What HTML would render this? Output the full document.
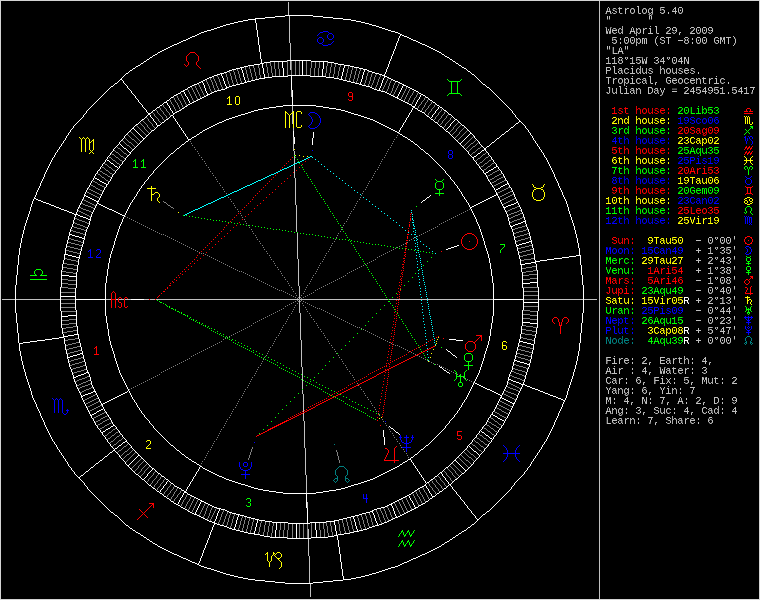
<!DOCTYPE html>
<html><head><meta charset="utf-8"><style>
html,body{margin:0;padding:0;background:#000;}
#wrap{position:relative;width:760px;height:600px;overflow:hidden;background:#000;}
svg{position:absolute;left:0;top:0;}
.ln{position:absolute;left:-1.5px;-webkit-text-stroke:0.3px currentColor;height:30px;white-space:pre;font-family:"Liberation Mono",monospace;font-size:30px;line-height:30px;}
.sh{position:relative;left:0;}
#tw{position:absolute;left:600px;top:1px;width:158px;height:440px;overflow:hidden;}
#panel{position:absolute;left:6px;top:5px;width:480px;height:1300px;transform-origin:0 0;transform:scale(0.333333);will-change:transform;}
</style></head><body><div id="wrap">
<svg width="760" height="600" viewBox="0 0 760 600" shape-rendering="crispEdges">
<path fill="rgb(192,192,192)" d="M288 2h1v13h-1zM289 16h1v27h-1zM290 43h1v17h-1zM290 61h1v9h-1zM291 90h1v7h-1zM292 106h1v6h-1zM292 113h1v11h-1zM293 128h1v3h-1zM293 137h1v14h-1zM294 151h1v4h-1zM294 156h1v8h-1zM294 165h1v13h-1zM295 178h1v27h-1zM296 205h1v27h-1zM297 233h1v26h-1zM298 259h1v27h-1zM299 286h1v13h-1zM584 299h13v1h-13zM300 299h88v1h-88zM125 299h6v1h-6zM539 299h44v1h-44zM144 299h5v1h-5zM156 299h143v1h-143zM2 299h13v1h-13zM389 299h104v1h-104zM16 299h44v1h-44zM116 299h2v1h-2zM150 299h5v1h-5zM119 299h5v1h-5zM106 299h5v1h-5zM299 300h1v13h-1zM300 313h1v27h-1zM301 340h1v27h-1zM302 367h1v22h-1zM302 390h1v4h-1zM303 394h1v18h-1zM303 413h1v8h-1zM304 421h1v27h-1zM305 448h1v27h-1zM306 475h1v18h-1zM307 502h1v6h-1zM308 529h1v9h-1zM308 539h1v17h-1zM309 556h1v27h-1zM310 584h1v13h-1zM599 1h1v598h-1z"/>
<path fill="rgb(255,255,255)" d="M285 15h28v1h-28zM313 16h10v1h-10zM275 16h10v1h-10zM265 17h10v1h-10zM323 17h10v1h-10zM333 18h10v1h-10zM255 18h10v1h-10zM248 19h8v1h-8zM343 19h8v1h-8zM243 20h5v1h-5zM351 20h5v1h-5zM238 21h5v1h-5zM356 21h5v1h-5zM255 20h1v3h-1zM361 22h4v1h-4zM234 22h4v1h-4zM230 23h4v1h-4zM365 23h4v1h-4zM369 24h3v1h-3zM226 24h4v1h-4zM223 25h3v1h-3zM372 25h4v1h-4zM220 26h3v1h-3zM376 26h3v1h-3zM217 27h3v1h-3zM379 27h3v1h-3zM214 28h3v1h-3zM382 28h3v1h-3zM256 23h1v7h-1zM211 29h3v1h-3zM385 29h3v1h-3zM388 30h3v1h-3zM207 30h4v1h-4zM391 31h4v1h-4zM204 31h3v1h-3zM395 32h3v1h-3zM201 32h3v1h-3zM199 33h2v1h-2zM398 33h2v1h-2zM400 34h2v1h-2zM197 34h2v1h-2zM402 35h2v1h-2zM400 35h1v1h-1zM195 35h2v1h-2zM257 30h1v7h-1zM192 36h3v1h-3zM404 36h3v1h-3zM399 36h1v2h-1zM190 37h2v1h-2zM407 37h2v1h-2zM188 38h2v1h-2zM409 38h2v1h-2zM411 39h2v1h-2zM186 39h2v1h-2zM398 38h1v3h-1zM413 40h3v1h-3zM183 40h3v1h-3zM416 41h2v1h-2zM181 41h2v1h-2zM397 41h1v2h-1zM179 42h2v1h-2zM418 42h2v1h-2zM177 43h2v1h-2zM420 43h2v1h-2zM258 37h1v8h-1zM174 44h3v1h-3zM422 44h3v1h-3zM396 43h1v3h-1zM172 45h2v1h-2zM425 45h2v1h-2zM427 46h2v1h-2zM170 46h2v1h-2zM429 47h2v1h-2zM168 47h2v1h-2zM395 46h1v3h-1zM166 48h2v1h-2zM431 48h2v1h-2zM164 49h2v1h-2zM433 49h2v1h-2zM394 49h1v2h-1zM435 50h2v1h-2zM162 50h2v1h-2zM259 45h1v7h-1zM160 51h2v1h-2zM437 51h2v1h-2zM439 52h2v1h-2zM158 52h2v1h-2zM393 51h1v3h-1zM441 53h1v1h-1zM157 53h1v1h-1zM442 54h2v1h-2zM155 54h2v1h-2zM392 54h1v2h-1zM153 55h2v1h-2zM444 55h1v1h-1zM445 56h2v1h-2zM152 56h1v1h-1zM150 57h2v1h-2zM447 57h2v1h-2zM260 52h1v7h-1zM391 56h1v3h-1zM449 58h1v1h-1zM149 58h1v1h-1zM147 59h2v1h-2zM450 59h2v1h-2zM390 59h1v2h-1zM452 60h1v1h-1zM146 60h1v1h-1zM287 60h24v1h-24zM270 61h17v1h-17zM311 61h17v1h-17zM144 61h2v1h-2zM453 61h2v1h-2zM261 59h1v4h-1zM143 62h1v1h-1zM328 62h6v1h-6zM264 62h6v1h-6zM455 62h1v1h-1zM389 61h1v3h-1zM141 63h2v1h-2zM456 63h2v1h-2zM260 63h4v1h-4zM334 63h4v1h-4zM140 64h1v1h-1zM458 64h1v1h-1zM338 64h6v1h-6zM254 64h6v1h-6zM248 65h6v1h-6zM459 65h2v1h-2zM344 65h6v1h-6zM138 65h2v1h-2zM388 64h1v3h-1zM136 66h2v1h-2zM244 66h4v1h-4zM350 66h4v1h-4zM461 66h1v1h-1zM282 62h1v6h-1zM262 64h1v4h-1zM344 66h1v2h-1zM354 67h5v1h-5zM135 67h1v1h-1zM240 67h4v1h-4zM462 67h2v1h-2zM323 62h1v7h-1zM387 67h1v2h-1zM236 68h4v1h-4zM464 68h2v1h-2zM359 68h4v1h-4zM133 68h2v1h-2zM241 68h1v2h-1zM363 69h4v1h-4zM232 69h4v1h-4zM466 69h1v1h-1zM132 69h1v1h-1zM467 70h1v1h-1zM229 70h3v1h-3zM130 70h2v1h-2zM367 70h2v1h-2zM343 68h1v4h-1zM386 69h1v3h-1zM364 70h1v2h-1zM129 71h1v1h-1zM468 71h2v1h-2zM369 71h3v1h-3zM227 71h2v1h-2zM242 70h1v3h-1zM128 72h1v1h-1zM224 72h3v1h-3zM470 72h1v1h-1zM372 72h3v1h-3zM263 68h1v6h-1zM385 72h1v2h-1zM126 73h2v1h-2zM220 73h4v1h-4zM375 73h4v1h-4zM471 73h1v1h-1zM302 61h1v14h-1zM363 72h1v3h-1zM217 74h3v1h-3zM379 74h3v1h-3zM472 74h2v1h-2zM125 74h1v1h-1zM384 74h1v1h-1zM283 68h1v8h-1zM322 69h1v7h-1zM342 72h1v4h-1zM221 74h1v2h-1zM124 75h1v1h-1zM474 75h1v1h-1zM288 75h22v1h-22zM382 75h3v1h-3zM214 75h3v1h-3zM243 73h1v4h-1zM264 74h1v3h-1zM123 76h1v1h-1zM272 76h16v1h-16zM310 76h16v1h-16zM384 76h3v1h-3zM475 76h1v1h-1zM212 76h2v1h-2zM222 76h1v2h-1zM476 77h1v1h-1zM264 77h8v1h-8zM209 77h3v1h-3zM122 77h1v1h-1zM326 77h8v1h-8zM384 77h1v1h-1zM387 77h2v1h-2zM362 75h1v4h-1zM341 76h1v3h-1zM477 78h1v1h-1zM259 78h6v1h-6zM389 78h2v1h-2zM334 78h5v1h-5zM207 78h2v1h-2zM121 78h1v1h-1zM244 77h1v3h-1zM383 78h1v2h-1zM478 79h1v1h-1zM339 79h4v1h-4zM205 79h2v1h-2zM120 79h2v1h-2zM255 79h4v1h-4zM391 79h2v1h-2zM223 78h1v3h-1zM251 80h4v1h-4zM479 80h1v1h-1zM119 80h1v1h-1zM122 80h1v1h-1zM393 80h2v1h-2zM203 80h2v1h-2zM343 80h4v1h-4zM361 79h1v3h-1zM245 80h1v2h-1zM118 81h1v1h-1zM247 81h4v1h-4zM347 81h4v1h-4zM395 81h3v1h-3zM201 81h2v1h-2zM480 81h1v1h-1zM382 80h1v3h-1zM123 81h1v2h-1zM117 82h1v1h-1zM481 82h1v1h-1zM202 82h1v1h-1zM244 82h3v1h-3zM199 82h2v1h-2zM398 82h2v1h-2zM351 82h4v1h-4zM224 81h1v3h-1zM360 82h1v2h-1zM124 83h1v1h-1zM240 83h4v1h-4zM482 83h1v1h-1zM115 83h2v1h-2zM400 83h2v1h-2zM355 83h4v1h-4zM197 83h2v1h-2zM203 83h1v2h-1zM236 84h4v1h-4zM359 84h3v1h-3zM114 84h1v1h-1zM194 84h3v1h-3zM483 84h2v1h-2zM402 84h2v1h-2zM125 84h1v1h-1zM381 83h1v3h-1zM225 84h1v2h-1zM232 85h4v1h-4zM126 85h1v1h-1zM403 85h3v1h-3zM362 85h4v1h-4zM113 85h1v1h-1zM192 85h2v1h-2zM485 85h1v1h-1zM190 86h2v1h-2zM226 86h1v1h-1zM229 86h3v1h-3zM406 86h2v1h-2zM486 86h1v1h-1zM366 86h4v1h-4zM111 86h2v1h-2zM204 85h1v3h-1zM380 86h1v2h-1zM402 86h1v2h-1zM127 86h1v2h-1zM110 87h1v1h-1zM226 87h3v1h-3zM370 87h2v1h-2zM487 87h2v1h-2zM408 87h2v1h-2zM188 87h2v1h-2zM410 88h2v1h-2zM128 88h1v1h-1zM489 88h1v1h-1zM372 88h2v1h-2zM225 88h2v1h-2zM109 88h1v1h-1zM187 88h1v1h-1zM291 76h1v14h-1zM379 88h1v2h-1zM401 88h1v2h-1zM185 89h2v1h-2zM412 89h2v1h-2zM129 89h1v1h-1zM490 89h1v1h-1zM221 89h4v1h-4zM374 89h3v1h-3zM108 89h1v1h-1zM205 88h1v3h-1zM107 90h1v1h-1zM183 90h2v1h-2zM491 90h1v1h-1zM377 90h4v1h-4zM414 90h2v1h-2zM130 90h1v1h-1zM217 90h4v1h-4zM400 90h1v2h-1zM106 91h1v1h-1zM381 91h4v1h-4zM416 91h2v1h-2zM181 91h3v1h-3zM214 91h3v1h-3zM492 91h1v1h-1zM206 91h1v2h-1zM131 91h1v2h-1zM418 92h1v1h-1zM385 92h2v1h-2zM212 92h2v1h-2zM180 92h1v1h-1zM493 92h1v1h-1zM105 92h1v1h-1zM399 92h1v2h-1zM184 92h1v2h-1zM207 93h1v1h-1zM210 93h2v1h-2zM387 93h2v1h-2zM419 93h2v1h-2zM104 93h1v1h-1zM132 93h1v1h-1zM178 93h2v1h-2zM494 93h1v1h-1zM133 94h1v1h-1zM495 94h1v1h-1zM103 94h1v1h-1zM421 94h2v1h-2zM207 94h3v1h-3zM389 94h2v1h-2zM176 94h2v1h-2zM398 94h1v2h-1zM185 94h1v2h-1zM174 95h2v1h-2zM102 95h1v1h-1zM496 95h1v1h-1zM134 95h1v1h-1zM423 95h2v1h-2zM206 95h2v1h-2zM391 95h2v1h-2zM420 95h1v2h-1zM101 96h1v1h-1zM173 96h1v1h-1zM425 96h1v1h-1zM186 96h1v1h-1zM393 96h2v1h-2zM397 96h1v1h-1zM497 96h1v1h-1zM204 96h2v1h-2zM135 96h1v2h-1zM395 97h3v1h-3zM498 97h1v1h-1zM426 97h2v1h-2zM100 97h1v1h-1zM171 97h2v1h-2zM202 97h2v1h-2zM419 97h1v2h-1zM187 97h1v2h-1zM428 98h1v1h-1zM136 98h1v1h-1zM499 98h1v1h-1zM397 98h2v1h-2zM99 98h1v1h-1zM170 98h1v1h-1zM200 98h2v1h-2zM399 99h2v1h-2zM418 99h1v1h-1zM429 99h1v1h-1zM500 99h1v1h-1zM98 99h1v1h-1zM169 99h1v1h-1zM198 99h2v1h-2zM137 99h1v1h-1zM188 99h1v2h-1zM97 100h1v1h-1zM501 100h1v1h-1zM430 100h2v1h-2zM196 100h2v1h-2zM401 100h2v1h-2zM167 100h2v1h-2zM417 100h1v2h-1zM138 100h1v2h-1zM166 101h1v1h-1zM96 101h1v1h-1zM502 101h1v1h-1zM403 101h2v1h-2zM432 101h1v1h-1zM194 101h2v1h-2zM189 101h1v2h-1zM95 102h1v1h-1zM139 102h1v1h-1zM503 102h1v1h-1zM405 102h2v1h-2zM164 102h3v1h-3zM433 102h2v1h-2zM192 102h2v1h-2zM416 102h1v2h-1zM190 103h2v1h-2zM435 103h1v1h-1zM140 103h1v1h-1zM407 103h2v1h-2zM163 103h1v1h-1zM504 103h1v1h-1zM94 103h1v1h-1zM292 90h1v15h-1zM167 103h1v2h-1zM505 104h1v1h-1zM162 104h1v1h-1zM141 104h1v1h-1zM93 104h1v1h-1zM436 104h1v1h-1zM409 104h2v1h-2zM188 104h2v1h-2zM415 104h1v2h-1zM437 105h2v1h-2zM506 105h1v1h-1zM168 105h1v1h-1zM283 105h33v1h-33zM411 105h1v1h-1zM160 105h2v1h-2zM92 105h1v1h-1zM187 105h1v1h-1zM142 105h1v2h-1zM185 106h2v1h-2zM91 106h1v1h-1zM507 106h1v1h-1zM276 106h7v1h-7zM412 106h3v1h-3zM316 106h7v1h-7zM159 106h1v1h-1zM439 106h1v1h-1zM169 106h1v2h-1zM90 107h1v1h-1zM269 107h7v1h-7zM508 107h1v1h-1zM143 107h1v1h-1zM323 107h6v1h-6zM184 107h1v1h-1zM440 107h2v1h-2zM413 107h2v1h-2zM157 107h2v1h-2zM438 107h1v2h-1zM144 108h1v1h-1zM329 108h7v1h-7zM156 108h1v1h-1zM263 108h6v1h-6zM442 108h1v1h-1zM182 108h2v1h-2zM509 108h1v1h-1zM89 108h1v1h-1zM415 108h2v1h-2zM412 108h1v2h-1zM170 108h1v2h-1zM155 109h1v1h-1zM145 109h1v1h-1zM437 109h1v1h-1zM181 109h1v1h-1zM417 109h1v1h-1zM258 109h5v1h-5zM443 109h1v1h-1zM336 109h5v1h-5zM88 109h1v1h-1zM510 109h1v1h-1zM171 110h1v1h-1zM341 110h4v1h-4zM511 110h1v1h-1zM436 110h1v1h-1zM444 110h2v1h-2zM254 110h4v1h-4zM179 110h2v1h-2zM153 110h2v1h-2zM87 110h1v1h-1zM418 110h2v1h-2zM411 110h1v2h-1zM146 110h1v2h-1zM446 111h1v1h-1zM152 111h1v1h-1zM251 111h3v1h-3zM345 111h3v1h-3zM177 111h2v1h-2zM420 111h2v1h-2zM435 111h1v2h-1zM172 111h1v2h-1zM512 111h1v2h-1zM86 111h1v2h-1zM151 112h1v1h-1zM410 112h1v1h-1zM147 112h1v1h-1zM248 112h3v1h-3zM348 112h3v1h-3zM175 112h2v1h-2zM422 112h2v1h-2zM447 112h1v1h-1zM424 113h1v1h-1zM85 113h1v1h-1zM448 113h1v1h-1zM351 113h3v1h-3zM245 113h3v1h-3zM148 113h3v1h-3zM513 113h1v1h-1zM173 113h2v1h-2zM434 113h1v1h-1zM409 113h1v2h-1zM84 114h1v1h-1zM241 114h4v1h-4zM148 114h2v1h-2zM173 114h1v1h-1zM425 114h1v1h-1zM354 114h4v1h-4zM449 114h2v1h-2zM514 114h1v1h-1zM433 114h1v1h-1zM451 115h1v1h-1zM147 115h1v1h-1zM238 115h3v1h-3zM358 115h3v1h-3zM426 115h1v1h-1zM171 115h2v1h-2zM150 115h1v2h-1zM408 115h1v2h-1zM432 115h1v2h-1zM515 115h1v2h-1zM83 115h1v2h-1zM427 116h2v1h-2zM452 116h1v1h-1zM361 116h3v1h-3zM235 116h3v1h-3zM146 116h1v1h-1zM170 116h1v1h-1zM173 116h1v2h-1zM429 117h1v1h-1zM516 117h1v1h-1zM145 117h1v1h-1zM151 117h1v1h-1zM431 117h1v1h-1zM453 117h1v1h-1zM169 117h1v1h-1zM232 117h3v1h-3zM364 117h3v1h-3zM82 117h1v1h-1zM407 117h1v1h-1zM144 118h1v1h-1zM517 118h1v1h-1zM168 118h1v1h-1zM81 118h1v1h-1zM174 118h1v1h-1zM152 118h1v1h-1zM229 118h3v1h-3zM367 118h3v1h-3zM430 118h1v1h-1zM454 118h1v1h-1zM406 118h1v2h-1zM80 119h1v1h-1zM226 119h3v1h-3zM370 119h3v1h-3zM142 119h2v1h-2zM455 119h2v1h-2zM518 119h1v1h-1zM166 119h2v1h-2zM431 119h2v1h-2zM153 119h1v2h-1zM175 119h1v2h-1zM79 120h1v1h-1zM457 120h1v1h-1zM373 120h2v1h-2zM141 120h1v1h-1zM519 120h1v1h-1zM433 120h1v1h-1zM454 120h1v1h-1zM224 120h2v1h-2zM165 120h1v1h-1zM405 120h1v2h-1zM140 121h1v1h-1zM458 121h1v1h-1zM453 121h1v1h-1zM164 121h1v1h-1zM78 121h1v1h-1zM519 121h2v1h-2zM222 121h2v1h-2zM434 121h1v1h-1zM375 121h2v1h-2zM154 121h1v1h-1zM176 121h1v1h-1zM139 122h1v1h-1zM155 122h1v1h-1zM452 122h1v1h-1zM518 122h1v1h-1zM77 122h1v1h-1zM404 122h1v1h-1zM521 122h1v1h-1zM219 122h3v1h-3zM459 122h1v1h-1zM435 122h2v1h-2zM162 122h2v1h-2zM377 122h2v1h-2zM177 122h1v2h-1zM161 123h1v1h-1zM451 123h1v1h-1zM522 123h1v1h-1zM76 123h1v1h-1zM437 123h1v1h-1zM217 123h2v1h-2zM516 123h2v1h-2zM379 123h2v1h-2zM460 123h1v1h-1zM138 123h1v1h-1zM156 123h1v2h-1zM403 123h1v2h-1zM136 124h2v1h-2zM438 124h1v1h-1zM178 124h1v1h-1zM523 124h1v1h-1zM461 124h1v1h-1zM515 124h1v1h-1zM215 124h2v1h-2zM381 124h2v1h-2zM75 124h1v1h-1zM160 124h1v1h-1zM450 124h1v2h-1zM74 125h1v1h-1zM135 125h1v1h-1zM524 125h1v1h-1zM157 125h3v1h-3zM383 125h2v1h-2zM213 125h2v1h-2zM462 125h2v1h-2zM514 125h1v1h-1zM439 125h1v1h-1zM402 125h1v2h-1zM179 125h1v2h-1zM385 126h2v1h-2zM157 126h1v1h-1zM464 126h1v1h-1zM134 126h1v1h-1zM513 126h1v1h-1zM211 126h2v1h-2zM440 126h2v1h-2zM449 126h1v1h-1zM525 126h1v2h-1zM73 126h1v2h-1zM133 127h1v1h-1zM156 127h1v1h-1zM448 127h1v1h-1zM465 127h1v1h-1zM511 127h2v1h-2zM442 127h1v1h-1zM209 127h2v1h-2zM180 127h1v1h-1zM387 127h2v1h-2zM401 127h1v1h-1zM155 128h1v1h-1zM72 128h1v1h-1zM389 128h2v1h-2zM132 128h2v1h-2zM447 128h1v1h-1zM443 128h1v1h-1zM207 128h2v1h-2zM466 128h1v1h-1zM526 128h1v1h-1zM510 128h1v1h-1zM400 128h1v2h-1zM181 128h1v2h-1zM467 129h1v1h-1zM71 129h1v1h-1zM446 129h1v1h-1zM131 129h1v1h-1zM444 129h1v1h-1zM205 129h2v1h-2zM527 129h1v1h-1zM134 129h1v1h-1zM391 129h2v1h-2zM509 129h1v1h-1zM154 129h1v1h-1zM152 130h2v1h-2zM182 130h1v1h-1zM135 130h1v1h-1zM508 130h1v1h-1zM393 130h2v1h-2zM468 130h1v1h-1zM203 130h2v1h-2zM130 130h1v1h-1zM445 130h1v1h-1zM528 130h1v2h-1zM399 130h1v2h-1zM70 130h1v2h-1zM151 131h1v1h-1zM129 131h1v1h-1zM136 131h1v1h-1zM469 131h1v1h-1zM202 131h1v1h-1zM506 131h2v1h-2zM395 131h2v1h-2zM446 131h2v1h-2zM183 131h1v2h-1zM505 132h1v1h-1zM128 132h1v1h-1zM150 132h1v1h-1zM69 132h1v1h-1zM448 132h1v1h-1zM470 132h1v1h-1zM529 132h1v1h-1zM397 132h2v1h-2zM137 132h1v1h-1zM200 132h2v1h-2zM199 133h1v1h-1zM399 133h1v1h-1zM138 133h1v1h-1zM184 133h1v1h-1zM470 133h2v1h-2zM449 133h1v1h-1zM504 133h1v1h-1zM127 133h1v1h-1zM149 133h1v1h-1zM68 133h1v2h-1zM530 133h1v2h-1zM139 134h1v1h-1zM469 134h1v1h-1zM126 134h1v1h-1zM148 134h1v1h-1zM400 134h2v1h-2zM502 134h2v1h-2zM197 134h2v1h-2zM450 134h1v1h-1zM472 134h1v1h-1zM185 134h1v2h-1zM402 135h1v1h-1zM451 135h1v1h-1zM473 135h1v1h-1zM140 135h1v1h-1zM501 135h1v1h-1zM147 135h1v1h-1zM468 135h1v1h-1zM125 135h1v1h-1zM196 135h1v1h-1zM531 135h1v1h-1zM67 135h1v1h-1zM293 131h1v6h-1zM467 136h1v1h-1zM500 136h1v1h-1zM452 136h1v1h-1zM141 136h1v1h-1zM403 136h2v1h-2zM186 136h1v1h-1zM146 136h1v1h-1zM194 136h2v1h-2zM313 132h1v6h-1zM66 136h1v2h-1zM124 136h1v2h-1zM474 136h1v2h-1zM532 136h1v2h-1zM145 137h1v1h-1zM453 137h1v1h-1zM405 137h2v1h-2zM192 137h2v1h-2zM142 137h1v1h-1zM466 137h1v1h-1zM499 137h1v1h-1zM187 137h1v2h-1zM123 138h1v1h-1zM143 138h2v1h-2zM465 138h1v1h-1zM497 138h2v1h-2zM475 138h1v1h-1zM407 138h1v1h-1zM454 138h1v1h-1zM191 138h1v1h-1zM533 138h1v2h-1zM65 138h1v2h-1zM476 139h1v1h-1zM496 139h1v1h-1zM143 139h1v1h-1zM188 139h3v1h-3zM122 139h1v1h-1zM464 139h1v1h-1zM408 139h2v1h-2zM455 139h1v1h-1zM188 140h1v1h-1zM495 140h1v1h-1zM64 140h1v1h-1zM463 140h1v1h-1zM534 140h1v1h-1zM410 140h1v1h-1zM477 140h1v1h-1zM456 140h1v1h-1zM142 140h1v1h-1zM121 140h1v1h-1zM478 141h1v1h-1zM462 141h1v1h-1zM457 141h1v1h-1zM411 141h2v1h-2zM141 141h1v1h-1zM120 141h1v1h-1zM494 141h1v1h-1zM186 141h2v1h-2zM535 141h1v2h-1zM63 141h1v2h-1zM413 142h1v1h-1zM140 142h1v1h-1zM458 142h1v1h-1zM185 142h1v1h-1zM492 142h2v1h-2zM461 142h1v1h-1zM294 137h1v7h-1zM479 142h1v2h-1zM119 142h1v2h-1zM139 143h1v1h-1zM491 143h1v1h-1zM536 143h1v1h-1zM459 143h2v1h-2zM414 143h1v1h-1zM184 143h1v1h-1zM62 143h1v1h-1zM312 138h1v7h-1zM118 144h1v1h-1zM490 144h1v1h-1zM415 144h2v1h-2zM480 144h1v1h-1zM182 144h2v1h-2zM120 144h1v1h-1zM460 144h1v1h-1zM138 144h1v1h-1zM61 144h1v2h-1zM537 144h1v2h-1zM117 145h1v1h-1zM489 145h1v1h-1zM481 145h1v1h-1zM181 145h1v1h-1zM417 145h1v1h-1zM137 145h1v1h-1zM121 145h1v1h-1zM461 145h1v1h-1zM418 146h1v1h-1zM462 146h1v1h-1zM538 146h1v1h-1zM60 146h1v1h-1zM136 146h1v1h-1zM482 146h1v1h-1zM122 146h1v1h-1zM487 146h2v1h-2zM180 146h1v1h-1zM116 146h1v1h-1zM123 147h1v1h-1zM419 147h1v1h-1zM463 147h1v1h-1zM135 147h1v1h-1zM486 147h1v1h-1zM179 147h1v1h-1zM115 147h1v1h-1zM483 147h1v1h-1zM539 147h1v2h-1zM59 147h1v2h-1zM420 148h1v1h-1zM114 148h1v1h-1zM134 148h1v1h-1zM464 148h1v1h-1zM177 148h2v1h-2zM124 148h2v1h-2zM484 148h2v2h-2zM133 149h1v1h-1zM58 149h1v1h-1zM540 149h1v1h-1zM465 149h1v1h-1zM126 149h1v1h-1zM421 149h2v1h-2zM176 149h1v1h-1zM113 149h1v2h-1zM423 150h1v1h-1zM466 150h1v1h-1zM485 150h1v1h-1zM482 150h2v1h-2zM175 150h1v1h-1zM132 150h1v1h-1zM127 150h1v1h-1zM57 150h1v2h-1zM541 150h1v2h-1zM128 151h1v1h-1zM112 151h1v1h-1zM424 151h1v1h-1zM467 151h1v1h-1zM486 151h1v1h-1zM174 151h1v1h-1zM131 151h1v1h-1zM481 151h1v1h-1zM56 152h1v1h-1zM173 152h1v1h-1zM425 152h1v1h-1zM480 152h1v1h-1zM542 152h1v1h-1zM487 152h1v1h-1zM129 152h2v1h-2zM111 152h1v1h-1zM468 152h1v2h-1zM426 153h2v1h-2zM130 153h1v1h-1zM171 153h2v1h-2zM478 153h2v1h-2zM543 153h1v2h-1zM55 153h1v2h-1zM110 153h1v2h-1zM488 153h1v2h-1zM129 154h1v1h-1zM469 154h1v1h-1zM428 154h1v1h-1zM477 154h1v1h-1zM170 154h1v1h-1zM429 155h1v1h-1zM128 155h1v1h-1zM489 155h1v1h-1zM470 155h1v1h-1zM169 155h1v1h-1zM109 155h1v1h-1zM476 155h1v1h-1zM544 155h1v2h-1zM54 155h1v2h-1zM490 156h1v1h-1zM168 156h1v1h-1zM430 156h1v1h-1zM108 156h1v1h-1zM471 156h1v1h-1zM474 156h2v1h-2zM127 156h1v1h-1zM53 157h1v1h-1zM431 157h1v1h-1zM167 157h1v1h-1zM545 157h1v1h-1zM126 157h1v1h-1zM472 157h2v1h-2zM107 157h1v2h-1zM491 157h1v2h-1zM166 158h1v1h-1zM432 158h1v1h-1zM52 158h1v2h-1zM473 158h1v2h-1zM546 158h1v2h-1zM125 158h1v2h-1zM106 159h1v1h-1zM492 159h1v1h-1zM433 159h1v1h-1zM165 159h1v1h-1zM474 160h1v1h-1zM124 160h1v1h-1zM164 160h1v1h-1zM107 160h2v1h-2zM434 160h1v1h-1zM547 160h1v2h-1zM51 160h1v2h-1zM493 160h1v2h-1zM105 160h1v2h-1zM435 161h1v1h-1zM123 161h1v1h-1zM475 161h1v1h-1zM163 161h1v1h-1zM109 161h1v1h-1zM436 162h1v1h-1zM162 162h1v1h-1zM110 162h1v1h-1zM104 162h1v1h-1zM494 162h1v1h-1zM476 162h1v2h-1zM50 162h1v2h-1zM548 162h1v2h-1zM122 162h1v2h-1zM161 163h1v1h-1zM495 163h1v1h-1zM103 163h1v1h-1zM437 163h1v1h-1zM111 163h2v1h-2zM477 164h1v1h-1zM113 164h1v1h-1zM438 164h1v1h-1zM121 164h1v1h-1zM160 164h1v1h-1zM49 164h1v2h-1zM549 164h1v2h-1zM102 164h1v2h-1zM496 164h1v2h-1zM478 165h1v1h-1zM114 165h1v1h-1zM120 165h1v1h-1zM159 165h1v1h-1zM439 165h1v1h-1zM440 166h1v1h-1zM101 166h1v1h-1zM115 166h2v1h-2zM496 166h2v1h-2zM158 166h1v1h-1zM479 166h1v2h-1zM550 166h1v2h-1zM48 166h1v2h-1zM119 166h1v2h-1zM117 167h1v1h-1zM441 167h1v1h-1zM157 167h1v1h-1zM494 167h2v1h-2zM498 167h1v2h-1zM100 167h1v2h-1zM118 168h1v1h-1zM156 168h1v1h-1zM480 168h1v1h-1zM442 168h1v1h-1zM493 168h1v1h-1zM47 168h1v2h-1zM551 168h1v2h-1zM117 169h1v1h-1zM155 169h1v1h-1zM481 169h1v1h-1zM491 169h2v1h-2zM443 169h1v1h-1zM99 169h1v1h-1zM499 169h1v1h-1zM500 170h1v1h-1zM98 170h1v1h-1zM116 170h1v1h-1zM444 170h1v1h-1zM482 170h1v1h-1zM489 170h2v1h-2zM154 170h1v1h-1zM46 170h1v2h-1zM552 170h1v2h-1zM488 171h1v1h-1zM501 171h1v2h-1zM97 171h1v2h-1zM153 171h1v2h-1zM483 171h1v2h-1zM115 171h1v2h-1zM445 171h1v2h-1zM486 172h2v1h-2zM45 172h1v2h-1zM553 172h1v2h-1zM446 173h1v1h-1zM96 173h1v1h-1zM502 173h1v1h-1zM152 173h1v1h-1zM114 173h1v1h-1zM484 173h2v1h-2zM151 174h1v1h-1zM113 174h1v1h-1zM447 174h1v1h-1zM485 174h1v1h-1zM95 174h1v2h-1zM503 174h1v2h-1zM150 175h1v1h-1zM448 175h1v1h-1zM44 174h1v3h-1zM554 174h1v3h-1zM112 175h1v2h-1zM486 175h1v2h-1zM449 176h1v1h-1zM149 176h1v1h-1zM504 176h1v2h-1zM94 176h1v2h-1zM555 177h1v2h-1zM43 177h1v2h-1zM148 177h1v2h-1zM487 177h1v2h-1zM450 177h1v2h-1zM111 177h1v2h-1zM95 178h2v1h-2zM505 178h1v2h-1zM93 178h1v2h-1zM451 179h1v1h-1zM147 179h1v1h-1zM97 179h2v1h-2zM488 179h1v2h-1zM110 179h1v2h-1zM556 179h1v2h-1zM42 179h1v2h-1zM506 180h1v1h-1zM452 180h1v1h-1zM99 180h1v1h-1zM146 180h1v1h-1zM92 180h1v1h-1zM489 181h1v1h-1zM145 181h1v1h-1zM453 181h1v1h-1zM100 181h2v1h-2zM109 181h1v1h-1zM91 181h1v2h-1zM507 181h1v2h-1zM41 181h1v2h-1zM557 181h1v2h-1zM102 182h2v1h-2zM144 182h1v2h-1zM490 182h1v2h-1zM108 182h1v2h-1zM454 182h1v2h-1zM507 183h2v1h-2zM104 183h2v1h-2zM90 183h1v2h-1zM491 184h1v1h-1zM508 184h1v1h-1zM143 184h1v1h-1zM106 184h2v1h-2zM505 184h2v1h-2zM455 184h1v1h-1zM40 183h1v3h-1zM558 183h1v3h-1zM503 185h2v1h-2zM456 185h1v1h-1zM142 185h1v1h-1zM106 185h1v2h-1zM492 185h1v2h-1zM509 185h1v2h-1zM89 185h1v2h-1zM501 186h2v1h-2zM457 186h1v2h-1zM141 186h1v2h-1zM39 186h1v2h-1zM559 186h1v2h-1zM500 187h1v1h-1zM88 187h1v1h-1zM493 187h1v1h-1zM105 187h1v1h-1zM510 187h1v1h-1zM140 188h1v1h-1zM458 188h1v1h-1zM498 188h2v1h-2zM38 188h1v2h-1zM511 188h1v2h-1zM560 188h1v2h-1zM87 188h1v2h-1zM104 188h1v2h-1zM494 188h1v2h-1zM496 189h2v1h-2zM139 189h1v2h-1zM459 189h1v2h-1zM495 190h1v2h-1zM512 190h1v2h-1zM86 190h1v2h-1zM561 190h1v2h-1zM103 190h1v2h-1zM37 190h1v2h-1zM460 191h1v1h-1zM138 191h1v1h-1zM85 192h1v2h-1zM102 192h1v2h-1zM496 192h1v2h-1zM513 192h1v2h-1zM137 192h1v2h-1zM461 192h1v2h-1zM562 192h1v3h-1zM36 192h1v3h-1zM84 194h1v1h-1zM496 194h2v1h-2zM101 194h1v2h-1zM462 194h1v2h-1zM136 194h1v2h-1zM497 195h1v1h-1zM430 195h1v1h-1zM494 195h2v1h-2zM84 195h2v1h-2zM514 194h1v3h-1zM35 195h1v2h-1zM563 195h1v2h-1zM84 196h1v1h-1zM429 196h1v1h-1zM463 196h1v1h-1zM135 196h1v1h-1zM492 196h2v1h-2zM86 196h2v1h-2zM498 196h1v2h-1zM100 196h1v2h-1zM427 197h2v1h-2zM34 197h1v1h-1zM88 197h2v1h-2zM490 197h2v1h-2zM515 197h1v2h-1zM134 197h1v2h-1zM464 197h1v2h-1zM83 197h1v2h-1zM564 197h1v2h-1zM488 198h2v1h-2zM34 198h2v1h-2zM426 198h1v1h-1zM90 198h2v1h-2zM99 198h1v2h-1zM499 198h1v2h-1zM133 199h1v1h-1zM425 199h1v1h-1zM465 199h1v1h-1zM92 199h2v1h-2zM486 199h2v1h-2zM36 199h2v1h-2zM33 199h1v2h-1zM516 199h1v2h-1zM565 199h1v2h-1zM82 199h1v2h-1zM98 200h1v1h-1zM38 200h3v1h-3zM94 200h2v1h-2zM423 200h2v1h-2zM484 200h2v1h-2zM500 200h1v2h-1zM466 200h1v2h-1zM132 200h1v2h-1zM517 201h1v1h-1zM96 201h3v1h-3zM482 201h2v1h-2zM41 201h2v1h-2zM422 201h1v1h-1zM81 201h1v2h-1zM467 202h1v1h-1zM97 202h1v1h-1zM131 202h1v1h-1zM480 202h2v1h-2zM516 202h2v1h-2zM43 202h3v1h-3zM421 202h1v1h-1zM566 201h1v3h-1zM32 201h1v3h-1zM501 202h1v2h-1zM46 203h3v1h-3zM514 203h2v1h-2zM478 203h2v1h-2zM97 203h2v1h-2zM80 203h1v2h-1zM468 203h1v2h-1zM518 203h1v2h-1zM130 203h1v2h-1zM511 204h3v1h-3zM49 204h2v1h-2zM99 204h2v1h-2zM476 204h2v1h-2zM96 204h1v2h-1zM502 204h1v2h-1zM508 205h3v1h-3zM51 205h3v1h-3zM101 205h2v1h-2zM474 205h2v1h-2zM567 204h1v3h-1zM31 204h1v3h-1zM79 205h1v2h-1zM129 205h1v2h-1zM469 205h1v2h-1zM519 205h1v2h-1zM103 206h2v1h-2zM503 206h1v1h-1zM54 206h2v1h-2zM506 206h2v1h-2zM472 206h2v1h-2zM95 206h1v2h-1zM56 207h3v1h-3zM503 207h3v1h-3zM105 207h2v1h-2zM470 207h2v1h-2zM128 207h1v2h-1zM520 207h1v2h-1zM78 207h1v2h-1zM470 208h1v1h-1zM59 208h2v1h-2zM107 208h2v1h-2zM504 208h1v2h-1zM94 208h1v2h-1zM109 209h3v1h-3zM61 209h3v1h-3zM30 207h1v4h-1zM568 207h1v4h-1zM471 209h1v2h-1zM127 209h1v2h-1zM64 210h3v1h-3zM112 210h2v1h-2zM77 209h1v3h-1zM521 209h1v3h-1zM505 210h1v2h-1zM93 210h1v2h-1zM114 211h2v1h-2zM67 211h2v1h-2zM126 211h1v2h-1zM472 211h1v2h-1zM69 212h3v1h-3zM116 212h2v1h-2zM29 211h1v3h-1zM569 211h1v3h-1zM506 212h1v2h-1zM522 212h1v2h-1zM76 212h1v2h-1zM92 212h1v2h-1zM72 213h2v1h-2zM118 213h2v1h-2zM473 213h1v2h-1zM125 213h1v2h-1zM74 214h4v1h-4zM120 214h2v1h-2zM78 215h2v1h-2zM122 215h3v1h-3zM28 214h1v3h-1zM91 214h1v3h-1zM507 214h1v3h-1zM523 214h1v3h-1zM570 214h1v3h-1zM474 215h1v2h-1zM75 215h1v2h-1zM124 216h1v1h-1zM80 216h3v1h-3zM83 217h3v1h-3zM90 217h1v2h-1zM123 217h1v2h-1zM475 217h1v2h-1zM86 218h2v1h-2zM74 217h1v3h-1zM571 217h1v3h-1zM27 217h1v3h-1zM524 217h1v3h-1zM88 219h3v1h-3zM508 217h1v4h-1zM90 220h1v1h-1zM525 220h1v1h-1zM122 219h1v3h-1zM476 219h1v3h-1zM523 221h3v1h-3zM26 220h1v3h-1zM572 220h1v3h-1zM521 222h2v1h-2zM73 220h1v4h-1zM477 222h1v2h-1zM525 222h1v2h-1zM121 222h1v2h-1zM518 223h3v1h-3zM509 221h1v4h-1zM89 221h1v4h-1zM515 224h3v1h-3zM573 223h1v3h-1zM25 223h1v3h-1zM478 224h1v2h-1zM120 224h1v2h-1zM513 225h2v1h-2zM510 225h1v1h-1zM526 224h1v3h-1zM72 224h1v3h-1zM88 225h1v2h-1zM510 226h3v1h-3zM479 226h1v3h-1zM119 226h1v3h-1zM71 227h1v2h-1zM511 227h1v2h-1zM527 227h1v2h-1zM87 227h1v2h-1zM24 226h1v4h-1zM574 226h1v4h-1zM118 229h1v3h-1zM512 229h1v3h-1zM86 229h1v3h-1zM528 229h1v3h-1zM480 229h1v3h-1zM70 229h1v3h-1zM23 230h1v4h-1zM575 230h1v4h-1zM69 232h1v2h-1zM117 232h1v3h-1zM481 232h1v3h-1zM69 234h3v1h-3zM85 232h1v4h-1zM529 232h1v4h-1zM513 232h1v4h-1zM69 235h1v1h-1zM72 235h3v1h-3zM75 236h4v1h-4zM576 234h1v4h-1zM22 234h1v4h-1zM482 235h1v3h-1zM116 235h1v3h-1zM84 236h1v2h-1zM79 237h3v1h-3zM82 238h3v1h-3zM68 236h1v4h-1zM530 236h1v4h-1zM514 236h1v4h-1zM84 239h1v1h-1zM115 238h1v3h-1zM483 238h1v3h-1zM531 240h1v1h-1zM529 241h3v1h-3zM577 238h1v5h-1zM21 238h1v5h-1zM526 242h3v1h-3zM515 240h1v4h-1zM83 240h1v4h-1zM67 240h1v4h-1zM531 242h1v2h-1zM522 243h4v1h-4zM484 241h1v4h-1zM114 241h1v4h-1zM516 244h1v1h-1zM519 244h3v1h-3zM516 245h3v1h-3zM457 245h2v1h-2zM82 244h1v3h-1zM516 246h1v1h-1zM454 246h3v1h-3zM578 243h1v5h-1zM20 243h1v5h-1zM66 244h1v4h-1zM532 244h1v4h-1zM113 245h1v3h-1zM485 245h1v3h-1zM451 247h3v1h-3zM448 248h3v1h-3zM446 249h2v1h-2zM517 247h1v4h-1zM81 247h1v4h-1zM112 248h1v3h-1zM486 248h1v3h-1zM533 248h1v6h-1zM65 248h1v6h-1zM487 251h1v3h-1zM111 251h1v3h-1zM19 248h1v7h-1zM579 248h1v7h-1zM80 251h1v4h-1zM518 251h1v4h-1zM64 254h4v1h-4zM68 255h4v1h-4zM576 255h5v1h-5zM79 255h1v2h-1zM569 256h7v1h-7zM72 256h4v1h-4zM110 254h1v4h-1zM488 254h1v4h-1zM562 257h7v1h-7zM76 257h4v1h-4zM519 255h1v4h-1zM79 258h1v1h-1zM554 258h8v1h-8zM534 254h1v6h-1zM64 255h1v5h-1zM547 259h7v1h-7zM540 260h7v1h-7zM535 260h1v1h-1zM535 261h5v1h-5zM489 258h1v5h-1zM109 258h1v5h-1zM531 262h5v1h-5zM520 259h1v5h-1zM63 260h1v4h-1zM525 263h6v1h-6zM535 263h1v1h-1zM18 255h1v10h-1zM580 256h1v9h-1zM78 259h1v6h-1zM520 264h5v1h-5zM490 263h1v6h-1zM108 263h1v6h-1zM536 264h1v6h-1zM62 264h1v6h-1zM77 265h1v7h-1zM521 265h1v7h-1zM581 265h1v10h-1zM17 265h1v10h-1zM61 270h1v5h-1zM107 269h1v7h-1zM491 269h1v7h-1zM76 272h1v4h-1zM61 275h8v1h-8zM69 276h8v1h-8zM537 270h1v12h-1zM522 272h1v11h-1zM106 276h1v7h-1zM492 276h1v7h-1zM530 282h8v1h-8zM522 283h8v1h-8zM582 275h1v10h-1zM16 275h1v10h-1zM61 276h1v11h-1zM537 283h1v4h-1zM76 277h1v11h-1zM522 284h1v4h-1zM60 287h1v9h-1zM75 288h1v8h-1zM60 296h16v1h-16zM493 283h1v16h-1zM105 283h1v16h-1zM523 288h1v11h-1zM75 297h1v2h-1zM493 299h31v1h-31zM75 299h31v1h-31zM131 299h13v1h-13zM538 287h1v15h-1zM523 300h1v2h-1zM523 302h16v1h-16zM75 300h1v10h-1zM523 303h1v7h-1zM60 297h1v14h-1zM538 303h1v8h-1zM583 285h1v28h-1zM15 285h1v28h-1zM76 310h1v5h-1zM493 300h1v16h-1zM105 300h1v16h-1zM61 311h1v5h-1zM68 315h9v1h-9zM61 316h7v1h-7zM522 310h1v12h-1zM537 311h1v12h-1zM582 313h1v10h-1zM16 313h1v10h-1zM106 316h1v7h-1zM492 316h1v7h-1zM522 322h8v1h-8zM530 323h8v1h-8zM76 316h1v10h-1zM522 323h1v3h-1zM61 317h1v11h-1zM537 324h1v4h-1zM107 323h1v6h-1zM491 323h1v6h-1zM581 323h1v10h-1zM17 323h1v10h-1zM77 326h1v8h-1zM521 326h1v8h-1zM536 328h1v6h-1zM62 328h1v6h-1zM74 334h5v1h-5zM490 329h1v7h-1zM108 329h1v7h-1zM63 334h1v2h-1zM68 335h6v1h-6zM63 336h5v1h-5zM535 334h1v4h-1zM59 337h5v1h-5zM520 334h1v5h-1zM78 335h1v4h-1zM52 338h7v1h-7zM449 339h7v1h-7zM45 339h7v1h-7zM489 336h1v5h-1zM109 336h1v5h-1zM519 339h1v2h-1zM456 340h7v1h-7zM37 340h8v1h-8zM519 341h4v1h-4zM30 341h7v1h-7zM18 333h1v10h-1zM580 333h1v10h-1zM79 339h1v4h-1zM23 342h7v1h-7zM519 342h1v1h-1zM523 342h4v1h-4zM64 338h1v6h-1zM534 338h1v6h-1zM19 343h4v1h-4zM527 343h4v1h-4zM110 341h1v4h-1zM488 341h1v4h-1zM531 344h3v1h-3zM80 343h1v4h-1zM518 343h1v4h-1zM487 345h1v3h-1zM111 345h1v3h-1zM65 344h1v6h-1zM533 345h1v5h-1zM446 349h1v1h-1zM579 343h1v8h-1zM19 344h1v7h-1zM517 347h1v4h-1zM81 347h1v4h-1zM112 348h1v3h-1zM486 348h1v3h-1zM447 350h1v1h-1zM448 351h2v1h-2zM82 351h1v2h-1zM450 352h1v1h-1zM66 350h1v4h-1zM532 350h1v4h-1zM113 351h1v3h-1zM485 351h1v3h-1zM451 353h1v1h-1zM80 353h3v1h-3zM516 351h1v4h-1zM452 354h1v1h-1zM77 354h3v1h-3zM82 354h1v1h-1zM578 351h1v5h-1zM20 351h1v5h-1zM73 355h4v1h-4zM453 355h2v1h-2zM67 354h1v3h-1zM70 356h3v1h-3zM455 356h1v1h-1zM484 354h1v4h-1zM114 354h1v4h-1zM456 357h1v1h-1zM67 357h3v1h-3zM531 354h1v5h-1zM515 355h1v4h-1zM83 355h1v4h-1zM67 358h1v1h-1zM514 359h1v1h-1zM21 356h1v5h-1zM577 356h1v5h-1zM115 358h1v3h-1zM483 358h1v3h-1zM514 360h3v1h-3zM84 359h1v3h-1zM517 361h3v1h-3zM514 361h1v1h-1zM68 359h1v4h-1zM530 359h1v4h-1zM520 362h4v1h-4zM482 361h1v3h-1zM116 361h1v3h-1zM529 363h1v1h-1zM524 363h3v1h-3zM576 361h1v4h-1zM22 361h1v4h-1zM527 364h3v1h-3zM85 362h1v4h-1zM513 362h1v4h-1zM69 363h1v4h-1zM117 364h1v3h-1zM481 364h1v3h-1zM529 365h1v2h-1zM439 366h1v1h-1zM440 367h2v1h-2zM23 365h1v4h-1zM575 365h1v4h-1zM528 367h1v2h-1zM70 367h1v2h-1zM442 368h1v1h-1zM86 366h1v4h-1zM512 366h1v4h-1zM118 367h1v3h-1zM480 367h1v3h-1zM443 369h1v1h-1zM444 370h2v1h-2zM71 369h1v3h-1zM24 369h1v3h-1zM574 369h1v3h-1zM527 369h1v3h-1zM511 370h1v2h-1zM87 370h1v2h-1zM446 371h1v1h-1zM479 370h1v3h-1zM119 370h1v3h-1zM447 372h2v1h-2zM86 372h3v1h-3zM510 372h1v2h-1zM84 373h2v1h-2zM449 373h1v1h-1zM88 373h1v1h-1zM72 372h1v3h-1zM526 372h1v3h-1zM478 373h1v2h-1zM120 373h1v2h-1zM81 374h3v1h-3zM573 372h1v4h-1zM25 372h1v4h-1zM78 375h3v1h-3zM509 374h1v3h-1zM89 374h1v3h-1zM477 375h1v2h-1zM121 375h1v2h-1zM73 375h1v2h-1zM76 376h2v1h-2zM73 377h3v1h-3zM525 375h1v4h-1zM26 376h1v3h-1zM572 376h1v3h-1zM508 377h1v2h-1zM122 377h1v2h-1zM476 377h1v2h-1zM73 378h1v1h-1zM508 379h3v1h-3zM90 377h1v4h-1zM123 379h1v2h-1zM475 379h1v2h-1zM508 380h1v1h-1zM511 380h2v1h-2zM74 379h1v3h-1zM571 379h1v3h-1zM27 379h1v3h-1zM524 379h1v3h-1zM513 381h3v1h-3zM474 381h1v2h-1zM124 381h1v2h-1zM516 382h3v1h-3zM523 382h1v2h-1zM75 382h1v2h-1zM475 383h2v1h-2zM519 383h2v1h-2zM91 381h1v4h-1zM507 381h1v4h-1zM28 382h1v3h-1zM570 382h1v3h-1zM473 383h1v2h-1zM125 383h1v2h-1zM521 384h4v1h-4zM477 384h2v1h-2zM525 385h2v1h-2zM479 385h2v1h-2zM76 384h1v3h-1zM506 385h1v2h-1zM522 385h1v2h-1zM126 385h1v2h-1zM92 385h1v2h-1zM472 385h1v2h-1zM527 386h3v1h-3zM481 386h2v1h-2zM29 385h1v3h-1zM569 385h1v3h-1zM530 387h2v1h-2zM483 387h2v1h-2zM505 387h1v2h-1zM93 387h1v2h-1zM77 387h1v2h-1zM471 387h1v2h-1zM127 387h1v2h-1zM521 387h1v2h-1zM532 388h3v1h-3zM485 388h2v1h-2zM535 389h3v1h-3zM487 389h3v1h-3zM30 388h1v3h-1zM568 388h1v3h-1zM128 389h1v2h-1zM470 389h1v2h-1zM504 389h1v2h-1zM520 389h1v2h-1zM94 389h1v2h-1zM78 389h1v2h-1zM538 390h2v1h-2zM490 390h2v1h-2zM540 391h3v1h-3zM492 391h2v1h-2zM93 391h3v1h-3zM127 391h1v1h-1zM79 391h1v2h-1zM129 391h1v2h-1zM469 391h1v2h-1zM519 391h1v2h-1zM503 391h1v2h-1zM95 392h1v1h-1zM125 392h2v1h-2zM543 392h2v1h-2zM494 392h2v1h-2zM91 392h2v1h-2zM88 393h3v1h-3zM545 393h3v1h-3zM496 393h2v1h-2zM123 393h2v1h-2zM567 391h1v4h-1zM31 391h1v4h-1zM80 393h1v2h-1zM96 393h1v2h-1zM502 393h1v2h-1zM518 393h1v2h-1zM468 393h1v2h-1zM130 393h1v2h-1zM85 394h3v1h-3zM121 394h2v1h-2zM498 394h2v1h-2zM548 394h2v1h-2zM81 395h1v1h-1zM550 395h3v1h-3zM83 395h2v1h-2zM500 395h2v1h-2zM119 395h2v1h-2zM467 395h1v2h-1zM97 395h1v2h-1zM131 395h1v2h-1zM501 396h1v1h-1zM553 396h3v1h-3zM117 396h2v1h-2zM81 396h2v1h-2zM517 395h1v3h-1zM566 395h1v3h-1zM32 395h1v3h-1zM81 397h1v1h-1zM556 397h2v1h-2zM115 397h2v1h-2zM500 397h2v1h-2zM98 397h1v2h-1zM466 397h1v2h-1zM132 397h1v2h-1zM500 398h1v1h-1zM558 398h3v1h-3zM113 398h2v1h-2zM502 398h2v1h-2zM516 398h1v2h-1zM33 398h1v2h-1zM565 398h1v2h-1zM82 398h1v2h-1zM133 399h1v1h-1zM465 399h1v1h-1zM504 399h2v1h-2zM561 399h2v1h-2zM111 399h2v1h-2zM99 399h1v2h-1zM499 399h1v2h-1zM563 400h2v1h-2zM109 400h2v1h-2zM506 400h2v1h-2zM34 400h1v2h-1zM515 400h1v2h-1zM134 400h1v2h-1zM464 400h1v2h-1zM83 400h1v2h-1zM508 401h2v1h-2zM107 401h2v1h-2zM564 401h1v1h-1zM498 401h1v2h-1zM100 401h1v2h-1zM463 402h1v1h-1zM135 402h1v1h-1zM105 402h2v1h-2zM510 402h2v1h-2zM514 402h1v1h-1zM84 402h1v2h-1zM35 402h1v2h-1zM563 402h1v2h-1zM101 403h1v1h-1zM103 403h2v1h-2zM512 403h3v1h-3zM462 403h1v2h-1zM136 403h1v2h-1zM497 403h1v2h-1zM101 404h2v1h-2zM85 404h1v2h-1zM513 404h1v2h-1zM562 404h1v3h-1zM36 404h1v3h-1zM102 405h1v2h-1zM496 405h1v2h-1zM137 405h1v2h-1zM461 405h1v2h-1zM86 406h1v2h-1zM512 406h1v2h-1zM460 407h1v1h-1zM138 407h1v1h-1zM495 407h1v2h-1zM561 407h1v2h-1zM103 407h1v2h-1zM37 407h1v2h-1zM139 408h1v2h-1zM511 408h1v2h-1zM87 408h1v2h-1zM459 408h1v2h-1zM101 409h2v1h-2zM38 409h1v2h-1zM560 409h1v2h-1zM104 409h1v2h-1zM494 409h1v2h-1zM140 410h1v1h-1zM458 410h1v1h-1zM99 410h2v1h-2zM510 410h1v2h-1zM88 410h1v2h-1zM97 411h2v1h-2zM493 411h1v1h-1zM105 411h1v1h-1zM457 411h1v2h-1zM141 411h1v2h-1zM39 411h1v2h-1zM559 411h1v2h-1zM96 412h1v1h-1zM106 412h1v2h-1zM492 412h1v2h-1zM509 412h1v2h-1zM89 412h1v2h-1zM456 413h1v1h-1zM94 413h2v1h-2zM142 413h1v1h-1zM90 414h1v1h-1zM107 414h1v1h-1zM143 414h1v1h-1zM92 414h2v1h-2zM491 414h2v1h-2zM455 414h1v1h-1zM40 413h1v3h-1zM558 413h1v3h-1zM508 414h1v2h-1zM493 415h2v1h-2zM90 415h2v1h-2zM144 415h1v2h-1zM490 415h1v2h-1zM454 415h1v2h-1zM108 415h1v2h-1zM495 416h2v1h-2zM91 416h1v2h-1zM507 416h1v2h-1zM41 416h1v2h-1zM557 416h1v2h-1zM489 417h1v1h-1zM145 417h1v1h-1zM453 417h1v1h-1zM497 417h1v1h-1zM109 417h1v1h-1zM506 418h1v1h-1zM452 418h1v1h-1zM498 418h2v1h-2zM146 418h1v1h-1zM92 418h1v1h-1zM556 418h1v2h-1zM110 418h1v2h-1zM42 418h1v2h-1zM488 418h1v2h-1zM451 419h1v1h-1zM147 419h1v1h-1zM500 419h2v1h-2zM505 419h1v2h-1zM93 419h1v2h-1zM148 420h1v1h-1zM502 420h2v1h-2zM450 420h1v1h-1zM555 420h1v2h-1zM43 420h1v2h-1zM487 420h1v2h-1zM111 420h1v2h-1zM504 421h1v2h-1zM449 421h1v2h-1zM94 421h1v2h-1zM149 421h1v2h-1zM112 422h1v2h-1zM486 422h1v2h-1zM150 423h1v1h-1zM448 423h1v1h-1zM554 422h1v3h-1zM44 422h1v3h-1zM95 423h1v2h-1zM503 423h1v2h-1zM151 424h1v1h-1zM113 424h1v1h-1zM447 424h1v1h-1zM485 424h1v1h-1zM446 425h1v1h-1zM96 425h1v1h-1zM484 425h1v1h-1zM502 425h1v1h-1zM152 425h1v1h-1zM113 425h2v1h-2zM45 425h1v2h-1zM553 425h1v2h-1zM389 426h1v1h-1zM483 426h1v1h-1zM111 426h2v1h-2zM115 426h1v1h-1zM97 426h1v2h-1zM501 426h1v2h-1zM445 426h1v2h-1zM153 426h1v2h-1zM110 427h1v1h-1zM390 427h1v1h-1zM46 427h1v2h-1zM552 427h1v2h-1zM482 427h1v2h-1zM116 427h1v2h-1zM500 428h1v1h-1zM98 428h1v1h-1zM444 428h1v1h-1zM108 428h2v1h-2zM391 428h2v1h-2zM154 428h1v1h-1zM117 429h1v1h-1zM155 429h1v1h-1zM481 429h1v1h-1zM393 429h1v1h-1zM106 429h2v1h-2zM443 429h1v1h-1zM99 429h1v1h-1zM499 429h1v1h-1zM47 429h1v2h-1zM551 429h1v2h-1zM156 430h1v1h-1zM118 430h1v1h-1zM394 430h1v1h-1zM480 430h1v1h-1zM442 430h1v1h-1zM105 430h1v1h-1zM498 430h1v2h-1zM100 430h1v2h-1zM103 431h2v1h-2zM441 431h1v1h-1zM157 431h1v1h-1zM481 431h1v1h-1zM395 431h1v1h-1zM479 431h1v2h-1zM48 431h1v2h-1zM119 431h1v2h-1zM550 431h1v2h-1zM440 432h1v1h-1zM497 432h1v1h-1zM101 432h2v1h-2zM396 432h2v1h-2zM158 432h1v1h-1zM482 432h2v1h-2zM478 433h1v1h-1zM484 433h1v1h-1zM398 433h1v1h-1zM120 433h1v1h-1zM159 433h1v1h-1zM439 433h1v1h-1zM49 433h1v2h-1zM549 433h1v2h-1zM102 433h1v2h-1zM496 433h1v2h-1zM399 434h1v1h-1zM477 434h1v1h-1zM485 434h1v1h-1zM438 434h1v1h-1zM121 434h1v1h-1zM160 434h1v1h-1zM161 435h1v1h-1zM495 435h1v1h-1zM486 435h2v1h-2zM103 435h1v1h-1zM437 435h1v1h-1zM383 430h1v7h-1zM50 435h1v2h-1zM548 435h1v2h-1zM122 435h1v2h-1zM476 435h1v2h-1zM436 436h1v1h-1zM162 436h1v1h-1zM104 436h1v1h-1zM488 436h1v1h-1zM494 436h1v1h-1zM435 437h1v1h-1zM123 437h1v1h-1zM489 437h1v1h-1zM475 437h1v1h-1zM163 437h1v1h-1zM547 437h1v2h-1zM51 437h1v2h-1zM493 437h1v2h-1zM105 437h1v2h-1zM474 438h1v1h-1zM124 438h1v1h-1zM164 438h1v1h-1zM490 438h2v1h-2zM434 438h1v1h-1zM106 439h1v1h-1zM473 439h1v1h-1zM433 439h1v1h-1zM125 439h1v1h-1zM492 439h1v1h-1zM165 439h1v1h-1zM52 439h1v2h-1zM546 439h1v2h-1zM166 440h1v1h-1zM432 440h1v1h-1zM126 440h1v1h-1zM107 440h1v2h-1zM491 440h1v2h-1zM472 440h1v2h-1zM53 441h1v1h-1zM167 441h1v1h-1zM431 441h1v1h-1zM545 441h1v1h-1zM125 441h2v1h-2zM490 442h1v1h-1zM168 442h1v1h-1zM471 442h1v1h-1zM430 442h1v1h-1zM108 442h1v1h-1zM123 442h2v1h-2zM127 442h1v1h-1zM544 442h1v2h-1zM54 442h1v2h-1zM429 443h1v1h-1zM128 443h1v1h-1zM489 443h1v1h-1zM470 443h1v1h-1zM169 443h1v1h-1zM122 443h1v1h-1zM109 443h1v1h-1zM384 437h1v8h-1zM543 444h1v1h-1zM129 444h1v1h-1zM469 444h1v1h-1zM428 444h1v1h-1zM55 444h1v1h-1zM121 444h1v1h-1zM170 444h1v1h-1zM110 444h1v2h-1zM488 444h1v2h-1zM426 445h2v1h-2zM468 445h1v1h-1zM130 445h1v1h-1zM171 445h2v1h-2zM119 445h2v1h-2zM56 445h1v2h-1zM542 445h1v2h-1zM118 446h1v1h-1zM173 446h1v1h-1zM425 446h1v1h-1zM469 446h1v1h-1zM487 446h1v1h-1zM111 446h1v1h-1zM467 446h1v2h-1zM131 446h1v2h-1zM117 447h1v1h-1zM112 447h1v1h-1zM424 447h1v1h-1zM486 447h1v1h-1zM174 447h1v1h-1zM470 447h1v1h-1zM57 447h1v2h-1zM541 447h1v2h-1zM471 448h1v1h-1zM466 448h1v1h-1zM115 448h2v1h-2zM113 448h1v1h-1zM485 448h1v1h-1zM175 448h1v1h-1zM132 448h1v1h-1zM423 448h1v1h-1zM133 449h1v1h-1zM58 449h1v1h-1zM540 449h1v1h-1zM114 449h1v1h-1zM465 449h1v1h-1zM421 449h2v1h-2zM472 449h1v1h-1zM176 449h1v1h-1zM484 449h1v2h-1zM473 450h1v1h-1zM420 450h1v1h-1zM113 450h2v1h-2zM134 450h1v1h-1zM464 450h1v1h-1zM177 450h2v1h-2zM539 450h1v2h-1zM59 450h1v2h-1zM112 451h1v1h-1zM419 451h1v1h-1zM463 451h1v1h-1zM135 451h1v1h-1zM179 451h1v1h-1zM115 451h1v1h-1zM474 451h2v1h-2zM483 451h1v1h-1zM418 452h1v1h-1zM462 452h1v1h-1zM476 452h1v1h-1zM538 452h1v1h-1zM110 452h2v1h-2zM60 452h1v1h-1zM136 452h1v1h-1zM482 452h1v1h-1zM180 452h1v1h-1zM116 452h1v1h-1zM117 453h1v1h-1zM481 453h1v1h-1zM181 453h1v1h-1zM477 453h1v1h-1zM109 453h1v1h-1zM137 453h1v1h-1zM417 453h1v1h-1zM461 453h1v1h-1zM61 453h1v2h-1zM537 453h1v2h-1zM478 454h1v1h-1zM118 454h1v1h-1zM480 454h1v1h-1zM415 454h2v1h-2zM108 454h1v1h-1zM182 454h2v1h-2zM460 454h1v1h-1zM138 454h1v1h-1zM107 455h1v1h-1zM536 455h1v1h-1zM414 455h1v1h-1zM184 455h1v1h-1zM138 455h2v1h-2zM459 455h1v1h-1zM62 455h1v1h-1zM479 455h1v2h-1zM119 455h1v2h-1zM413 456h1v1h-1zM140 456h1v1h-1zM458 456h1v1h-1zM185 456h1v1h-1zM105 456h2v1h-2zM137 456h1v1h-1zM535 456h1v2h-1zM63 456h1v2h-1zM478 457h1v1h-1zM457 457h1v1h-1zM411 457h2v1h-2zM141 457h1v1h-1zM136 457h1v1h-1zM120 457h1v1h-1zM104 457h1v1h-1zM186 457h2v1h-2zM188 458h1v1h-1zM64 458h1v1h-1zM135 458h1v1h-1zM534 458h1v1h-1zM103 458h1v1h-1zM410 458h1v1h-1zM477 458h1v1h-1zM456 458h1v1h-1zM142 458h1v1h-1zM121 458h1v1h-1zM102 459h1v1h-1zM143 459h1v1h-1zM408 459h3v1h-3zM122 459h1v1h-1zM134 459h1v1h-1zM476 459h1v1h-1zM455 459h1v1h-1zM189 459h2v1h-2zM533 459h1v2h-1zM65 459h1v2h-1zM144 460h1v1h-1zM133 460h1v1h-1zM123 460h1v1h-1zM454 460h2v1h-2zM475 460h1v1h-1zM100 460h2v1h-2zM191 460h1v1h-1zM407 460h1v1h-1zM411 460h1v2h-1zM66 461h1v1h-1zM145 461h1v1h-1zM474 461h1v1h-1zM124 461h1v1h-1zM453 461h1v1h-1zM456 461h1v1h-1zM405 461h2v1h-2zM192 461h2v1h-2zM99 461h1v1h-1zM132 461h1v1h-1zM532 461h1v1h-1zM457 462h1v1h-1zM452 462h1v1h-1zM98 462h1v1h-1zM131 462h1v1h-1zM403 462h2v1h-2zM412 462h1v1h-1zM146 462h1v1h-1zM194 462h2v1h-2zM473 462h1v2h-1zM125 462h1v2h-1zM531 462h1v2h-1zM67 462h1v2h-1zM402 463h1v1h-1zM451 463h1v1h-1zM458 463h1v1h-1zM147 463h1v1h-1zM130 463h1v1h-1zM196 463h1v1h-1zM96 463h2v1h-2zM413 463h1v2h-1zM95 464h1v1h-1zM129 464h1v1h-1zM126 464h1v1h-1zM148 464h1v1h-1zM400 464h2v1h-2zM459 464h1v1h-1zM197 464h2v1h-2zM450 464h1v1h-1zM472 464h1v1h-1zM68 464h1v2h-1zM530 464h1v2h-1zM199 465h1v1h-1zM399 465h1v1h-1zM471 465h1v1h-1zM414 465h1v1h-1zM127 465h2v1h-2zM449 465h1v1h-1zM460 465h1v1h-1zM94 465h1v1h-1zM149 465h1v1h-1zM128 466h1v1h-1zM150 466h1v1h-1zM69 466h1v1h-1zM448 466h1v1h-1zM470 466h1v1h-1zM93 466h1v1h-1zM461 466h1v1h-1zM529 466h1v1h-1zM397 466h2v1h-2zM200 466h2v1h-2zM415 466h1v2h-1zM462 467h1v1h-1zM528 467h1v1h-1zM151 467h1v1h-1zM129 467h1v1h-1zM469 467h1v1h-1zM202 467h1v1h-1zM395 467h2v1h-2zM446 467h2v1h-2zM91 467h2v1h-2zM70 467h1v1h-1zM199 467h1v2h-1zM152 468h2v1h-2zM90 468h1v1h-1zM463 468h1v1h-1zM393 468h2v1h-2zM468 468h1v1h-1zM203 468h2v1h-2zM130 468h1v1h-1zM416 468h1v1h-1zM445 468h1v1h-1zM71 468h1v2h-1zM527 468h1v2h-1zM467 469h1v1h-1zM152 469h1v1h-1zM131 469h1v1h-1zM89 469h1v1h-1zM444 469h1v1h-1zM205 469h2v1h-2zM464 469h1v1h-1zM391 469h2v1h-2zM154 469h1v1h-1zM417 469h1v2h-1zM198 469h1v2h-1zM155 470h1v1h-1zM465 470h2v1h-2zM151 470h1v1h-1zM72 470h1v1h-1zM389 470h2v1h-2zM443 470h1v1h-1zM207 470h2v1h-2zM88 470h1v1h-1zM132 470h1v1h-1zM526 470h1v1h-1zM133 471h1v1h-1zM418 471h1v1h-1zM150 471h1v1h-1zM156 471h1v1h-1zM465 471h1v1h-1zM197 471h1v1h-1zM442 471h1v1h-1zM209 471h2v1h-2zM525 471h1v1h-1zM387 471h2v1h-2zM86 471h2v1h-2zM73 471h1v1h-1zM85 472h1v1h-1zM385 472h2v1h-2zM157 472h1v1h-1zM134 472h1v1h-1zM211 472h2v1h-2zM464 472h1v1h-1zM440 472h2v1h-2zM149 472h1v1h-1zM74 472h1v2h-1zM419 472h1v2h-1zM524 472h1v2h-1zM196 472h1v2h-1zM84 473h1v1h-1zM441 473h1v1h-1zM135 473h1v1h-1zM148 473h1v1h-1zM462 473h2v1h-2zM383 473h2v1h-2zM158 473h2v1h-2zM213 473h2v1h-2zM439 473h1v1h-1zM136 474h2v1h-2zM438 474h1v1h-1zM523 474h1v1h-1zM420 474h1v1h-1zM75 474h1v1h-1zM215 474h2v1h-2zM381 474h2v1h-2zM83 474h1v1h-1zM461 474h1v1h-1zM160 474h1v1h-1zM195 474h1v2h-1zM147 474h1v2h-1zM442 474h1v2h-1zM161 475h1v1h-1zM522 475h1v1h-1zM76 475h1v1h-1zM437 475h1v1h-1zM217 475h2v1h-2zM138 475h1v1h-1zM379 475h2v1h-2zM460 475h1v1h-1zM81 475h2v1h-2zM421 475h1v2h-1zM219 476h3v1h-3zM139 476h1v1h-1zM80 476h1v1h-1zM194 476h1v1h-1zM459 476h1v1h-1zM77 476h1v1h-1zM443 476h1v1h-1zM521 476h1v1h-1zM146 476h1v1h-1zM435 476h2v1h-2zM162 476h2v1h-2zM377 476h2v1h-2zM145 477h1v1h-1zM140 477h1v1h-1zM458 477h1v1h-1zM222 477h2v1h-2zM164 477h1v1h-1zM444 477h1v1h-1zM520 477h1v1h-1zM78 477h2v1h-2zM375 477h2v1h-2zM422 477h1v1h-1zM434 477h1v1h-1zM193 477h1v2h-1zM144 478h1v1h-1zM79 478h1v1h-1zM457 478h1v1h-1zM373 478h2v1h-2zM141 478h1v1h-1zM519 478h1v1h-1zM224 478h2v1h-2zM433 478h1v1h-1zM165 478h1v1h-1zM423 478h1v2h-1zM445 478h1v2h-1zM80 479h1v1h-1zM431 479h2v1h-2zM226 479h3v1h-3zM370 479h3v1h-3zM142 479h2v1h-2zM455 479h2v1h-2zM518 479h1v1h-1zM166 479h2v1h-2zM192 479h1v2h-1zM144 480h1v1h-1zM424 480h1v1h-1zM446 480h1v1h-1zM517 480h1v1h-1zM229 480h3v1h-3zM81 480h1v1h-1zM168 480h1v1h-1zM367 480h3v1h-3zM430 480h1v1h-1zM454 480h1v1h-1zM429 481h1v1h-1zM516 481h1v1h-1zM145 481h1v1h-1zM167 481h1v1h-1zM453 481h1v1h-1zM169 481h1v1h-1zM232 481h3v1h-3zM364 481h3v1h-3zM447 481h1v1h-1zM82 481h1v1h-1zM191 481h1v1h-1zM425 481h1v2h-1zM427 482h2v1h-2zM452 482h1v1h-1zM515 482h1v1h-1zM361 482h3v1h-3zM235 482h3v1h-3zM146 482h1v1h-1zM83 482h1v1h-1zM170 482h1v1h-1zM166 482h1v2h-1zM190 482h1v2h-1zM448 482h1v2h-1zM451 483h1v1h-1zM147 483h1v1h-1zM238 483h3v1h-3zM358 483h3v1h-3zM426 483h1v1h-1zM171 483h2v1h-2zM84 483h1v2h-1zM514 483h1v2h-1zM241 484h4v1h-4zM173 484h1v1h-1zM425 484h1v1h-1zM354 484h4v1h-4zM148 484h1v1h-1zM449 484h2v1h-2zM165 484h1v1h-1zM189 484h1v2h-1zM85 485h1v1h-1zM448 485h1v1h-1zM174 485h1v1h-1zM164 485h1v1h-1zM351 485h3v1h-3zM245 485h3v1h-3zM513 485h1v1h-1zM149 485h2v1h-2zM424 485h2v1h-2zM450 485h1v1h-1zM451 486h1v1h-1zM188 486h1v1h-1zM151 486h1v1h-1zM86 486h1v1h-1zM512 486h1v1h-1zM248 486h3v1h-3zM348 486h3v1h-3zM175 486h2v1h-2zM422 486h2v1h-2zM447 486h1v1h-1zM426 486h1v2h-1zM163 486h1v2h-1zM446 487h1v1h-1zM152 487h1v1h-1zM251 487h3v1h-3zM345 487h3v1h-3zM177 487h2v1h-2zM420 487h2v1h-2zM511 487h1v2h-1zM452 487h1v2h-1zM87 487h1v2h-1zM187 487h1v2h-1zM341 488h4v1h-4zM444 488h2v1h-2zM162 488h1v1h-1zM254 488h4v1h-4zM427 488h1v1h-1zM179 488h2v1h-2zM153 488h2v1h-2zM418 488h2v1h-2zM155 489h1v1h-1zM161 489h1v1h-1zM453 489h1v1h-1zM181 489h1v1h-1zM258 489h5v1h-5zM443 489h1v1h-1zM336 489h5v1h-5zM88 489h1v1h-1zM417 489h1v1h-1zM510 489h1v1h-1zM428 489h1v2h-1zM186 489h1v2h-1zM329 490h7v1h-7zM156 490h1v1h-1zM263 490h6v1h-6zM415 490h2v1h-2zM442 490h1v1h-1zM182 490h2v1h-2zM454 490h1v1h-1zM509 490h1v1h-1zM89 490h1v1h-1zM160 490h1v2h-1zM90 491h1v1h-1zM269 491h7v1h-7zM508 491h1v1h-1zM157 491h2v1h-2zM184 491h2v1h-2zM414 491h1v1h-1zM323 491h6v1h-6zM440 491h2v1h-2zM455 491h1v1h-1zM429 491h1v2h-1zM184 492h3v1h-3zM91 492h1v1h-1zM507 492h1v1h-1zM276 492h7v1h-7zM316 492h7v1h-7zM412 492h2v1h-2zM159 492h1v1h-1zM439 492h1v1h-1zM456 492h1v2h-1zM437 493h2v1h-2zM506 493h1v1h-1zM283 493h33v1h-33zM411 493h1v1h-1zM160 493h2v1h-2zM430 493h1v1h-1zM92 493h1v1h-1zM187 493h1v1h-1zM183 493h1v2h-1zM505 494h1v1h-1zM457 494h1v1h-1zM436 494h1v1h-1zM162 494h1v1h-1zM93 494h1v1h-1zM409 494h2v1h-2zM188 494h2v1h-2zM431 494h1v2h-1zM190 495h2v1h-2zM435 495h1v1h-1zM458 495h1v1h-1zM407 495h2v1h-2zM163 495h1v1h-1zM504 495h1v1h-1zM94 495h1v1h-1zM182 495h1v2h-1zM95 496h1v1h-1zM164 496h2v1h-2zM503 496h1v1h-1zM405 496h2v1h-2zM432 496h3v1h-3zM192 496h2v1h-2zM459 496h1v1h-1zM409 496h1v2h-1zM166 497h1v1h-1zM96 497h1v1h-1zM502 497h1v1h-1zM403 497h2v1h-2zM432 497h1v1h-1zM181 497h1v1h-1zM194 497h2v1h-2zM460 497h1v2h-1zM501 498h1v1h-1zM97 498h1v1h-1zM430 498h2v1h-2zM196 498h2v1h-2zM401 498h2v1h-2zM167 498h2v1h-2zM410 498h1v2h-1zM180 498h1v2h-1zM399 499h2v1h-2zM429 499h1v1h-1zM500 499h1v1h-1zM98 499h1v1h-1zM169 499h1v1h-1zM198 499h2v1h-2zM461 499h1v1h-1zM462 500h1v1h-1zM428 500h1v1h-1zM499 500h1v1h-1zM411 500h1v1h-1zM397 500h2v1h-2zM99 500h1v1h-1zM170 500h1v1h-1zM200 500h2v1h-2zM179 500h1v2h-1zM201 501h3v1h-3zM463 501h1v1h-1zM498 501h1v1h-1zM426 501h2v1h-2zM395 501h2v1h-2zM171 501h2v1h-2zM100 501h1v1h-1zM412 501h1v2h-1zM101 502h1v1h-1zM173 502h1v1h-1zM425 502h1v1h-1zM393 502h2v1h-2zM497 502h1v1h-1zM204 502h2v1h-2zM178 502h1v2h-1zM200 502h1v2h-1zM464 502h1v2h-1zM174 503h2v1h-2zM102 503h1v1h-1zM496 503h1v1h-1zM423 503h2v1h-2zM206 503h2v1h-2zM391 503h2v1h-2zM413 503h1v2h-1zM495 504h1v1h-1zM103 504h1v1h-1zM465 504h1v1h-1zM389 504h3v1h-3zM421 504h2v1h-2zM208 504h2v1h-2zM176 504h2v1h-2zM199 504h1v2h-1zM391 505h1v1h-1zM210 505h2v1h-2zM387 505h2v1h-2zM419 505h2v1h-2zM104 505h1v1h-1zM466 505h1v1h-1zM178 505h2v1h-2zM494 505h1v1h-1zM414 505h1v2h-1zM418 506h1v1h-1zM385 506h2v1h-2zM212 506h2v1h-2zM180 506h1v1h-1zM493 506h1v1h-1zM105 506h1v1h-1zM306 494h1v14h-1zM467 506h1v2h-1zM392 506h1v2h-1zM198 506h1v2h-1zM106 507h1v1h-1zM381 507h4v1h-4zM415 507h3v1h-3zM214 507h3v1h-3zM492 507h1v1h-1zM181 507h2v1h-2zM107 508h1v1h-1zM183 508h2v1h-2zM491 508h1v1h-1zM377 508h4v1h-4zM414 508h2v1h-2zM468 508h1v1h-1zM217 508h4v1h-4zM197 508h1v2h-1zM185 509h2v1h-2zM412 509h2v1h-2zM490 509h1v1h-1zM469 509h1v1h-1zM221 509h4v1h-4zM374 509h3v1h-3zM108 509h1v1h-1zM393 508h1v3h-1zM219 509h1v2h-1zM410 510h2v1h-2zM489 510h1v1h-1zM470 510h1v1h-1zM109 510h1v1h-1zM372 510h2v1h-2zM225 510h2v1h-2zM187 510h1v1h-1zM196 510h1v2h-1zM110 511h1v1h-1zM370 511h3v1h-3zM487 511h2v1h-2zM227 511h2v1h-2zM188 511h2v1h-2zM408 511h2v1h-2zM218 511h1v2h-1zM471 511h1v2h-1zM190 512h2v1h-2zM406 512h2v1h-2zM229 512h3v1h-3zM366 512h4v1h-4zM486 512h1v1h-1zM111 512h2v1h-2zM372 512h1v1h-1zM394 511h1v3h-1zM195 512h1v2h-1zM232 513h4v1h-4zM404 513h2v1h-2zM472 513h1v1h-1zM113 513h1v1h-1zM192 513h2v1h-2zM485 513h1v1h-1zM362 513h4v1h-4zM373 513h1v2h-1zM473 514h1v1h-1zM236 514h4v1h-4zM359 514h3v1h-3zM114 514h1v1h-1zM194 514h3v1h-3zM483 514h2v1h-2zM402 514h2v1h-2zM217 513h1v3h-1zM395 514h1v2h-1zM474 515h1v1h-1zM240 515h4v1h-4zM482 515h1v1h-1zM115 515h2v1h-2zM400 515h2v1h-2zM355 515h4v1h-4zM197 515h2v1h-2zM238 515h1v2h-1zM117 516h1v1h-1zM481 516h1v1h-1zM244 516h3v1h-3zM396 516h1v1h-1zM199 516h2v1h-2zM398 516h2v1h-2zM351 516h4v1h-4zM374 515h1v3h-1zM475 516h1v2h-1zM118 517h1v1h-1zM247 517h4v1h-4zM347 517h4v1h-4zM395 517h3v1h-3zM201 517h2v1h-2zM480 517h1v1h-1zM216 516h1v3h-1zM353 517h1v2h-1zM251 518h4v1h-4zM119 518h1v1h-1zM479 518h1v1h-1zM393 518h2v1h-2zM203 518h2v1h-2zM343 518h4v1h-4zM476 518h1v1h-1zM237 517h1v3h-1zM339 519h4v1h-4zM205 519h2v1h-2zM391 519h2v1h-2zM120 519h1v1h-1zM255 519h4v1h-4zM477 519h2v1h-2zM375 518h1v3h-1zM215 519h1v2h-1zM477 520h1v1h-1zM259 520h6v1h-6zM389 520h2v1h-2zM334 520h5v1h-5zM207 520h2v1h-2zM121 520h1v1h-1zM354 519h1v3h-1zM265 521h7v1h-7zM326 521h9v1h-9zM209 521h3v1h-3zM214 521h1v1h-1zM122 521h1v1h-1zM476 521h1v1h-1zM387 521h2v1h-2zM307 508h1v15h-1zM257 520h1v3h-1zM376 521h1v2h-1zM123 522h1v1h-1zM272 522h16v1h-16zM310 522h16v1h-16zM384 522h3v1h-3zM212 522h3v1h-3zM475 522h1v1h-1zM236 520h1v4h-1zM382 523h2v1h-2zM124 523h1v1h-1zM288 523h22v1h-22zM474 523h1v1h-1zM214 523h3v1h-3zM334 522h1v3h-1zM377 523h1v2h-1zM217 524h3v1h-3zM214 524h1v1h-1zM379 524h3v1h-3zM472 524h2v1h-2zM125 524h1v1h-1zM355 522h1v4h-1zM126 525h2v1h-2zM220 525h4v1h-4zM375 525h4v1h-4zM471 525h1v1h-1zM256 523h1v4h-1zM235 524h1v3h-1zM213 525h1v2h-1zM128 526h1v1h-1zM224 526h3v1h-3zM372 526h3v1h-3zM470 526h1v1h-1zM129 527h1v1h-1zM468 527h2v1h-2zM369 527h3v1h-3zM227 527h2v1h-2zM356 526h1v3h-1zM234 527h1v2h-1zM467 528h1v1h-1zM229 528h3v1h-3zM130 528h2v1h-2zM367 528h2v1h-2zM276 523h1v7h-1zM315 523h1v7h-1zM212 527h1v3h-1zM363 529h4v1h-4zM232 529h4v1h-4zM466 529h1v1h-1zM132 529h1v1h-1zM335 525h1v6h-1zM255 527h1v4h-1zM357 529h1v2h-1zM236 530h4v1h-4zM464 530h2v1h-2zM359 530h4v1h-4zM133 530h2v1h-2zM211 530h1v2h-1zM354 531h5v1h-5zM135 531h1v1h-1zM240 531h4v1h-4zM462 531h2v1h-2zM254 531h1v2h-1zM136 532h2v1h-2zM244 532h4v1h-4zM461 532h1v1h-1zM350 532h4v1h-4zM248 533h7v1h-7zM459 533h2v1h-2zM344 533h6v1h-6zM138 533h2v1h-2zM336 531h1v4h-1zM210 532h1v3h-1zM140 534h1v1h-1zM458 534h1v1h-1zM338 534h6v1h-6zM254 534h6v1h-6zM141 535h2v1h-2zM260 535h4v1h-4zM456 535h2v1h-2zM334 535h4v1h-4zM275 530h1v7h-1zM316 530h1v7h-1zM143 536h1v1h-1zM328 536h6v1h-6zM264 536h6v1h-6zM455 536h1v1h-1zM296 524h1v14h-1zM209 535h1v3h-1zM270 537h17v1h-17zM311 537h17v1h-17zM144 537h2v1h-2zM453 537h2v1h-2zM452 538h1v1h-1zM146 538h1v1h-1zM287 538h24v1h-24zM337 536h1v4h-1zM208 538h1v2h-1zM147 539h2v1h-2zM450 539h2v1h-2zM449 540h1v1h-1zM149 540h1v1h-1zM150 541h2v1h-2zM447 541h2v1h-2zM207 540h1v3h-1zM445 542h2v1h-2zM152 542h1v1h-1zM444 543h1v1h-1zM153 543h2v1h-2zM206 543h1v2h-1zM442 544h2v1h-2zM155 544h2v1h-2zM441 545h1v1h-1zM157 545h1v1h-1zM338 540h1v7h-1zM158 546h2v1h-2zM439 546h2v1h-2zM205 545h1v3h-1zM160 547h2v1h-2zM437 547h2v1h-2zM435 548h2v1h-2zM162 548h2v1h-2zM204 548h1v2h-1zM164 549h2v1h-2zM433 549h2v1h-2zM166 550h2v1h-2zM431 550h2v1h-2zM429 551h2v1h-2zM168 551h2v1h-2zM203 550h1v3h-1zM427 552h2v1h-2zM170 552h2v1h-2zM339 547h1v7h-1zM172 553h2v1h-2zM425 553h2v1h-2zM174 554h3v1h-3zM422 554h3v1h-3zM202 553h1v3h-1zM177 555h2v1h-2zM420 555h2v1h-2zM179 556h2v1h-2zM418 556h2v1h-2zM201 556h1v2h-1zM416 557h2v1h-2zM181 557h2v1h-2zM413 558h3v1h-3zM183 558h3v1h-3zM411 559h2v1h-2zM186 559h2v1h-2zM200 558h1v3h-1zM188 560h2v1h-2zM409 560h2v1h-2zM340 554h1v8h-1zM190 561h2v1h-2zM407 561h2v1h-2zM199 561h1v2h-1zM192 562h3v1h-3zM404 562h3v1h-3zM402 563h2v1h-2zM198 563h1v1h-1zM195 563h2v1h-2zM400 564h2v1h-2zM197 564h2v1h-2zM199 565h2v1h-2zM398 565h2v1h-2zM395 566h3v1h-3zM201 566h3v1h-3zM391 567h4v1h-4zM204 567h3v1h-3zM341 562h1v7h-1zM388 568h3v1h-3zM207 568h4v1h-4zM211 569h3v1h-3zM385 569h3v1h-3zM214 570h3v1h-3zM382 570h3v1h-3zM217 571h3v1h-3zM379 571h3v1h-3zM220 572h3v1h-3zM376 572h3v1h-3zM223 573h3v1h-3zM372 573h4v1h-4zM369 574h3v1h-3zM226 574h4v1h-4zM342 569h1v7h-1zM230 575h4v1h-4zM365 575h4v1h-4zM361 576h4v1h-4zM234 576h4v1h-4zM238 577h5v1h-5zM356 577h5v1h-5zM343 576h1v3h-1zM351 578h5v1h-5zM243 578h5v1h-5zM248 579h7v1h-7zM343 579h8v1h-8zM333 580h10v1h-10zM255 580h10v1h-10zM265 581h10v1h-10zM323 581h10v1h-10zM313 582h10v1h-10zM275 582h10v1h-10zM285 583h28v1h-28z"/>
<path fill="rgb(128,128,128)" d="M270 62h1v4h-1zM327 62h1v4h-1zM266 63h1v4h-1zM331 63h1v4h-1zM335 64h1v3h-1zM340 65h1v2h-1zM311 62h1v6h-1zM315 62h1v6h-1zM319 62h1v6h-1zM258 65h1v3h-1zM253 66h1v2h-1zM278 62h1v7h-1zM274 62h1v7h-1zM348 66h1v3h-1zM249 66h1v3h-1zM245 67h1v3h-1zM352 67h1v3h-1zM339 67h1v4h-1zM356 68h1v3h-1zM237 69h1v2h-1zM360 69h1v2h-1zM254 68h1v4h-1zM233 70h1v2h-1zM271 66h1v7h-1zM326 66h1v7h-1zM267 67h1v6h-1zM330 67h1v6h-1zM347 69h1v4h-1zM250 69h1v4h-1zM368 71h1v2h-1zM229 71h1v2h-1zM334 67h1v7h-1zM351 70h1v4h-1zM246 70h1v4h-1zM238 71h1v3h-1zM359 71h1v3h-1zM225 73h1v1h-1zM372 73h1v1h-1zM291 61h1v14h-1zM306 61h1v14h-1zM299 61h1v14h-1zM295 61h1v14h-1zM259 68h1v7h-1zM355 71h1v4h-1zM234 72h1v3h-1zM376 74h1v1h-1zM287 61h1v15h-1zM318 68h1v8h-1zM310 68h1v8h-1zM314 68h1v8h-1zM275 69h1v7h-1zM279 69h1v7h-1zM338 71h1v5h-1zM255 72h1v4h-1zM367 73h1v3h-1zM325 73h1v3h-1zM272 73h1v3h-1zM230 73h1v3h-1zM329 73h1v4h-1zM346 73h1v4h-1zM251 73h1v4h-1zM268 73h1v4h-1zM333 74h1v3h-1zM226 74h1v3h-1zM371 74h1v3h-1zM375 75h1v2h-1zM380 75h1v2h-1zM217 75h1v2h-1zM247 74h1v4h-1zM350 74h1v4h-1zM358 74h1v4h-1zM239 74h1v4h-1zM260 75h1v3h-1zM337 76h1v2h-1zM354 75h1v4h-1zM235 75h1v4h-1zM256 76h1v3h-1zM379 77h1v2h-1zM218 77h1v2h-1zM213 77h1v2h-1zM388 78h1v1h-1zM366 76h1v4h-1zM231 76h1v4h-1zM374 77h1v3h-1zM345 77h1v3h-1zM252 77h1v3h-1zM210 78h1v2h-1zM370 77h1v4h-1zM227 77h1v4h-1zM357 78h1v3h-1zM240 78h1v3h-1zM248 78h1v3h-1zM349 78h1v3h-1zM387 79h1v2h-1zM214 79h1v2h-1zM391 80h1v1h-1zM353 79h1v3h-1zM219 79h1v3h-1zM378 79h1v3h-1zM236 79h1v3h-1zM211 80h1v2h-1zM206 80h1v2h-1zM232 80h1v3h-1zM365 80h1v3h-1zM373 80h1v3h-1zM215 81h1v2h-1zM386 81h1v2h-1zM356 81h1v2h-1zM390 81h1v2h-1zM241 81h1v2h-1zM395 82h1v1h-1zM228 81h1v3h-1zM369 81h1v3h-1zM237 82h1v2h-1zM207 82h1v2h-1zM399 83h1v1h-1zM220 82h1v3h-1zM377 82h1v3h-1zM212 82h1v3h-1zM364 83h1v2h-1zM233 83h1v2h-1zM394 83h1v2h-1zM372 83h1v2h-1zM385 83h1v2h-1zM198 84h1v1h-1zM216 83h1v3h-1zM389 83h1v3h-1zM398 84h1v2h-1zM229 84h1v2h-1zM208 84h1v2h-1zM368 84h1v2h-1zM194 85h1v1h-1zM199 85h1v2h-1zM221 85h1v2h-1zM376 85h1v2h-1zM384 85h1v2h-1zM371 85h1v2h-1zM393 85h1v3h-1zM213 85h1v3h-1zM195 86h1v2h-1zM397 86h1v2h-1zM217 86h1v2h-1zM191 87h1v1h-1zM209 86h1v3h-1zM388 86h1v3h-1zM375 87h1v2h-1zM200 87h1v2h-1zM222 87h1v2h-1zM406 87h1v2h-1zM383 87h1v2h-1zM218 88h1v2h-1zM214 88h1v2h-1zM196 88h1v2h-1zM192 88h1v2h-1zM396 88h1v2h-1zM187 89h1v1h-1zM392 88h1v3h-1zM210 89h1v2h-1zM387 89h1v2h-1zM382 89h1v2h-1zM405 89h1v2h-1zM409 89h1v2h-1zM201 89h1v2h-1zM215 90h1v1h-1zM188 90h1v2h-1zM197 90h1v2h-1zM193 90h1v2h-1zM395 90h1v2h-1zM386 91h1v1h-1zM391 91h1v2h-1zM408 91h1v2h-1zM413 91h1v2h-1zM211 91h1v2h-1zM202 91h1v2h-1zM404 91h1v2h-1zM194 92h1v2h-1zM189 92h1v2h-1zM394 92h1v2h-1zM198 92h1v2h-1zM180 93h1v1h-1zM390 93h1v1h-1zM403 93h1v2h-1zM412 93h1v2h-1zM417 93h1v2h-1zM407 93h1v2h-1zM203 93h1v2h-1zM199 94h1v2h-1zM195 94h1v2h-1zM190 94h1v2h-1zM181 94h1v2h-1zM393 94h1v2h-1zM204 95h1v1h-1zM411 95h1v1h-1zM176 95h1v1h-1zM402 95h1v2h-1zM406 95h1v2h-1zM416 95h1v2h-1zM182 96h1v2h-1zM177 96h1v2h-1zM200 96h1v2h-1zM410 96h1v2h-1zM196 96h1v2h-1zM191 96h1v2h-1zM425 97h1v1h-1zM173 97h1v1h-1zM415 97h1v1h-1zM405 97h1v2h-1zM401 97h1v2h-1zM424 98h1v2h-1zM183 98h1v2h-1zM178 98h1v2h-1zM174 98h1v2h-1zM197 98h1v2h-1zM414 98h1v2h-1zM409 98h1v2h-1zM192 98h1v2h-1zM428 99h1v1h-1zM404 99h1v2h-1zM179 100h1v1h-1zM423 100h1v1h-1zM413 100h1v2h-1zM408 100h1v2h-1zM427 100h1v2h-1zM193 100h1v2h-1zM184 100h1v2h-1zM175 100h1v2h-1zM170 100h1v2h-1zM422 101h1v1h-1zM180 101h1v2h-1zM176 102h1v1h-1zM426 102h1v1h-1zM407 102h1v1h-1zM171 102h1v2h-1zM431 102h1v2h-1zM185 102h1v2h-1zM421 102h1v2h-1zM412 102h1v2h-1zM177 103h1v2h-1zM425 103h1v2h-1zM181 103h1v2h-1zM172 104h1v1h-1zM435 104h1v1h-1zM420 104h1v1h-1zM411 104h1v1h-1zM430 104h1v1h-1zM186 104h1v2h-1zM419 105h1v1h-1zM429 105h1v1h-1zM182 105h1v2h-1zM424 105h1v2h-1zM178 105h1v2h-1zM173 105h1v2h-1zM163 105h1v2h-1zM434 105h1v2h-1zM418 106h1v2h-1zM428 106h1v2h-1zM183 107h1v1h-1zM164 107h1v1h-1zM433 107h1v1h-1zM159 107h1v1h-1zM423 107h1v1h-1zM174 107h1v2h-1zM179 107h1v2h-1zM427 108h1v1h-1zM432 108h1v1h-1zM417 108h1v1h-1zM165 108h1v1h-1zM422 108h1v2h-1zM160 108h1v2h-1zM426 109h1v1h-1zM180 109h1v1h-1zM166 109h1v2h-1zM441 109h1v2h-1zM431 109h1v2h-1zM175 109h1v2h-1zM161 110h1v1h-1zM156 110h1v1h-1zM421 110h1v1h-1zM425 110h1v2h-1zM440 111h1v1h-1zM167 111h1v1h-1zM162 111h1v1h-1zM430 111h1v1h-1zM445 111h1v1h-1zM176 111h1v1h-1zM157 111h1v2h-1zM429 112h1v1h-1zM424 112h1v1h-1zM168 112h1v1h-1zM152 112h1v1h-1zM439 112h1v1h-1zM444 112h1v2h-1zM163 112h1v2h-1zM158 113h1v1h-1zM153 113h1v1h-1zM438 113h1v2h-1zM169 113h1v2h-1zM428 113h1v2h-1zM448 114h1v1h-1zM164 114h1v1h-1zM443 114h1v1h-1zM159 114h1v1h-1zM154 114h1v2h-1zM437 115h1v1h-1zM427 115h1v1h-1zM447 115h1v1h-1zM442 115h1v1h-1zM170 115h1v1h-1zM165 115h1v1h-1zM160 115h1v1h-1zM155 116h1v1h-1zM161 116h1v1h-1zM436 116h1v1h-1zM166 116h1v2h-1zM441 116h1v2h-1zM446 116h1v2h-1zM156 117h1v1h-1zM451 117h1v1h-1zM146 117h1v1h-1zM435 117h1v2h-1zM162 117h1v2h-1zM440 118h1v1h-1zM167 118h1v1h-1zM157 118h1v1h-1zM147 118h1v1h-1zM445 118h1v1h-1zM450 118h1v2h-1zM444 119h1v1h-1zM163 119h1v1h-1zM439 119h1v1h-1zM434 119h1v1h-1zM148 119h1v2h-1zM158 119h1v2h-1zM449 120h1v1h-1zM164 120h1v1h-1zM443 120h1v1h-1zM142 120h1v1h-1zM438 120h1v2h-1zM448 121h1v1h-1zM143 121h1v1h-1zM159 121h1v1h-1zM149 121h1v1h-1zM442 121h1v2h-1zM144 122h1v1h-1zM150 122h1v1h-1zM458 122h1v1h-1zM437 122h1v1h-1zM447 122h1v1h-1zM160 122h1v1h-1zM446 123h1v1h-1zM441 123h1v1h-1zM151 123h1v1h-1zM145 123h1v1h-1zM140 123h1v1h-1zM457 123h1v1h-1zM440 124h1v1h-1zM141 124h1v1h-1zM456 124h1v1h-1zM146 124h1v1h-1zM152 124h1v2h-1zM445 124h1v2h-1zM136 125h1v1h-1zM142 125h1v1h-1zM460 125h1v1h-1zM455 125h1v1h-1zM147 125h1v2h-1zM444 126h1v1h-1zM143 126h1v1h-1zM459 126h1v1h-1zM454 126h1v1h-1zM153 126h1v1h-1zM137 126h1v1h-1zM458 127h1v1h-1zM148 127h1v1h-1zM464 127h1v1h-1zM443 127h1v1h-1zM154 127h1v1h-1zM138 127h1v1h-1zM144 127h1v2h-1zM453 127h1v2h-1zM139 128h1v1h-1zM457 128h1v1h-1zM463 128h1v1h-1zM149 128h1v1h-1zM462 129h1v1h-1zM150 129h1v1h-1zM452 129h1v1h-1zM145 129h1v1h-1zM140 129h1v1h-1zM456 129h1v2h-1zM467 130h1v1h-1zM451 130h1v1h-1zM151 130h1v1h-1zM141 130h1v1h-1zM146 130h1v1h-1zM461 130h1v1h-1zM147 131h1v1h-1zM466 131h1v1h-1zM130 131h1v1h-1zM142 131h1v1h-1zM460 131h1v1h-1zM455 131h1v1h-1zM450 131h1v1h-1zM131 132h1v1h-1zM465 132h1v1h-1zM148 132h1v1h-1zM143 132h1v1h-1zM454 132h1v1h-1zM449 132h1v1h-1zM459 132h1v2h-1zM144 133h1v1h-1zM398 133h1v1h-1zM453 133h1v1h-1zM464 133h1v1h-1zM132 133h1v1h-1zM133 134h1v1h-1zM145 134h1v1h-1zM452 134h1v1h-1zM458 134h1v1h-1zM463 134h1v1h-1zM127 134h1v1h-1zM128 135h1v1h-1zM457 135h1v1h-1zM462 135h1v1h-1zM397 135h1v1h-1zM134 135h1v1h-1zM146 135h1v1h-1zM473 136h1v1h-1zM129 136h1v1h-1zM135 136h1v1h-1zM456 136h1v1h-1zM461 136h1v1h-1zM136 137h1v1h-1zM472 137h1v1h-1zM130 137h1v1h-1zM460 137h1v1h-1zM455 137h1v1h-1zM396 137h1v1h-1zM125 138h1v1h-1zM131 138h1v1h-1zM471 138h1v1h-1zM459 138h1v1h-1zM137 138h1v1h-1zM458 139h1v1h-1zM394 139h1v1h-1zM470 139h1v1h-1zM126 139h1v1h-1zM132 139h2v1h-2zM138 139h1v1h-1zM139 140h1v1h-1zM457 140h1v1h-1zM469 140h1v1h-1zM122 140h1v1h-1zM134 140h1v1h-1zM475 140h1v1h-1zM127 140h1v1h-1zM128 141h1v1h-1zM123 141h1v1h-1zM140 141h1v1h-1zM135 141h1v1h-1zM474 141h1v1h-1zM190 141h1v1h-1zM468 141h1v1h-1zM393 141h1v1h-1zM467 142h1v1h-1zM473 142h1v1h-1zM478 142h1v1h-1zM124 142h1v1h-1zM136 142h1v1h-1zM129 142h2v1h-2zM392 143h1v1h-1zM131 143h1v1h-1zM477 143h1v1h-1zM471 143h2v1h-2zM125 143h1v1h-1zM191 143h1v1h-1zM137 143h1v1h-1zM466 143h1v1h-1zM470 144h1v1h-1zM465 144h1v1h-1zM126 144h1v1h-1zM476 144h1v1h-1zM132 144h1v1h-1zM133 145h1v1h-1zM391 145h1v1h-1zM469 145h1v1h-1zM127 145h2v1h-2zM464 145h1v1h-1zM475 145h1v1h-1zM192 145h1v1h-1zM129 146h1v1h-1zM463 146h1v1h-1zM481 146h1v1h-1zM468 146h1v1h-1zM134 146h1v1h-1zM473 146h2v1h-2zM467 147h1v1h-1zM117 147h1v1h-1zM194 147h1v1h-1zM480 147h1v1h-1zM130 147h1v1h-1zM390 147h1v1h-1zM472 147h1v1h-1zM131 148h1v1h-1zM471 148h1v1h-1zM478 148h2v1h-2zM118 148h2v1h-2zM466 148h1v1h-1zM195 149h1v1h-1zM470 149h1v1h-1zM477 149h1v1h-1zM388 149h1v1h-1zM120 149h1v1h-1zM132 149h1v1h-1zM476 150h1v1h-1zM469 150h1v1h-1zM121 150h1v1h-1zM114 150h1v1h-1zM387 151h1v1h-1zM197 151h1v1h-1zM122 151h1v1h-1zM468 151h1v1h-1zM475 151h1v1h-1zM115 151h1v1h-1zM123 152h1v1h-1zM473 152h2v1h-2zM486 152h1v1h-1zM116 152h2v1h-2zM386 153h1v1h-1zM118 153h1v1h-1zM472 153h1v1h-1zM485 153h1v1h-1zM111 153h1v1h-1zM124 153h2v1h-2zM198 153h1v1h-1zM119 154h1v1h-1zM126 154h1v1h-1zM483 154h2v1h-2zM112 154h2v1h-2zM471 154h1v1h-1zM199 155h1v1h-1zM114 155h1v1h-1zM127 155h1v1h-1zM482 155h1v1h-1zM120 155h1v1h-1zM385 155h1v1h-1zM481 156h1v1h-1zM488 156h1v1h-1zM115 156h1v1h-1zM121 156h2v1h-2zM123 157h1v1h-1zM486 157h2v1h-2zM480 157h1v1h-1zM109 157h2v1h-2zM116 157h2v1h-2zM201 157h1v1h-1zM384 157h1v1h-1zM118 158h1v1h-1zM124 158h1v1h-1zM485 158h1v1h-1zM478 158h2v1h-2zM111 158h1v1h-1zM112 159h1v1h-1zM484 159h1v1h-1zM382 159h1v1h-1zM119 159h1v1h-1zM491 159h1v1h-1zM202 159h1v1h-1zM477 159h1v1h-1zM113 160h2v1h-2zM120 160h2v1h-2zM489 160h2v1h-2zM476 160h1v1h-1zM483 160h1v1h-1zM204 161h1v1h-1zM381 161h1v1h-1zM482 161h1v1h-1zM122 161h1v1h-1zM115 161h1v1h-1zM488 161h1v1h-1zM480 162h2v1h-2zM487 162h1v1h-1zM116 162h1v1h-1zM380 163h1v1h-1zM479 163h1v1h-1zM485 163h2v1h-2zM492 163h2v1h-2zM205 163h1v1h-1zM117 163h2v1h-2zM104 163h1v1h-1zM478 164h1v1h-1zM484 164h1v1h-1zM491 164h1v1h-1zM119 164h1v1h-1zM105 164h2v1h-2zM107 165h1v1h-1zM490 165h1v1h-1zM206 165h1v1h-1zM379 165h1v1h-1zM483 165h1v1h-1zM488 166h2v1h-2zM481 166h2v1h-2zM108 166h1v1h-1zM109 167h2v1h-2zM102 167h2v1h-2zM480 167h1v1h-1zM378 167h1v1h-1zM487 167h1v1h-1zM208 167h1v1h-1zM104 168h1v1h-1zM486 168h1v1h-1zM111 168h1v1h-1zM209 169h1v1h-1zM112 169h1v1h-1zM377 169h1v1h-1zM484 169h2v1h-2zM105 169h1v1h-1zM113 170h2v1h-2zM497 170h2v1h-2zM106 170h2v1h-2zM99 170h1v1h-1zM483 170h1v1h-1zM375 171h1v1h-1zM210 171h1v1h-1zM108 171h1v1h-1zM100 171h2v1h-2zM495 171h2v1h-2zM109 172h1v1h-1zM102 172h1v1h-1zM493 172h2v1h-2zM103 173h2v1h-2zM110 173h2v1h-2zM97 173h1v1h-1zM501 173h1v1h-1zM212 173h1v1h-1zM492 173h1v1h-1zM374 173h1v1h-1zM98 174h2v1h-2zM112 174h1v1h-1zM105 174h2v1h-2zM490 174h2v1h-2zM499 174h2v1h-2zM107 175h1v1h-1zM373 175h1v1h-1zM497 175h2v1h-2zM488 175h2v1h-2zM213 175h1v1h-1zM100 175h1v1h-1zM487 176h1v1h-1zM101 176h1v1h-1zM503 176h1v1h-1zM108 176h2v1h-2zM495 176h2v1h-2zM215 177h1v1h-1zM110 177h1v1h-1zM501 177h2v1h-2zM372 177h1v1h-1zM102 177h2v1h-2zM494 177h1v1h-1zM492 178h2v1h-2zM104 178h1v1h-1zM499 178h2v1h-2zM216 179h1v1h-1zM497 179h2v1h-2zM490 179h2v1h-2zM371 179h1v1h-1zM105 179h1v1h-1zM106 180h2v1h-2zM489 180h1v1h-1zM496 180h1v1h-1zM504 180h2v1h-2zM93 181h2v1h-2zM494 181h2v1h-2zM502 181h2v1h-2zM108 181h1v1h-1zM217 181h1v1h-1zM369 181h1v1h-1zM95 182h2v1h-2zM500 182h2v1h-2zM492 182h2v1h-2zM97 183h1v1h-1zM491 183h1v1h-1zM219 183h1v1h-1zM498 183h2v1h-2zM368 183h1v1h-1zM98 184h2v1h-2zM496 184h2v1h-2zM220 185h1v1h-1zM494 185h2v1h-2zM100 185h2v1h-2zM367 185h1v1h-1zM91 185h2v1h-2zM93 186h2v1h-2zM493 186h1v1h-1zM102 186h2v1h-2zM95 187h1v1h-1zM222 187h1v1h-1zM366 187h1v1h-1zM508 187h2v1h-2zM104 187h1v1h-1zM506 188h2v1h-2zM88 188h1v1h-1zM96 188h2v1h-2zM98 189h2v1h-2zM365 189h1v1h-1zM223 189h1v1h-1zM504 189h2v1h-2zM89 189h2v1h-2zM100 190h2v1h-2zM502 190h2v1h-2zM91 190h2v1h-2zM93 191h2v1h-2zM102 191h1v1h-1zM510 191h2v1h-2zM500 191h2v1h-2zM224 191h1v1h-1zM363 191h1v1h-1zM95 192h2v1h-2zM87 192h2v1h-2zM508 192h2v1h-2zM498 192h2v1h-2zM226 193h1v1h-1zM506 193h2v1h-2zM89 193h2v1h-2zM497 193h1v1h-1zM362 193h1v1h-1zM97 193h2v1h-2zM504 194h2v1h-2zM512 194h2v1h-2zM91 194h2v1h-2zM99 194h2v1h-2zM502 195h2v1h-2zM93 195h2v1h-2zM510 195h2v1h-2zM361 195h1v1h-1zM95 196h2v1h-2zM500 196h2v1h-2zM508 196h2v1h-2zM97 197h2v1h-2zM360 197h1v1h-1zM228 197h1v1h-1zM506 197h2v1h-2zM499 197h1v1h-1zM514 198h1v1h-1zM504 198h2v1h-2zM512 199h2v1h-2zM502 199h2v1h-2zM359 199h1v1h-1zM83 199h1v1h-1zM230 199h1v1h-1zM510 200h2v1h-2zM84 200h2v1h-2zM501 200h1v1h-1zM231 201h1v1h-1zM163 201h1v1h-1zM508 201h2v1h-2zM357 201h1v1h-1zM86 201h2v1h-2zM164 202h2v1h-2zM506 202h2v1h-2zM88 202h2v1h-2zM166 203h1v1h-1zM233 203h1v1h-1zM356 203h1v1h-1zM504 203h2v1h-2zM90 203h2v1h-2zM81 203h2v1h-2zM92 204h2v1h-2zM503 204h1v1h-1zM167 204h1v1h-1zM83 204h2v1h-2zM85 205h3v1h-3zM94 205h2v1h-2zM234 205h1v1h-1zM355 205h1v1h-1zM168 205h2v1h-2zM517 206h2v1h-2zM170 206h1v1h-1zM88 206h3v1h-3zM354 207h1v1h-1zM235 207h1v1h-1zM171 207h2v1h-2zM79 207h2v1h-2zM91 207h2v1h-2zM515 207h2v1h-2zM93 208h1v1h-1zM512 208h3v1h-3zM173 208h1v1h-1zM81 208h2v1h-2zM353 209h1v1h-1zM237 209h1v1h-1zM469 209h1v1h-1zM83 209h3v1h-3zM510 209h2v1h-2zM467 210h1v1h-1zM86 210h3v1h-3zM519 210h2v1h-2zM508 210h2v1h-2zM78 210h1v1h-1zM351 211h1v1h-1zM238 211h1v1h-1zM465 211h1v1h-1zM506 211h2v1h-2zM517 211h2v1h-2zM89 211h2v1h-2zM79 211h2v1h-2zM91 212h1v1h-1zM463 212h1v1h-1zM514 212h3v1h-3zM81 212h2v1h-2zM240 213h1v1h-1zM511 213h3v1h-3zM520 213h2v1h-2zM83 213h2v1h-2zM461 213h1v1h-1zM350 213h1v1h-1zM518 214h2v1h-2zM459 214h1v1h-1zM85 214h2v1h-2zM509 214h2v1h-2zM457 215h1v1h-1zM349 215h1v1h-1zM508 215h1v1h-1zM87 215h2v1h-2zM515 215h3v1h-3zM241 215h1v1h-1zM125 216h1v1h-1zM455 216h1v1h-1zM513 216h2v1h-2zM89 216h2v1h-2zM242 217h1v1h-1zM348 217h1v1h-1zM453 217h1v1h-1zM511 217h2v1h-2zM522 217h2v1h-2zM127 217h1v1h-1zM451 218h1v1h-1zM129 218h1v1h-1zM75 218h2v1h-2zM509 218h2v1h-2zM520 218h2v1h-2zM77 219h2v1h-2zM244 219h1v1h-1zM131 219h1v1h-1zM517 219h3v1h-3zM449 219h1v1h-1zM347 219h1v1h-1zM133 220h1v1h-1zM514 220h3v1h-3zM79 220h3v1h-3zM447 220h1v1h-1zM346 221h1v1h-1zM135 221h1v1h-1zM245 221h1v1h-1zM82 221h3v1h-3zM512 221h2v1h-2zM445 221h1v1h-1zM74 222h1v1h-1zM510 222h2v1h-2zM443 222h1v1h-1zM85 222h2v1h-2zM137 222h1v1h-1zM139 223h1v1h-1zM441 223h1v1h-1zM344 223h1v1h-1zM75 223h2v1h-2zM87 223h2v1h-2zM246 223h1v1h-1zM77 224h3v1h-3zM439 224h1v1h-1zM141 224h1v1h-1zM248 225h1v1h-1zM143 225h1v1h-1zM80 225h3v1h-3zM343 225h1v1h-1zM525 225h1v1h-1zM145 226h1v1h-1zM437 226h1v1h-1zM522 226h3v1h-3zM83 226h2v1h-2zM73 226h1v1h-1zM342 227h1v1h-1zM435 227h1v1h-1zM249 227h1v1h-1zM147 227h1v1h-1zM74 227h3v1h-3zM518 227h4v1h-4zM85 227h2v1h-2zM515 228h3v1h-3zM433 228h1v1h-1zM77 228h4v1h-4zM149 228h1v1h-1zM151 229h1v1h-1zM431 229h1v1h-1zM341 229h1v1h-1zM526 229h2v1h-2zM81 229h3v1h-3zM513 229h2v1h-2zM251 229h1v1h-1zM429 230h1v1h-1zM523 230h3v1h-3zM71 230h2v1h-2zM84 230h2v1h-2zM153 230h1v1h-1zM155 231h1v1h-1zM340 231h1v1h-1zM519 231h4v1h-4zM427 231h1v1h-1zM252 231h1v1h-1zM73 231h3v1h-3zM76 232h4v1h-4zM425 232h1v1h-1zM516 232h3v1h-3zM157 232h1v1h-1zM253 233h1v1h-1zM527 233h2v1h-2zM80 233h3v1h-3zM514 233h2v1h-2zM338 233h1v1h-1zM159 233h1v1h-1zM423 233h1v1h-1zM161 234h1v1h-1zM421 234h1v1h-1zM524 234h3v1h-3zM83 234h2v1h-2zM163 234h1v1h-1zM520 235h4v1h-4zM337 235h1v1h-1zM419 235h1v1h-1zM255 235h1v1h-1zM165 235h1v1h-1zM167 236h1v1h-1zM417 236h1v1h-1zM517 236h3v1h-3zM415 237h1v1h-1zM169 237h1v1h-1zM256 237h1v1h-1zM515 237h2v1h-2zM528 237h2v1h-2zM336 237h1v1h-1zM171 238h1v1h-1zM413 238h1v1h-1zM69 238h2v1h-2zM525 238h3v1h-3zM521 239h4v1h-4zM173 239h1v1h-1zM411 239h1v1h-1zM335 239h1v1h-1zM71 239h3v1h-3zM257 239h1v1h-1zM518 240h3v1h-3zM175 240h1v1h-1zM409 240h1v1h-1zM74 240h4v1h-4zM334 241h1v1h-1zM177 241h1v1h-1zM259 241h1v1h-1zM78 241h3v1h-3zM516 241h2v1h-2zM179 242h1v1h-1zM407 242h1v1h-1zM68 242h3v1h-3zM81 242h2v1h-2zM332 243h1v1h-1zM260 243h1v1h-1zM181 243h1v1h-1zM405 243h1v1h-1zM71 243h4v1h-4zM403 244h1v1h-1zM75 244h4v1h-4zM183 244h1v1h-1zM185 245h1v1h-1zM529 245h3v1h-3zM79 245h3v1h-3zM262 245h1v1h-1zM401 245h1v1h-1zM331 245h1v1h-1zM67 246h3v1h-3zM399 246h1v1h-1zM525 246h4v1h-4zM187 246h1v1h-1zM521 247h4v1h-4zM189 247h1v1h-1zM330 247h1v1h-1zM397 247h1v1h-1zM70 247h4v1h-4zM263 247h1v1h-1zM518 248h3v1h-3zM191 248h1v1h-1zM395 248h1v1h-1zM74 248h4v1h-4zM329 249h1v1h-1zM530 249h3v1h-3zM193 249h1v1h-1zM78 249h3v1h-3zM264 249h1v1h-1zM393 249h1v1h-1zM391 250h1v1h-1zM526 250h4v1h-4zM66 250h3v1h-3zM195 250h1v1h-1zM328 251h1v1h-1zM266 251h1v1h-1zM69 251h4v1h-4zM522 251h4v1h-4zM197 251h1v1h-1zM389 251h1v1h-1zM199 252h1v1h-1zM73 252h4v1h-4zM387 252h1v1h-1zM519 252h3v1h-3zM385 253h1v1h-1zM531 253h2v1h-2zM77 253h3v1h-3zM201 253h1v1h-1zM267 253h1v1h-1zM203 253h1v1h-1zM326 253h1v1h-1zM383 254h1v1h-1zM527 254h4v1h-4zM205 254h1v1h-1zM269 255h1v1h-1zM381 255h1v1h-1zM325 255h1v1h-1zM523 255h4v1h-4zM207 255h1v1h-1zM209 256h1v1h-1zM379 256h1v1h-1zM520 256h3v1h-3zM324 257h1v1h-1zM270 257h1v1h-1zM211 257h1v1h-1zM377 257h1v1h-1zM65 258h2v1h-2zM531 258h3v1h-3zM213 258h1v1h-1zM215 259h1v1h-1zM67 259h4v1h-4zM375 259h1v1h-1zM271 259h1v1h-1zM323 259h1v1h-1zM524 259h7v1h-7zM217 260h1v1h-1zM373 260h1v1h-1zM521 260h3v1h-3zM71 260h5v1h-5zM76 261h2v1h-2zM273 261h1v1h-1zM219 261h1v1h-1zM371 261h1v1h-1zM322 261h1v1h-1zM221 262h1v1h-1zM369 262h1v1h-1zM320 263h1v1h-1zM223 263h1v1h-1zM64 263h3v1h-3zM367 263h1v1h-1zM274 263h1v1h-1zM365 264h1v1h-1zM67 264h7v1h-7zM225 264h1v1h-1zM275 265h1v1h-1zM319 265h1v1h-1zM227 265h1v1h-1zM74 265h3v1h-3zM363 265h1v1h-1zM532 266h4v1h-4zM229 266h1v1h-1zM361 266h1v1h-1zM318 267h1v1h-1zM277 267h1v1h-1zM526 267h6v1h-6zM231 267h1v1h-1zM63 267h4v1h-4zM359 267h1v1h-1zM522 268h4v1h-4zM357 268h1v1h-1zM67 268h6v1h-6zM233 268h1v1h-1zM73 269h4v1h-4zM317 269h1v1h-1zM278 269h1v1h-1zM235 269h1v1h-1zM355 269h1v1h-1zM353 270h1v1h-1zM237 270h1v1h-1zM533 270h4v1h-4zM280 271h1v1h-1zM351 271h1v1h-1zM62 271h4v1h-4zM316 271h1v1h-1zM239 271h1v1h-1zM241 271h1v1h-1zM526 271h7v1h-7zM349 272h1v1h-1zM66 272h7v1h-7zM243 272h1v1h-1zM523 272h3v1h-3zM281 273h1v1h-1zM315 273h1v1h-1zM245 273h1v1h-1zM73 273h3v1h-3zM347 273h1v1h-1zM247 274h1v1h-1zM529 274h8v1h-8zM345 275h1v1h-1zM313 275h1v1h-1zM249 275h1v1h-1zM282 275h1v1h-1zM523 275h6v1h-6zM343 276h1v1h-1zM251 276h1v1h-1zM253 277h1v1h-1zM341 277h1v1h-1zM284 277h1v1h-1zM312 277h1v1h-1zM255 278h1v1h-1zM530 278h7v1h-7zM339 278h1v1h-1zM337 279h1v1h-1zM311 279h1v1h-1zM523 279h7v1h-7zM257 279h1v1h-1zM285 279h1v1h-1zM62 279h6v1h-6zM68 280h8v1h-8zM259 280h1v1h-1zM335 280h1v1h-1zM261 281h1v1h-1zM287 281h1v1h-1zM333 281h1v1h-1zM310 281h1v1h-1zM331 282h1v1h-1zM263 282h1v1h-1zM329 283h1v1h-1zM265 283h1v1h-1zM309 283h1v1h-1zM62 283h6v1h-6zM288 283h1v1h-1zM68 284h8v1h-8zM267 284h1v1h-1zM327 284h1v1h-1zM269 285h1v1h-1zM307 285h1v1h-1zM289 285h1v1h-1zM325 285h1v1h-1zM271 286h1v1h-1zM323 286h1v1h-1zM291 287h1v1h-1zM321 287h1v1h-1zM61 287h7v1h-7zM306 287h1v1h-1zM273 287h1v1h-1zM523 287h15v1h-15zM68 288h7v1h-7zM275 288h1v1h-1zM319 288h1v1h-1zM305 289h1v1h-1zM292 289h1v1h-1zM317 289h1v1h-1zM277 289h1v1h-1zM281 290h1v1h-1zM279 290h1v1h-1zM315 290h1v1h-1zM283 291h1v1h-1zM524 291h14v1h-14zM293 291h1v1h-1zM304 291h1v1h-1zM285 292h1v1h-1zM313 292h1v1h-1zM61 292h14v1h-14zM311 293h1v1h-1zM303 293h1v1h-1zM287 293h1v1h-1zM295 293h1v1h-1zM289 294h1v1h-1zM309 294h1v1h-1zM296 295h1v1h-1zM291 295h1v1h-1zM307 295h1v1h-1zM524 295h14v1h-14zM301 295h1v1h-1zM305 296h1v1h-1zM293 296h1v1h-1zM303 297h1v1h-1zM300 297h1v1h-1zM295 297h1v1h-1zM298 297h1v1h-1zM297 298h1v1h-1zM301 298h1v1h-1zM299 299h1v1h-1zM524 299h14v1h-14zM61 299h14v1h-14zM297 300h1v1h-1zM301 300h1v1h-1zM303 301h1v1h-1zM300 301h1v1h-1zM295 301h1v1h-1zM298 301h1v1h-1zM305 302h1v1h-1zM293 302h1v1h-1zM307 303h1v1h-1zM291 303h1v1h-1zM297 303h1v1h-1zM302 303h1v1h-1zM61 303h14v1h-14zM289 304h1v1h-1zM309 304h1v1h-1zM311 305h1v1h-1zM303 305h1v1h-1zM287 305h1v1h-1zM295 305h1v1h-1zM313 306h1v1h-1zM285 306h1v1h-1zM524 306h14v1h-14zM294 307h1v1h-1zM305 307h1v1h-1zM61 307h14v1h-14zM315 307h1v1h-1zM283 308h1v1h-1zM319 308h1v1h-1zM317 308h1v1h-1zM321 309h1v1h-1zM281 309h1v1h-1zM306 309h1v1h-1zM293 309h1v1h-1zM523 310h7v1h-7zM279 310h1v1h-1zM323 310h1v1h-1zM307 311h1v1h-1zM62 311h14v1h-14zM292 311h1v1h-1zM325 311h1v1h-1zM277 311h1v1h-1zM530 311h7v1h-7zM275 312h1v1h-1zM327 312h1v1h-1zM291 313h1v1h-1zM273 313h1v1h-1zM329 313h1v1h-1zM309 313h1v1h-1zM523 314h7v1h-7zM271 314h1v1h-1zM331 314h1v1h-1zM269 315h1v1h-1zM310 315h1v1h-1zM289 315h1v1h-1zM530 315h7v1h-7zM333 315h1v1h-1zM335 316h1v1h-1zM267 316h1v1h-1zM288 317h1v1h-1zM265 317h1v1h-1zM311 317h1v1h-1zM337 317h1v1h-1zM523 318h7v1h-7zM339 318h1v1h-1zM263 318h1v1h-1zM313 319h1v1h-1zM341 319h1v1h-1zM287 319h1v1h-1zM261 319h1v1h-1zM69 319h7v1h-7zM530 319h7v1h-7zM343 320h1v1h-1zM259 320h1v1h-1zM62 320h7v1h-7zM314 321h1v1h-1zM286 321h1v1h-1zM257 321h1v1h-1zM345 321h1v1h-1zM255 322h1v1h-1zM347 322h1v1h-1zM253 323h1v1h-1zM316 323h1v1h-1zM349 323h1v1h-1zM69 323h7v1h-7zM285 323h1v1h-1zM351 324h1v1h-1zM62 324h7v1h-7zM353 325h1v1h-1zM283 325h1v1h-1zM523 325h3v1h-3zM251 325h1v1h-1zM317 325h1v1h-1zM73 326h4v1h-4zM249 326h1v1h-1zM355 326h1v1h-1zM526 326h7v1h-7zM247 327h1v1h-1zM318 327h1v1h-1zM66 327h7v1h-7zM282 327h1v1h-1zM533 327h4v1h-4zM359 327h1v1h-1zM357 327h1v1h-1zM245 328h1v1h-1zM63 328h3v1h-3zM361 328h1v1h-1zM243 329h1v1h-1zM281 329h1v1h-1zM522 329h4v1h-4zM320 329h1v1h-1zM363 329h1v1h-1zM365 330h1v1h-1zM73 330h4v1h-4zM526 330h6v1h-6zM241 330h1v1h-1zM280 331h1v1h-1zM321 331h1v1h-1zM532 331h4v1h-4zM239 331h1v1h-1zM67 331h6v1h-6zM367 331h1v1h-1zM237 332h1v1h-1zM369 332h1v1h-1zM63 332h4v1h-4zM323 333h1v1h-1zM235 333h1v1h-1zM522 333h3v1h-3zM371 333h1v1h-1zM279 333h1v1h-1zM373 334h1v1h-1zM525 334h7v1h-7zM233 334h1v1h-1zM375 335h1v1h-1zM324 335h1v1h-1zM532 335h3v1h-3zM278 335h1v1h-1zM231 335h1v1h-1zM229 336h1v1h-1zM377 336h1v1h-1zM227 337h1v1h-1zM276 337h1v1h-1zM325 337h1v1h-1zM521 337h2v1h-2zM379 337h1v1h-1zM75 338h3v1h-3zM381 338h1v1h-1zM523 338h4v1h-4zM225 338h1v1h-1zM275 339h1v1h-1zM327 339h1v1h-1zM527 339h5v1h-5zM68 339h7v1h-7zM223 339h1v1h-1zM383 339h1v1h-1zM532 340h2v1h-2zM65 340h3v1h-3zM385 340h1v1h-1zM221 341h1v1h-1zM387 341h1v1h-1zM328 341h1v1h-1zM274 341h1v1h-1zM76 342h3v1h-3zM389 342h1v1h-1zM219 342h1v1h-1zM391 343h1v1h-1zM329 343h1v1h-1zM273 343h1v1h-1zM72 343h4v1h-4zM217 343h1v1h-1zM215 344h1v1h-1zM68 344h4v1h-4zM393 344h1v1h-1zM213 345h1v1h-1zM397 345h1v1h-1zM66 345h2v1h-2zM519 345h3v1h-3zM272 345h1v1h-1zM395 345h1v1h-1zM331 345h1v1h-1zM211 346h1v1h-1zM77 346h3v1h-3zM522 346h4v1h-4zM399 346h1v1h-1zM209 347h1v1h-1zM332 347h1v1h-1zM270 347h1v1h-1zM73 347h4v1h-4zM526 347h4v1h-4zM401 347h1v1h-1zM207 348h1v1h-1zM403 348h1v1h-1zM530 348h3v1h-3zM69 348h4v1h-4zM269 349h1v1h-1zM334 349h1v1h-1zM518 349h3v1h-3zM66 349h3v1h-3zM205 349h1v1h-1zM405 349h1v1h-1zM78 350h3v1h-3zM521 350h4v1h-4zM203 350h1v1h-1zM407 350h1v1h-1zM74 351h4v1h-4zM335 351h1v1h-1zM268 351h1v1h-1zM409 351h1v1h-1zM201 351h1v1h-1zM525 351h4v1h-4zM411 352h1v1h-1zM199 352h1v1h-1zM70 352h4v1h-4zM529 352h3v1h-3zM413 353h1v1h-1zM197 353h1v1h-1zM517 353h3v1h-3zM67 353h3v1h-3zM267 353h1v1h-1zM336 353h1v1h-1zM520 354h4v1h-4zM415 354h1v1h-1zM195 354h1v1h-1zM524 355h4v1h-4zM266 355h1v1h-1zM193 355h1v1h-1zM338 355h1v1h-1zM417 355h1v1h-1zM419 356h1v1h-1zM191 356h1v1h-1zM516 356h2v1h-2zM528 356h3v1h-3zM518 357h3v1h-3zM339 357h1v1h-1zM264 357h1v1h-1zM421 357h1v1h-1zM81 357h2v1h-2zM78 358h3v1h-3zM521 358h4v1h-4zM189 358h1v1h-1zM423 358h1v1h-1zM425 359h1v1h-1zM341 359h1v1h-1zM74 359h4v1h-4zM525 359h3v1h-3zM187 359h1v1h-1zM263 359h1v1h-1zM185 360h1v1h-1zM427 360h1v1h-1zM71 360h3v1h-3zM528 360h2v1h-2zM342 361h1v1h-1zM429 361h1v1h-1zM183 361h1v1h-1zM69 361h2v1h-2zM82 361h2v1h-2zM262 361h1v1h-1zM79 362h3v1h-3zM181 362h1v1h-1zM431 362h1v1h-1zM261 363h1v1h-1zM179 363h1v1h-1zM75 363h4v1h-4zM343 363h1v1h-1zM433 363h1v1h-1zM177 364h1v1h-1zM435 364h1v1h-1zM437 364h1v1h-1zM514 364h2v1h-2zM72 364h3v1h-3zM345 365h1v1h-1zM260 365h1v1h-1zM516 365h3v1h-3zM70 365h2v1h-2zM83 365h2v1h-2zM175 365h1v1h-1zM439 365h1v1h-1zM441 366h1v1h-1zM519 366h4v1h-4zM173 366h1v1h-1zM80 366h3v1h-3zM171 367h1v1h-1zM258 367h1v1h-1zM346 367h1v1h-1zM76 367h4v1h-4zM523 367h3v1h-3zM443 367h1v1h-1zM169 368h1v1h-1zM526 368h2v1h-2zM73 368h3v1h-3zM513 368h2v1h-2zM445 368h1v1h-1zM167 369h1v1h-1zM72 369h1v1h-1zM257 369h1v1h-1zM447 369h1v1h-1zM515 369h3v1h-3zM84 369h2v1h-2zM347 369h1v1h-1zM518 370h4v1h-4zM81 370h3v1h-3zM449 370h1v1h-1zM165 370h1v1h-1zM451 371h1v1h-1zM349 371h1v1h-1zM256 371h1v1h-1zM522 371h3v1h-3zM77 371h4v1h-4zM512 371h2v1h-2zM163 371h1v1h-1zM161 372h1v1h-1zM453 372h1v1h-1zM74 372h3v1h-3zM514 372h2v1h-2zM525 372h1v1h-1zM73 373h1v1h-1zM516 373h3v1h-3zM255 373h1v1h-1zM455 373h1v1h-1zM350 373h1v1h-1zM457 374h1v1h-1zM519 374h3v1h-3zM159 374h1v1h-1zM254 375h1v1h-1zM157 375h1v1h-1zM522 375h2v1h-2zM510 375h2v1h-2zM459 375h1v1h-1zM352 375h1v1h-1zM155 376h1v1h-1zM87 376h2v1h-2zM512 376h2v1h-2zM524 376h1v1h-1zM353 377h1v1h-1zM463 377h1v1h-1zM514 377h3v1h-3zM252 377h1v1h-1zM85 377h2v1h-2zM153 377h1v1h-1zM151 378h1v1h-1zM465 378h1v1h-1zM82 378h3v1h-3zM517 378h3v1h-3zM467 379h1v1h-1zM354 379h1v1h-1zM79 379h3v1h-3zM520 379h2v1h-2zM251 379h1v1h-1zM149 379h1v1h-1zM77 380h2v1h-2zM469 380h1v1h-1zM147 380h1v1h-1zM522 380h2v1h-2zM88 380h2v1h-2zM145 381h1v1h-1zM75 381h2v1h-2zM250 381h1v1h-1zM471 381h1v1h-1zM86 381h2v1h-2zM508 382h1v1h-1zM473 382h1v1h-1zM143 382h1v1h-1zM83 382h3v1h-3zM90 383h1v1h-1zM249 383h1v1h-1zM141 383h1v1h-1zM509 383h2v1h-2zM357 383h1v1h-1zM81 383h2v1h-2zM139 384h1v1h-1zM79 384h2v1h-2zM511 384h2v1h-2zM88 384h2v1h-2zM248 385h1v1h-1zM77 385h2v1h-2zM513 385h2v1h-2zM85 385h3v1h-3zM137 385h1v1h-1zM358 385h1v1h-1zM507 386h1v1h-1zM82 386h3v1h-3zM135 386h1v1h-1zM515 386h2v1h-2zM133 387h1v1h-1zM247 387h1v1h-1zM360 387h1v1h-1zM517 387h2v1h-2zM508 387h2v1h-2zM80 387h2v1h-2zM91 387h2v1h-2zM78 388h2v1h-2zM131 388h1v1h-1zM510 388h3v1h-3zM89 388h2v1h-2zM519 388h2v1h-2zM513 389h3v1h-3zM129 389h1v1h-1zM361 389h1v1h-1zM245 389h1v1h-1zM86 389h3v1h-3zM505 390h1v1h-1zM84 390h2v1h-2zM516 390h2v1h-2zM244 391h1v1h-1zM82 391h2v1h-2zM506 391h2v1h-2zM518 391h1v1h-1zM363 391h1v1h-1zM508 392h3v1h-3zM80 392h2v1h-2zM364 393h1v1h-1zM503 393h1v1h-1zM243 393h1v1h-1zM511 393h3v1h-3zM95 394h1v1h-1zM514 394h2v1h-2zM504 394h2v1h-2zM516 395h1v1h-1zM242 395h1v1h-1zM93 395h2v1h-2zM365 395h1v1h-1zM506 395h2v1h-2zM508 396h2v1h-2zM91 396h2v1h-2zM510 397h2v1h-2zM367 397h1v1h-1zM241 397h1v1h-1zM89 397h2v1h-2zM87 398h2v1h-2zM96 398h2v1h-2zM512 398h2v1h-2zM239 399h1v1h-1zM514 399h2v1h-2zM94 399h2v1h-2zM85 399h2v1h-2zM368 399h1v1h-1zM84 400h1v1h-1zM92 400h2v1h-2zM98 401h2v1h-2zM370 401h1v1h-1zM238 401h1v1h-1zM500 401h2v1h-2zM90 401h2v1h-2zM502 402h2v1h-2zM96 402h2v1h-2zM88 402h2v1h-2zM237 403h1v1h-1zM504 403h2v1h-2zM94 403h2v1h-2zM371 403h1v1h-1zM86 403h2v1h-2zM92 404h2v1h-2zM498 404h1v1h-1zM506 404h2v1h-2zM508 405h2v1h-2zM499 405h2v1h-2zM100 405h2v1h-2zM372 405h1v1h-1zM90 405h2v1h-2zM236 405h1v1h-1zM510 406h2v1h-2zM98 406h2v1h-2zM88 406h2v1h-2zM501 406h2v1h-2zM496 407h1v1h-1zM235 407h1v1h-1zM87 407h1v1h-1zM503 407h2v1h-2zM96 407h2v1h-2zM374 407h1v1h-1zM505 408h2v1h-2zM497 408h2v1h-2zM94 408h2v1h-2zM499 409h2v1h-2zM375 409h1v1h-1zM233 409h1v1h-1zM92 409h2v1h-2zM507 409h2v1h-2zM90 410h2v1h-2zM501 410h1v1h-1zM509 410h1v1h-1zM232 411h1v1h-1zM502 411h2v1h-2zM376 411h1v1h-1zM89 411h1v1h-1zM494 411h1v1h-1zM495 412h2v1h-2zM104 412h2v1h-2zM504 412h2v1h-2zM231 413h1v1h-1zM497 413h2v1h-2zM506 413h2v1h-2zM378 413h1v1h-1zM102 413h2v1h-2zM100 414h2v1h-2zM499 414h1v1h-1zM98 415h2v1h-2zM107 415h1v1h-1zM500 415h2v1h-2zM379 415h1v1h-1zM230 415h1v1h-1zM502 416h2v1h-2zM96 416h2v1h-2zM105 416h2v1h-2zM103 417h2v1h-2zM490 417h1v1h-1zM504 417h2v1h-2zM94 417h2v1h-2zM229 417h1v1h-1zM491 418h2v1h-2zM93 418h1v1h-1zM101 418h2v1h-2zM109 418h1v1h-1zM227 419h1v1h-1zM382 419h1v1h-1zM107 419h2v1h-2zM493 419h1v1h-1zM100 419h1v1h-1zM494 420h1v1h-1zM98 420h2v1h-2zM105 420h2v1h-2zM103 421h2v1h-2zM226 421h1v1h-1zM383 421h1v1h-1zM495 421h2v1h-2zM96 421h2v1h-2zM488 421h1v1h-1zM95 422h1v1h-1zM102 422h1v1h-1zM497 422h1v1h-1zM489 422h2v1h-2zM111 422h1v1h-1zM491 423h1v1h-1zM498 423h1v1h-1zM109 423h2v1h-2zM100 423h2v1h-2zM385 423h1v1h-1zM225 423h1v1h-1zM98 424h2v1h-2zM486 424h1v1h-1zM492 424h2v1h-2zM499 424h2v1h-2zM107 424h2v1h-2zM386 425h1v1h-1zM501 425h1v1h-1zM97 425h1v1h-1zM487 425h2v1h-2zM105 425h2v1h-2zM494 425h2v1h-2zM224 425h1v1h-1zM489 426h1v1h-1zM104 426h1v1h-1zM496 426h1v1h-1zM490 427h1v1h-1zM223 427h1v1h-1zM497 427h2v1h-2zM388 427h1v1h-1zM102 427h2v1h-2zM483 427h1v1h-1zM491 428h2v1h-2zM484 428h2v1h-2zM100 428h2v1h-2zM115 428h1v1h-1zM499 428h1v1h-1zM221 429h1v1h-1zM486 429h1v1h-1zM113 429h2v1h-2zM389 429h1v1h-1zM493 429h1v1h-1zM112 430h1v1h-1zM487 430h1v1h-1zM494 430h1v1h-1zM220 431h1v1h-1zM118 431h1v1h-1zM488 431h2v1h-2zM495 431h2v1h-2zM390 431h1v1h-1zM111 431h1v1h-1zM109 432h2v1h-2zM490 432h1v1h-1zM116 432h2v1h-2zM392 433h1v1h-1zM491 433h1v1h-1zM219 433h1v1h-1zM108 433h1v1h-1zM115 433h1v1h-1zM479 434h1v1h-1zM107 434h1v1h-1zM114 434h1v1h-1zM492 434h2v1h-2zM120 434h1v1h-1zM105 435h2v1h-2zM119 435h1v1h-1zM218 435h1v1h-1zM480 435h2v1h-2zM393 435h1v1h-1zM112 435h2v1h-2zM494 435h1v1h-1zM117 436h2v1h-2zM482 436h1v1h-1zM111 436h1v1h-1zM394 437h1v1h-1zM110 437h1v1h-1zM217 437h1v1h-1zM476 437h1v1h-1zM116 437h1v1h-1zM483 437h1v1h-1zM122 438h1v1h-1zM108 438h2v1h-2zM484 438h2v1h-2zM115 438h1v1h-1zM477 438h2v1h-2zM107 439h1v1h-1zM216 439h1v1h-1zM479 439h1v1h-1zM114 439h1v1h-1zM486 439h1v1h-1zM121 439h1v1h-1zM396 439h1v1h-1zM474 440h1v1h-1zM113 440h1v1h-1zM480 440h1v1h-1zM487 440h1v1h-1zM119 440h2v1h-2zM488 441h2v1h-2zM118 441h1v1h-1zM214 441h1v1h-1zM397 441h1v1h-1zM475 441h1v1h-1zM111 441h2v1h-2zM481 441h2v1h-2zM117 442h1v1h-1zM110 442h1v1h-1zM476 442h2v1h-2zM483 442h1v1h-1zM478 443h1v1h-1zM484 443h1v1h-1zM399 443h1v1h-1zM213 443h1v1h-1zM471 443h1v1h-1zM116 443h1v1h-1zM114 444h2v1h-2zM479 444h1v1h-1zM485 444h2v1h-2zM127 444h1v1h-1zM472 444h1v1h-1zM487 445h1v1h-1zM212 445h1v1h-1zM126 445h1v1h-1zM113 445h1v1h-1zM480 445h1v1h-1zM473 445h2v1h-2zM400 445h1v1h-1zM475 446h1v1h-1zM112 446h1v1h-1zM481 446h2v1h-2zM124 446h2v1h-2zM123 447h1v1h-1zM211 447h1v1h-1zM130 447h1v1h-1zM476 447h1v1h-1zM401 447h1v1h-1zM483 447h1v1h-1zM252 447h1v2h-1zM484 448h1v1h-1zM129 448h1v1h-1zM477 448h1v1h-1zM122 448h1v1h-1zM478 449h1v1h-1zM128 449h1v1h-1zM210 449h1v1h-1zM403 449h1v1h-1zM466 449h1v1h-1zM121 449h1v1h-1zM467 450h1v1h-1zM479 450h2v1h-2zM127 450h1v1h-1zM132 450h1v1h-1zM119 450h2v1h-2zM251 449h1v3h-1zM336 450h1v2h-1zM118 451h1v1h-1zM481 451h1v1h-1zM131 451h1v1h-1zM125 451h2v1h-2zM468 451h1v1h-1zM404 451h1v1h-1zM208 451h1v1h-1zM117 452h1v1h-1zM135 452h1v1h-1zM124 452h1v1h-1zM469 452h1v1h-1zM464 452h1v1h-1zM130 452h1v1h-1zM123 453h1v1h-1zM129 453h1v1h-1zM470 453h1v1h-1zM207 453h1v1h-1zM465 453h1v1h-1zM406 453h1v1h-1zM134 453h1v1h-1zM250 452h1v3h-1zM133 454h1v1h-1zM122 454h1v1h-1zM471 454h2v1h-2zM127 454h2v1h-2zM466 454h1v1h-1zM337 452h1v4h-1zM467 455h1v1h-1zM473 455h1v1h-1zM206 455h1v1h-1zM126 455h1v1h-1zM121 455h1v1h-1zM132 455h1v1h-1zM461 455h1v1h-1zM407 455h1v1h-1zM462 456h1v1h-1zM474 456h1v1h-1zM131 456h1v1h-1zM468 456h1v1h-1zM125 456h1v1h-1zM120 456h1v1h-1zM249 455h1v3h-1zM408 457h1v1h-1zM463 457h1v1h-1zM124 457h1v1h-1zM458 457h1v1h-1zM205 457h1v1h-1zM475 457h1v1h-1zM130 457h1v1h-1zM469 457h2v1h-2zM123 458h1v1h-1zM129 458h1v1h-1zM141 458h1v1h-1zM471 458h1v1h-1zM464 458h1v1h-1zM459 458h1v1h-1zM476 458h1v1h-1zM338 456h1v4h-1zM248 458h1v2h-1zM128 459h1v1h-1zM204 459h1v1h-1zM140 459h1v1h-1zM465 459h1v1h-1zM460 459h1v1h-1zM472 459h1v1h-1zM139 460h1v1h-1zM473 460h1v1h-1zM127 460h1v1h-1zM466 460h2v1h-2zM461 460h1v1h-1zM462 461h1v1h-1zM126 461h1v1h-1zM202 461h1v1h-1zM143 461h1v1h-1zM468 461h1v1h-1zM138 461h1v1h-1zM339 460h1v3h-1zM463 462h1v1h-1zM469 462h1v1h-1zM142 462h1v1h-1zM137 462h1v1h-1zM452 463h1v1h-1zM141 463h1v1h-1zM136 463h1v1h-1zM470 463h1v1h-1zM464 463h1v1h-1zM201 463h1v1h-1zM140 464h1v1h-1zM135 464h1v1h-1zM453 464h1v1h-1zM465 464h1v1h-1zM146 464h1v1h-1zM471 464h1v1h-1zM139 465h1v1h-1zM145 465h1v1h-1zM200 465h1v1h-1zM134 465h1v1h-1zM454 465h1v1h-1zM466 465h1v1h-1zM133 466h1v1h-1zM144 466h1v1h-1zM467 466h1v1h-1zM455 466h1v1h-1zM450 466h1v1h-1zM149 466h1v1h-1zM138 466h1v2h-1zM451 467h1v1h-1zM148 467h1v1h-1zM143 467h1v1h-1zM456 467h1v1h-1zM468 467h1v1h-1zM132 467h1v1h-1zM457 468h1v1h-1zM452 468h1v1h-1zM147 468h1v1h-1zM131 468h1v1h-1zM447 468h1v1h-1zM142 468h1v1h-1zM137 468h1v1h-1zM458 469h1v1h-1zM453 469h1v1h-1zM448 469h1v1h-1zM136 469h1v1h-1zM146 469h1v1h-1zM141 469h1v2h-1zM145 470h1v1h-1zM135 470h1v1h-1zM459 470h1v1h-1zM454 470h1v1h-1zM449 470h1v1h-1zM155 471h1v1h-1zM140 471h1v1h-1zM444 471h1v1h-1zM134 471h1v1h-1zM460 471h1v1h-1zM450 471h1v1h-1zM144 471h1v2h-1zM455 471h1v2h-1zM139 472h1v1h-1zM451 472h1v1h-1zM461 472h1v1h-1zM154 472h1v1h-1zM445 472h1v1h-1zM143 473h1v1h-1zM456 473h1v1h-1zM138 473h1v1h-1zM446 473h1v2h-1zM452 473h1v2h-1zM153 473h1v2h-1zM457 474h1v1h-1zM158 474h1v1h-1zM142 474h1v1h-1zM458 475h1v1h-1zM453 475h1v1h-1zM152 475h1v1h-1zM157 475h1v1h-1zM141 475h1v1h-1zM447 475h1v1h-1zM161 476h1v1h-1zM151 476h1v1h-1zM140 476h1v1h-1zM448 476h1v1h-1zM454 476h1v1h-1zM438 476h1v1h-1zM156 476h1v2h-1zM150 477h1v1h-1zM449 477h1v1h-1zM455 477h1v1h-1zM439 477h1v1h-1zM160 477h1v2h-1zM155 478h1v1h-1zM456 478h1v1h-1zM149 478h1v1h-1zM434 478h1v1h-1zM440 478h1v2h-1zM450 478h1v2h-1zM435 479h1v1h-1zM164 479h1v1h-1zM159 479h1v1h-1zM154 479h1v1h-1zM148 479h1v2h-1zM451 480h1v1h-1zM441 480h1v1h-1zM431 480h1v1h-1zM158 480h1v1h-1zM153 480h1v1h-1zM436 480h1v2h-1zM163 480h1v2h-1zM452 481h1v1h-1zM147 481h1v1h-1zM442 481h1v1h-1zM157 481h1v2h-1zM152 481h1v2h-1zM432 481h1v2h-1zM162 482h1v1h-1zM437 482h1v1h-1zM443 482h1v1h-1zM161 483h1v1h-1zM156 483h1v1h-1zM151 483h1v1h-1zM438 483h1v1h-1zM433 483h1v1h-1zM428 483h1v1h-1zM444 483h1v2h-1zM155 484h1v1h-1zM150 484h1v1h-1zM434 484h1v1h-1zM439 484h1v1h-1zM429 484h1v2h-1zM170 484h1v2h-1zM160 484h1v2h-1zM440 485h1v1h-1zM445 485h1v1h-1zM435 485h1v2h-1zM154 485h1v2h-1zM446 486h1v1h-1zM174 486h1v1h-1zM169 486h1v1h-1zM430 486h1v1h-1zM159 486h1v1h-1zM441 486h1v2h-1zM436 487h1v1h-1zM168 487h1v1h-1zM431 487h1v1h-1zM158 487h1v1h-1zM153 487h1v1h-1zM422 487h1v1h-1zM173 487h1v2h-1zM177 488h1v1h-1zM437 488h1v1h-1zM442 488h1v1h-1zM167 488h1v2h-1zM157 488h1v2h-1zM432 488h1v2h-1zM423 488h1v2h-1zM418 489h1v1h-1zM172 489h1v1h-1zM438 489h1v2h-1zM176 489h1v2h-1zM171 490h1v1h-1zM166 490h1v1h-1zM181 490h1v1h-1zM433 490h1v1h-1zM419 490h1v2h-1zM424 490h1v2h-1zM415 491h1v1h-1zM439 491h1v1h-1zM175 491h1v1h-1zM165 491h1v1h-1zM434 491h1v1h-1zM180 491h1v2h-1zM170 491h1v2h-1zM425 492h1v1h-1zM435 492h1v2h-1zM420 492h1v2h-1zM174 492h1v2h-1zM164 492h1v2h-1zM416 492h1v2h-1zM169 493h1v1h-1zM179 493h1v1h-1zM412 493h1v1h-1zM426 493h1v2h-1zM178 494h1v1h-1zM168 494h1v1h-1zM421 494h1v1h-1zM163 494h1v1h-1zM187 494h1v1h-1zM413 494h1v2h-1zM173 494h1v2h-1zM417 494h1v2h-1zM177 495h1v2h-1zM167 495h1v2h-1zM427 495h1v2h-1zM186 495h1v2h-1zM422 495h1v2h-1zM418 496h1v1h-1zM172 496h1v1h-1zM191 496h1v1h-1zM414 496h1v2h-1zM405 497h1v1h-1zM176 497h1v1h-1zM171 497h1v2h-1zM419 497h1v2h-1zM190 497h1v2h-1zM185 497h1v2h-1zM428 497h1v2h-1zM423 497h1v2h-1zM194 498h1v1h-1zM175 498h1v1h-1zM415 498h1v2h-1zM406 498h1v2h-1zM184 499h1v1h-1zM170 499h1v1h-1zM401 499h1v1h-1zM424 499h1v2h-1zM189 499h1v2h-1zM420 499h1v2h-1zM174 499h1v2h-1zM193 499h1v2h-1zM402 500h1v2h-1zM183 500h1v2h-1zM197 500h1v2h-1zM416 500h1v2h-1zM407 500h1v2h-1zM188 501h1v1h-1zM398 501h1v1h-1zM173 501h1v1h-1zM425 501h1v1h-1zM421 501h1v2h-1zM192 501h1v2h-1zM182 502h1v2h-1zM408 502h1v2h-1zM403 502h1v2h-1zM399 502h1v2h-1zM196 502h1v2h-1zM417 502h1v2h-1zM187 502h1v2h-1zM394 503h1v1h-1zM205 503h1v1h-1zM422 503h1v1h-1zM191 503h1v2h-1zM418 504h1v2h-1zM204 504h1v2h-1zM400 504h1v2h-1zM195 504h1v2h-1zM186 504h1v2h-1zM181 504h1v2h-1zM409 504h1v2h-1zM404 504h1v2h-1zM395 504h1v2h-1zM208 505h1v1h-1zM190 505h1v2h-1zM194 506h1v2h-1zM387 506h1v2h-1zM185 506h1v2h-1zM207 506h1v2h-1zM410 506h1v2h-1zM401 506h1v2h-1zM405 506h1v2h-1zM203 506h1v2h-1zM396 506h1v2h-1zM212 507h1v1h-1zM189 507h1v2h-1zM216 508h1v1h-1zM383 508h1v1h-1zM402 508h1v2h-1zM211 508h1v2h-1zM202 508h1v2h-1zM406 508h1v2h-1zM411 508h1v2h-1zM193 508h1v2h-1zM397 508h1v2h-1zM388 508h1v2h-1zM206 508h1v3h-1zM380 509h1v2h-1zM215 509h1v2h-1zM188 509h1v2h-1zM384 509h1v2h-1zM398 510h1v2h-1zM403 510h1v2h-1zM223 510h1v2h-1zM201 510h1v2h-1zM389 510h1v2h-1zM376 510h1v2h-1zM192 510h1v2h-1zM407 510h1v2h-1zM210 510h1v3h-1zM381 511h1v2h-1zM214 511h1v2h-1zM404 512h1v1h-1zM385 511h1v3h-1zM205 511h1v3h-1zM227 512h1v2h-1zM222 512h1v2h-1zM200 512h1v2h-1zM377 512h1v2h-1zM399 512h1v2h-1zM390 512h1v3h-1zM382 513h1v2h-1zM213 513h1v2h-1zM230 513h1v2h-1zM369 513h1v2h-1zM400 514h1v1h-1zM209 513h1v3h-1zM204 514h1v2h-1zM199 514h1v2h-1zM226 514h1v2h-1zM365 514h1v2h-1zM234 514h1v2h-1zM221 514h1v3h-1zM386 514h1v3h-1zM378 514h1v3h-1zM361 515h1v2h-1zM212 515h1v2h-1zM391 515h1v2h-1zM370 515h1v3h-1zM383 515h1v3h-1zM229 515h1v3h-1zM242 516h1v2h-1zM357 516h1v2h-1zM208 516h1v2h-1zM203 516h1v2h-1zM233 516h1v3h-1zM366 516h1v3h-1zM225 516h1v3h-1zM387 517h1v2h-1zM211 517h1v2h-1zM392 517h1v2h-1zM220 517h1v3h-1zM362 517h1v3h-1zM245 517h1v3h-1zM379 517h1v3h-1zM207 518h1v2h-1zM384 518h1v2h-1zM249 518h1v3h-1zM350 518h1v3h-1zM358 518h1v3h-1zM241 518h1v3h-1zM210 519h1v2h-1zM388 519h1v2h-1zM228 518h1v4h-1zM371 518h1v4h-1zM346 519h1v3h-1zM253 519h1v3h-1zM224 519h1v3h-1zM385 520h1v2h-1zM380 520h1v2h-1zM219 520h1v2h-1zM232 519h1v4h-1zM367 519h1v4h-1zM342 520h1v3h-1zM261 521h1v2h-1zM363 520h1v4h-1zM244 520h1v4h-1zM338 521h1v3h-1zM223 522h1v2h-1zM381 522h1v2h-1zM218 522h1v2h-1zM351 521h1v4h-1zM240 521h1v4h-1zM359 521h1v4h-1zM248 521h1v4h-1zM265 522h1v3h-1zM227 522h1v3h-1zM372 522h1v3h-1zM222 524h1v1h-1zM269 522h1v4h-1zM326 522h1v4h-1zM330 522h1v4h-1zM347 522h1v4h-1zM252 522h1v4h-1zM368 523h1v3h-1zM273 523h1v3h-1zM231 523h1v3h-1zM226 525h1v1h-1zM373 525h1v1h-1zM260 523h1v4h-1zM343 523h1v4h-1zM364 524h1v3h-1zM369 526h1v1h-1zM243 524h1v4h-1zM360 525h1v3h-1zM239 525h1v3h-1zM230 526h1v2h-1zM323 523h1v6h-1zM247 525h1v4h-1zM352 525h1v4h-1zM365 527h1v2h-1zM280 523h1v7h-1zM284 523h1v7h-1zM319 523h1v7h-1zM288 524h1v6h-1zM348 526h1v4h-1zM251 526h1v4h-1zM238 528h1v2h-1zM361 528h1v2h-1zM339 524h1v7h-1zM344 527h1v4h-1zM242 528h1v3h-1zM264 525h1v7h-1zM268 526h1v6h-1zM331 526h1v6h-1zM259 527h1v5h-1zM353 529h1v3h-1zM246 529h1v3h-1zM327 526h1v7h-1zM272 526h1v7h-1zM349 530h1v3h-1zM250 530h1v3h-1zM345 531h1v2h-1zM340 531h1v3h-1zM258 532h1v2h-1zM263 532h1v3h-1zM267 532h1v4h-1zM332 532h1v4h-1zM328 533h1v3h-1zM311 523h1v14h-1zM324 529h1v8h-1zM320 530h1v7h-1zM279 530h1v7h-1zM283 530h1v7h-1zM271 533h1v4h-1zM307 524h1v14h-1zM299 524h1v14h-1zM292 524h1v14h-1zM303 524h1v14h-1zM287 530h1v8h-1z"/>
<path fill="rgb(0,255,0)" d="M461 79h1v1h-1zM447 79h1v1h-1zM460 80h1v1h-1zM448 80h1v1h-1zM449 81h11v1h-11zM451 82h1v11h-1zM457 82h1v11h-1zM449 93h11v1h-11zM460 94h1v1h-1zM448 94h1v1h-1zM461 95h1v1h-1zM447 95h1v1h-1zM750 126h3v1h-3zM751 127h2v1h-2zM752 128h1v1h-1zM750 128h1v1h-1zM745 129h1v1h-1zM749 129h1v1h-1zM748 130h1v1h-1zM746 130h1v1h-1zM747 131h1v1h-1zM748 132h1v1h-1zM746 132h1v1h-1zM745 133h1v1h-1zM749 133h1v1h-1zM744 134h1v1h-1zM294 155h1v1h-1zM295 157h1v1h-1zM297 159h1v1h-1zM143 159h1v1h-1zM135 159h1v1h-1zM142 160h2v1h-2zM134 160h2v1h-2zM133 161h1v1h-1zM298 161h1v1h-1zM141 161h1v1h-1zM299 163h1v1h-1zM301 165h1v1h-1zM135 161h1v6h-1zM143 161h1v6h-1zM745 166h2v1h-2zM750 166h2v1h-2zM302 167h1v1h-1zM141 167h5v1h-5zM133 167h5v1h-5zM752 167h1v2h-1zM747 167h1v2h-1zM749 167h1v2h-1zM744 167h1v2h-1zM745 169h1v1h-1zM303 169h1v1h-1zM751 169h1v1h-1zM304 171h1v1h-1zM306 173h1v1h-1zM748 169h1v6h-1zM307 175h1v1h-1zM308 177h1v1h-1zM310 179h1v1h-1zM435 179h1v1h-1zM443 179h1v1h-1zM436 180h1v1h-1zM442 180h1v1h-1zM311 181h1v1h-1zM437 181h5v1h-5zM436 182h1v1h-1zM442 182h1v1h-1zM312 183h1v1h-1zM314 185h1v1h-1zM435 183h1v5h-1zM443 183h1v5h-1zM315 187h1v1h-1zM436 188h1v1h-1zM442 188h1v1h-1zM316 189h1v1h-1zM437 189h5v1h-5zM317 191h1v1h-1zM439 190h1v3h-1zM319 193h1v1h-1zM435 193h9v1h-9zM439 194h1v2h-1zM320 195h1v1h-1zM321 197h1v1h-1zM323 199h1v1h-1zM324 201h1v1h-1zM325 203h1v1h-1zM327 205h1v1h-1zM416 206h1v1h-1zM747 206h3v1h-3zM750 207h1v1h-1zM746 207h1v1h-1zM328 207h1v1h-1zM329 209h1v1h-1zM745 208h1v3h-1zM751 208h1v3h-1zM330 211h1v1h-1zM750 211h1v2h-1zM746 211h1v2h-1zM744 212h1v1h-1zM745 213h1v1h-1zM332 213h1v1h-1zM751 213h1v1h-1zM752 214h1v1h-1zM183 215h1v1h-1zM333 215h1v1h-1zM186 215h1v1h-1zM189 216h1v1h-1zM192 216h1v1h-1zM334 217h1v1h-1zM195 217h1v1h-1zM198 217h1v1h-1zM201 218h1v1h-1zM204 218h1v1h-1zM207 219h1v1h-1zM210 219h1v1h-1zM336 219h1v1h-1zM219 220h1v1h-1zM216 220h1v1h-1zM213 220h1v1h-1zM337 221h1v1h-1zM222 221h1v1h-1zM225 221h1v1h-1zM231 222h1v1h-1zM228 222h1v1h-1zM234 223h1v1h-1zM338 223h1v1h-1zM237 223h1v1h-1zM240 224h1v1h-1zM243 224h1v1h-1zM252 225h1v1h-1zM340 225h1v1h-1zM246 225h1v1h-1zM249 225h1v1h-1zM255 226h1v1h-1zM258 226h1v1h-1zM261 227h1v1h-1zM341 227h1v1h-1zM264 227h1v1h-1zM270 228h1v1h-1zM267 228h1v1h-1zM342 229h1v1h-1zM273 229h1v1h-1zM276 229h1v1h-1zM279 229h1v1h-1zM285 230h1v1h-1zM282 230h1v1h-1zM288 231h1v1h-1zM343 231h1v1h-1zM291 231h1v1h-1zM294 232h1v1h-1zM297 232h1v1h-1zM303 233h1v1h-1zM300 233h1v1h-1zM345 233h1v1h-1zM306 234h1v1h-1zM309 234h1v1h-1zM312 234h1v1h-1zM318 235h1v1h-1zM346 235h1v1h-1zM315 235h1v1h-1zM321 236h1v1h-1zM324 236h1v1h-1zM327 237h1v1h-1zM330 237h1v1h-1zM347 237h1v1h-1zM333 238h1v1h-1zM336 238h1v1h-1zM342 239h1v1h-1zM349 239h1v1h-1zM339 239h1v1h-1zM345 239h1v1h-1zM348 240h1v1h-1zM351 240h1v1h-1zM354 241h1v1h-1zM357 241h1v1h-1zM350 241h1v1h-1zM360 242h1v1h-1zM363 242h1v1h-1zM351 243h1v1h-1zM366 243h1v1h-1zM369 243h1v1h-1zM372 244h1v1h-1zM378 244h1v1h-1zM375 244h1v1h-1zM500 244h5v1h-5zM353 245h1v1h-1zM381 245h1v1h-1zM384 245h1v1h-1zM504 245h1v2h-1zM387 246h1v1h-1zM390 246h1v1h-1zM396 247h1v1h-1zM503 247h1v1h-1zM354 247h1v1h-1zM393 247h1v1h-1zM402 248h1v1h-1zM405 248h1v1h-1zM502 248h1v1h-1zM399 248h1v1h-1zM411 249h1v1h-1zM408 249h1v1h-1zM501 249h1v1h-1zM355 249h1v1h-1zM417 250h1v1h-1zM414 250h1v1h-1zM356 251h1v1h-1zM420 251h1v1h-1zM423 251h1v1h-1zM500 250h1v3h-1zM426 252h1v1h-1zM429 252h1v1h-1zM432 253h1v1h-1zM358 253h1v1h-1zM359 255h1v1h-1zM750 256h1v1h-1zM746 256h1v1h-1zM360 257h1v1h-1zM431 257h1v1h-1zM747 257h3v1h-3zM362 259h1v1h-1zM750 258h1v3h-1zM746 258h1v3h-1zM427 261h1v1h-1zM747 261h3v1h-3zM363 261h1v1h-1zM748 262h1v1h-1zM364 263h1v1h-1zM746 263h5v1h-5zM748 264h1v1h-1zM423 265h1v1h-1zM366 265h1v1h-1zM747 266h3v1h-3zM367 267h1v1h-1zM750 267h1v3h-1zM746 267h1v3h-1zM419 269h1v1h-1zM368 269h1v1h-1zM36 269h5v1h-5zM41 270h1v1h-1zM747 270h3v1h-3zM35 270h1v1h-1zM748 271h1v1h-1zM369 271h1v1h-1zM746 272h5v1h-5zM34 271h1v3h-1zM42 271h1v3h-1zM415 273h1v1h-1zM371 273h1v1h-1zM748 273h1v2h-1zM41 274h1v1h-1zM35 274h1v1h-1zM30 275h7v1h-7zM372 275h1v1h-1zM40 275h7v1h-7zM373 277h1v1h-1zM412 277h1v1h-1zM375 279h1v1h-1zM30 279h17v1h-17zM408 281h1v1h-1zM376 281h1v1h-1zM377 283h1v1h-1zM379 285h1v1h-1zM404 285h1v1h-1zM380 287h1v1h-1zM381 289h1v1h-1zM400 289h1v1h-1zM382 291h1v1h-1zM384 293h1v1h-1zM396 293h1v1h-1zM385 295h1v1h-1zM386 297h1v1h-1zM392 297h1v1h-1zM388 299h1v1h-1zM157 300h1v1h-1zM388 301h2v1h-2zM159 301h1v1h-1zM160 302h2v1h-2zM163 303h1v1h-1zM390 303h1v1h-1zM165 304h1v1h-1zM166 305h1v1h-1zM392 305h1v1h-1zM384 305h1v1h-1zM745 306h1v1h-1zM167 306h1v1h-1zM751 306h1v1h-1zM169 306h1v2h-1zM393 307h1v1h-1zM750 307h1v2h-1zM746 307h1v2h-1zM171 308h2v1h-2zM748 308h1v1h-1zM380 309h1v1h-1zM173 309h1v1h-1zM394 309h1v1h-1zM746 309h5v1h-5zM175 309h1v2h-1zM750 310h1v1h-1zM746 310h1v1h-1zM748 310h1v2h-1zM745 311h1v1h-1zM177 311h2v1h-2zM395 311h1v1h-1zM751 311h1v1h-1zM179 312h1v1h-1zM747 312h3v1h-3zM181 312h1v2h-1zM747 313h1v1h-1zM749 313h1v1h-1zM397 313h1v1h-1zM376 313h1v1h-1zM183 314h2v1h-2zM748 314h1v1h-1zM185 315h1v1h-1zM398 315h1v1h-1zM187 315h1v2h-1zM399 317h1v1h-1zM372 317h1v1h-1zM190 317h1v1h-1zM189 318h1v1h-1zM191 319h1v1h-1zM401 319h1v1h-1zM193 319h1v2h-1zM196 320h1v1h-1zM402 321h1v1h-1zM368 321h1v1h-1zM195 321h1v1h-1zM197 322h1v1h-1zM199 322h1v2h-1zM403 323h1v1h-1zM202 323h1v1h-1zM201 324h1v1h-1zM405 325h1v1h-1zM365 325h1v1h-1zM203 325h1v1h-1zM205 325h1v2h-1zM208 326h1v1h-1zM207 327h1v1h-1zM406 327h1v1h-1zM209 328h1v1h-1zM211 328h1v1h-1zM407 329h1v1h-1zM214 329h1v1h-1zM361 329h1v1h-1zM211 330h1v1h-1zM217 331h1v1h-1zM408 331h1v1h-1zM213 331h1v1h-1zM215 332h1v1h-1zM217 333h1v1h-1zM220 333h1v1h-1zM357 333h1v1h-1zM410 333h1v1h-1zM223 334h1v1h-1zM219 334h1v1h-1zM411 335h1v1h-1zM221 335h1v1h-1zM223 336h1v1h-1zM226 336h1v1h-1zM353 337h1v1h-1zM229 337h1v1h-1zM412 337h1v1h-1zM225 337h1v1h-1zM227 338h1v1h-1zM229 339h1v1h-1zM232 339h1v1h-1zM414 339h1v1h-1zM235 340h1v1h-1zM231 340h1v1h-1zM349 341h1v1h-1zM415 341h1v1h-1zM238 342h1v1h-1zM233 342h1v1h-1zM416 343h1v1h-1zM235 343h1v1h-1zM241 343h1v1h-1zM237 344h1v1h-1zM345 345h1v1h-1zM418 345h1v1h-1zM244 345h1v1h-1zM239 345h1v1h-1zM247 346h1v1h-1zM241 346h1v1h-1zM441 347h1v1h-1zM419 347h1v1h-1zM243 347h1v1h-1zM245 348h1v1h-1zM250 348h1v1h-1zM247 349h1v1h-1zM341 349h1v1h-1zM420 349h1v1h-1zM253 350h1v1h-1zM249 350h1v1h-1zM256 351h1v1h-1zM251 351h1v1h-1zM421 351h1v1h-1zM253 352h1v1h-1zM337 353h1v1h-1zM259 353h1v1h-1zM466 353h5v1h-5zM423 353h1v1h-1zM255 354h1v1h-1zM465 354h1v1h-1zM262 354h1v1h-1zM471 354h1v1h-1zM424 355h1v1h-1zM257 355h1v1h-1zM259 356h1v1h-1zM265 356h1v1h-1zM425 357h1v1h-1zM261 357h1v1h-1zM268 357h1v1h-1zM333 357h1v1h-1zM263 358h1v1h-1zM464 355h1v5h-1zM472 355h1v5h-1zM265 359h1v1h-1zM271 359h1v1h-1zM427 359h1v1h-1zM465 360h1v1h-1zM267 360h1v1h-1zM471 360h1v1h-1zM274 360h1v1h-1zM269 361h1v1h-1zM329 361h1v1h-1zM466 361h5v1h-5zM271 362h1v1h-1zM277 362h1v1h-1zM280 363h1v1h-1zM273 363h1v1h-1zM468 362h1v3h-1zM275 364h1v1h-1zM434 364h1v1h-1zM283 365h1v1h-1zM464 365h9v1h-9zM325 365h1v1h-1zM277 365h1v1h-1zM286 367h1v1h-1zM279 367h1v1h-1zM289 368h1v1h-1zM281 368h1v1h-1zM468 366h1v4h-1zM283 369h1v1h-1zM322 369h1v1h-1zM454 370h1v1h-1zM292 370h1v1h-1zM466 370h1v1h-1zM285 370h1v1h-1zM465 371h1v1h-1zM455 371h1v1h-1zM287 371h1v1h-1zM295 371h1v1h-1zM289 372h1v1h-1zM291 373h1v1h-1zM318 373h1v1h-1zM298 373h1v1h-1zM293 374h1v1h-1zM301 374h1v1h-1zM464 372h1v4h-1zM456 372h1v4h-1zM460 374h1v2h-1zM295 375h1v1h-1zM456 376h9v1h-9zM297 376h1v1h-1zM304 376h1v1h-1zM307 377h1v1h-1zM314 377h1v1h-1zM299 377h1v1h-1zM456 377h1v2h-1zM464 377h1v2h-1zM310 379h1v1h-1zM465 379h1v1h-1zM455 379h1v1h-1zM301 379h1v1h-1zM313 380h1v1h-1zM303 380h1v1h-1zM454 380h1v1h-1zM466 380h1v1h-1zM460 377h1v5h-1zM310 381h1v1h-1zM305 381h1v1h-1zM307 382h1v1h-1zM316 382h1v1h-1zM459 382h3v1h-3zM309 383h1v1h-1zM319 384h1v1h-1zM311 384h1v1h-1zM462 383h1v3h-1zM458 383h1v3h-1zM313 385h1v1h-1zM306 385h1v1h-1zM322 385h1v1h-1zM459 386h3v1h-3zM315 386h1v1h-1zM325 387h1v1h-1zM317 387h1v1h-1zM319 388h1v1h-1zM328 388h1v1h-1zM302 389h1v1h-1zM321 389h1v1h-1zM331 390h1v1h-1zM334 391h1v1h-1zM323 391h1v1h-1zM325 392h1v1h-1zM337 393h1v1h-1zM327 393h1v1h-1zM298 393h1v1h-1zM329 394h1v1h-1zM340 394h1v1h-1zM331 395h1v1h-1zM343 396h1v1h-1zM333 396h1v1h-1zM294 397h1v1h-1zM335 397h1v1h-1zM346 397h1v1h-1zM337 398h1v1h-1zM349 399h1v1h-1zM339 399h1v1h-1zM341 400h1v1h-1zM343 401h1v1h-1zM290 401h1v1h-1zM352 401h1v1h-1zM355 402h1v1h-1zM345 403h1v1h-1zM358 404h1v1h-1zM347 404h1v1h-1zM286 405h1v1h-1zM349 405h1v1h-1zM361 405h1v1h-1zM351 406h1v1h-1zM353 407h1v1h-1zM364 407h1v1h-1zM367 408h1v1h-1zM355 408h1v1h-1zM357 409h1v1h-1zM282 409h1v1h-1zM359 410h1v1h-1zM370 410h1v1h-1zM373 411h1v1h-1zM361 411h1v1h-1zM363 412h1v1h-1zM278 413h1v1h-1zM365 413h1v1h-1zM376 413h1v1h-1zM379 414h1v1h-1zM367 415h1v1h-1zM369 416h1v1h-1zM275 417h1v1h-1zM371 417h1v1h-1zM373 418h1v1h-1zM375 419h1v1h-1zM271 421h1v1h-1zM267 425h1v1h-1zM263 429h1v1h-1zM259 433h1v1h-1zM247 498h3v1h-3zM246 499h1v1h-1zM250 499h1v3h-1zM248 502h2v1h-2zM250 503h1v3h-1zM246 505h1v1h-1zM247 506h3v1h-3zM402 530h1v1h-1zM408 530h1v1h-1zM414 530h1v1h-1zM407 531h2v1h-2zM401 531h2v1h-2zM413 531h1v2h-1zM401 532h1v1h-1zM407 532h1v1h-1zM406 533h1v1h-1zM400 533h1v1h-1zM412 533h1v1h-1zM403 532h1v3h-1zM409 532h1v3h-1zM411 534h1v1h-1zM405 534h1v1h-1zM399 534h1v2h-1zM404 535h2v1h-2zM410 535h2v1h-2zM410 536h1v1h-1zM398 536h1v1h-1zM404 536h1v1h-1zM402 540h1v1h-1zM408 540h1v1h-1zM414 540h1v1h-1zM407 541h2v1h-2zM401 541h2v1h-2zM413 541h1v2h-1zM401 542h1v1h-1zM407 542h1v1h-1zM406 543h1v1h-1zM400 543h1v1h-1zM412 543h1v1h-1zM403 542h1v3h-1zM409 542h1v3h-1zM411 544h1v1h-1zM405 544h1v1h-1zM399 544h1v2h-1zM404 545h2v1h-2zM410 545h2v1h-2zM410 546h1v1h-1zM398 546h1v1h-1zM404 546h1v1h-1z"/>
<path fill="rgb(255,0,0)" d="M190 52h5v1h-5zM189 53h1v1h-1zM195 53h1v1h-1zM196 54h1v1h-1zM188 54h1v1h-1zM197 55h1v1h-1zM187 55h1v1h-1zM186 56h1v5h-1zM198 56h1v5h-1zM197 61h1v1h-1zM187 61h1v1h-1zM196 62h1v3h-1zM188 62h1v3h-1zM184 64h1v1h-1zM185 65h1v1h-1zM197 65h1v1h-1zM187 65h1v1h-1zM186 66h1v1h-1zM198 66h1v1h-1zM199 67h1v1h-1zM200 68h1v1h-1zM349 92h3v1h-3zM348 93h1v3h-1zM352 93h1v3h-1zM349 96h4v1h-4zM352 97h1v3h-1zM348 99h1v1h-1zM349 100h3v1h-3zM747 108h3v1h-3zM750 109h1v2h-1zM746 109h1v2h-1zM749 111h4v1h-4zM744 111h4v1h-4zM744 113h9v1h-9zM752 146h1v1h-1zM749 146h1v1h-1zM746 146h1v1h-1zM745 147h2v1h-2zM751 147h1v1h-1zM748 147h2v1h-2zM745 148h1v1h-1zM750 148h2v1h-2zM747 148h2v1h-2zM747 149h1v1h-1zM750 149h1v1h-1zM744 149h1v1h-1zM752 151h1v1h-1zM749 151h1v1h-1zM746 151h1v1h-1zM745 152h2v1h-2zM751 152h1v1h-1zM748 152h2v1h-2zM745 153h1v1h-1zM750 153h2v1h-2zM747 153h2v1h-2zM747 154h1v1h-1zM750 154h1v1h-1zM744 154h1v1h-1zM292 157h1v1h-1zM308 159h1v1h-1zM290 159h1v1h-1zM288 161h1v1h-1zM305 161h1v1h-1zM286 163h1v1h-1zM302 164h1v1h-1zM284 165h1v1h-1zM299 167h1v1h-1zM282 167h1v1h-1zM280 169h1v1h-1zM296 170h1v1h-1zM293 172h1v1h-1zM277 173h1v1h-1zM275 175h1v1h-1zM290 175h1v1h-1zM273 177h1v1h-1zM287 178h1v1h-1zM271 179h1v1h-1zM269 181h1v1h-1zM284 181h1v1h-1zM267 183h1v1h-1zM281 183h1v1h-1zM265 185h1v1h-1zM752 186h1v1h-1zM745 186h1v1h-1zM278 186h1v1h-1zM746 187h6v1h-6zM263 187h1v1h-1zM261 189h1v1h-1zM275 189h1v1h-1zM259 191h1v1h-1zM747 188h1v5h-1zM750 188h1v5h-1zM272 192h1v1h-1zM257 193h1v1h-1zM746 193h6v1h-6zM269 194h1v1h-1zM745 194h1v1h-1zM752 194h1v1h-1zM255 195h1v1h-1zM253 197h1v1h-1zM266 197h1v1h-1zM252 199h1v1h-1zM263 200h1v1h-1zM250 201h1v1h-1zM248 203h1v1h-1zM260 203h1v1h-1zM257 205h1v1h-1zM246 205h1v1h-1zM244 207h1v1h-1zM254 208h1v1h-1zM242 209h1v1h-1zM240 211h1v1h-1zM251 211h1v1h-1zM411 213h1v1h-1zM238 213h1v1h-1zM248 214h1v1h-1zM410 214h1v1h-1zM236 215h1v1h-1zM245 216h1v1h-1zM410 216h1v1h-1zM234 217h1v1h-1zM242 219h1v1h-1zM232 219h1v1h-1zM410 218h1v3h-1zM230 221h1v1h-1zM409 222h1v1h-1zM239 222h1v1h-1zM228 223h1v1h-1zM226 225h1v1h-1zM236 225h1v1h-1zM409 224h1v3h-1zM224 227h1v1h-1zM233 227h1v1h-1zM408 228h1v1h-1zM223 229h1v1h-1zM230 230h1v1h-1zM408 230h1v2h-1zM221 231h1v1h-1zM227 233h1v1h-1zM219 233h1v1h-1zM467 233h5v1h-5zM407 234h2v1h-2zM465 234h2v1h-2zM472 234h2v1h-2zM217 235h1v1h-1zM474 235h1v1h-1zM464 235h1v1h-1zM463 236h1v1h-1zM747 236h3v1h-3zM475 236h1v1h-1zM224 236h1v1h-1zM215 237h1v1h-1zM750 237h2v1h-2zM745 237h2v1h-2zM407 236h1v3h-1zM462 237h1v2h-1zM476 237h1v2h-1zM221 238h1v1h-1zM745 238h1v1h-1zM751 238h1v1h-1zM213 239h1v1h-1zM406 240h2v1h-2zM748 240h1v1h-1zM752 239h1v3h-1zM744 239h1v3h-1zM469 241h1v1h-1zM211 241h1v1h-1zM218 241h1v1h-1zM745 242h1v1h-1zM751 242h1v1h-1zM477 239h1v5h-1zM461 239h1v5h-1zM209 243h1v1h-1zM750 243h2v1h-2zM745 243h2v1h-2zM406 242h1v3h-1zM215 244h1v1h-1zM747 244h3v1h-3zM462 244h1v2h-1zM476 244h1v2h-1zM207 245h1v1h-1zM475 246h1v1h-1zM405 246h2v1h-2zM463 246h1v1h-1zM212 247h1v1h-1zM474 247h1v1h-1zM205 247h1v1h-1zM464 247h1v1h-1zM472 248h2v1h-2zM465 248h2v1h-2zM406 248h1v1h-1zM209 249h1v1h-1zM467 249h5v1h-5zM203 249h1v1h-1zM405 249h1v2h-1zM201 251h1v1h-1zM441 251h1v1h-1zM404 252h2v1h-2zM206 252h1v1h-1zM199 253h1v1h-1zM405 254h1v1h-1zM197 255h1v1h-1zM203 255h1v1h-1zM404 255h1v1h-1zM405 256h1v1h-1zM196 257h1v1h-1zM403 258h2v1h-2zM200 258h1v1h-1zM194 259h1v1h-1zM197 260h1v1h-1zM404 260h1v1h-1zM403 261h1v1h-1zM192 261h1v1h-1zM404 262h1v1h-1zM194 263h1v1h-1zM190 263h1v1h-1zM402 264h2v1h-2zM188 265h1v1h-1zM403 266h1v1h-1zM191 266h1v1h-1zM402 267h1v1h-1zM186 267h1v1h-1zM403 268h1v1h-1zM188 269h1v1h-1zM184 269h1v1h-1zM403 270h1v1h-1zM401 270h1v1h-1zM182 271h1v1h-1zM185 271h1v1h-1zM402 272h1v1h-1zM180 273h1v1h-1zM401 273h1v1h-1zM182 274h1v1h-1zM402 274h1v1h-1zM178 275h1v1h-1zM402 276h1v1h-1zM400 276h1v1h-1zM750 276h3v1h-3zM179 277h1v1h-1zM751 277h2v1h-2zM176 277h1v1h-1zM752 278h1v1h-1zM750 278h1v1h-1zM401 278h1v1h-1zM174 279h1v1h-1zM400 279h1v1h-1zM749 279h1v1h-1zM746 279h2v1h-2zM745 280h1v1h-1zM748 280h1v1h-1zM401 280h1v1h-1zM176 280h1v1h-1zM172 281h1v1h-1zM749 281h1v2h-1zM744 281h1v2h-1zM173 282h1v1h-1zM399 282h1v1h-1zM401 282h1v1h-1zM748 283h1v1h-1zM745 283h1v1h-1zM170 283h1v1h-1zM401 284h1v1h-1zM746 284h2v1h-2zM169 285h2v1h-2zM399 285h1v1h-1zM400 286h1v1h-1zM751 286h1v1h-1zM745 287h2v1h-2zM167 287h1v2h-1zM398 288h1v1h-1zM400 288h1v1h-1zM747 288h1v2h-1zM165 289h1v1h-1zM400 290h1v1h-1zM746 290h1v2h-1zM398 291h1v1h-1zM163 291h2v1h-2zM113 291h1v1h-1zM750 287h1v6h-1zM112 292h1v1h-1zM399 292h1v1h-1zM114 292h1v1h-1zM745 292h1v1h-1zM161 293h1v1h-1zM745 293h8v1h-8zM399 294h1v1h-1zM397 294h1v1h-1zM750 294h1v1h-1zM159 295h1v1h-1zM399 296h1v1h-1zM158 296h1v1h-1zM157 297h1v1h-1zM125 297h2v1h-2zM397 297h1v1h-1zM119 297h2v1h-2zM115 293h1v6h-1zM111 293h1v6h-1zM399 298h1v1h-1zM121 298h1v1h-1zM127 298h1v1h-1zM155 299h1v1h-1zM111 299h5v1h-5zM149 299h1v1h-1zM398 300h1v1h-1zM396 300h1v1h-1zM118 298h1v4h-1zM398 302h1v1h-1zM119 302h2v1h-2zM396 303h1v1h-1zM398 304h1v1h-1zM124 298h1v9h-1zM121 303h1v4h-1zM118 306h1v1h-1zM397 306h1v1h-1zM395 306h1v1h-1zM127 306h1v1h-1zM111 300h1v8h-1zM115 300h1v8h-1zM119 307h2v1h-2zM125 307h2v1h-2zM397 308h1v1h-1zM395 309h1v1h-1zM397 310h1v1h-1zM394 312h1v1h-1zM397 312h1v1h-1zM396 314h1v1h-1zM394 315h1v1h-1zM396 316h1v1h-1zM564 317h3v1h-3zM554 317h3v1h-3zM567 318h1v1h-1zM394 318h1v1h-1zM557 318h1v1h-1zM553 318h1v1h-1zM563 318h1v1h-1zM396 318h1v1h-1zM396 320h1v1h-1zM552 319h1v3h-1zM568 319h1v3h-1zM558 319h1v3h-1zM562 319h1v3h-1zM393 321h1v1h-1zM567 322h1v1h-1zM553 322h1v1h-1zM395 322h1v1h-1zM554 323h1v1h-1zM566 323h1v1h-1zM561 322h1v3h-1zM559 322h1v3h-1zM395 324h1v1h-1zM393 324h1v1h-1zM559 325h3v1h-3zM395 326h1v1h-1zM392 327h1v1h-1zM394 328h1v1h-1zM394 330h1v1h-1zM392 330h1v1h-1zM394 332h1v1h-1zM560 326h1v8h-1zM391 333h1v1h-1zM394 334h1v1h-1zM476 335h6v1h-6zM391 336h1v1h-1zM480 336h2v1h-2zM438 336h1v1h-1zM393 336h1v1h-1zM479 337h1v1h-1zM436 337h1v1h-1zM478 338h1v1h-1zM443 338h1v1h-1zM393 338h1v1h-1zM432 339h1v1h-1zM477 339h1v1h-1zM390 339h1v1h-1zM481 337h1v4h-1zM476 340h1v1h-1zM430 340h1v1h-1zM393 340h1v1h-1zM475 341h1v1h-1zM468 341h5v1h-5zM428 341h1v1h-1zM467 342h1v1h-1zM473 342h2v1h-2zM392 342h1v1h-1zM390 342h1v1h-1zM426 343h1v1h-1zM474 343h1v1h-1zM466 343h1v1h-1zM424 344h1v1h-1zM392 344h1v1h-1zM389 345h1v1h-1zM422 345h1v1h-1zM392 346h1v1h-1zM96 346h1v1h-1zM420 346h1v1h-1zM433 346h2v1h-2zM418 347h1v1h-1zM95 347h2v1h-2zM431 347h2v1h-2zM475 344h1v5h-1zM465 344h1v5h-1zM392 348h1v1h-1zM429 348h2v1h-2zM416 348h1v1h-1zM389 348h1v1h-1zM94 348h1v1h-1zM427 349h2v1h-2zM474 349h1v1h-1zM414 349h1v1h-1zM466 349h1v1h-1zM391 350h1v1h-1zM467 350h1v1h-1zM473 350h1v1h-1zM425 350h2v1h-2zM412 350h1v1h-1zM410 351h1v1h-1zM468 351h5v1h-5zM423 351h2v1h-2zM388 351h1v1h-1zM391 352h1v1h-1zM408 352h1v1h-1zM421 352h2v1h-2zM96 348h1v6h-1zM419 353h2v1h-2zM391 354h1v1h-1zM406 354h1v1h-1zM417 354h2v1h-2zM388 354h1v1h-1zM94 354h5v1h-5zM415 355h2v1h-2zM404 355h1v1h-1zM402 356h1v1h-1zM413 356h2v1h-2zM390 356h1v1h-1zM411 357h2v1h-2zM400 357h1v1h-1zM387 357h1v1h-1zM398 358h1v1h-1zM390 358h1v1h-1zM409 358h2v1h-2zM407 359h2v1h-2zM396 359h1v1h-1zM394 360h1v1h-1zM405 360h2v1h-2zM387 360h1v1h-1zM390 360h1v1h-1zM392 361h1v1h-1zM403 361h2v1h-2zM390 362h1v1h-1zM401 362h2v1h-2zM388 363h1v1h-1zM386 363h1v1h-1zM399 363h2v1h-2zM389 364h1v1h-1zM397 364h2v1h-2zM395 365h2v1h-2zM386 365h1v2h-1zM393 366h2v1h-2zM389 366h1v1h-1zM384 366h1v1h-1zM391 367h2v1h-2zM382 367h1v1h-1zM380 368h1v1h-1zM389 368h2v1h-2zM378 369h1v1h-1zM387 369h2v1h-2zM385 369h1v1h-1zM388 370h1v1h-1zM376 370h1v1h-1zM385 370h2v1h-2zM383 371h2v1h-2zM374 371h1v1h-1zM388 372h1v1h-1zM372 372h1v1h-1zM381 372h2v1h-2zM385 372h1v1h-1zM370 373h1v1h-1zM379 373h2v1h-2zM388 374h1v1h-1zM368 374h1v1h-1zM377 374h2v1h-2zM384 375h1v1h-1zM376 375h1v1h-1zM388 376h1v1h-1zM366 376h1v1h-1zM374 376h2v1h-2zM364 377h1v1h-1zM372 377h2v1h-2zM384 378h1v1h-1zM362 378h1v1h-1zM370 378h2v1h-2zM387 378h1v1h-1zM360 379h1v1h-1zM368 379h2v1h-2zM366 380h2v1h-2zM387 380h1v1h-1zM358 380h1v1h-1zM356 381h1v1h-1zM364 381h2v1h-2zM383 381h1v1h-1zM354 382h1v1h-1zM362 382h2v1h-2zM387 382h1v1h-1zM352 383h1v1h-1zM360 383h2v1h-2zM358 384h2v1h-2zM383 384h1v1h-1zM387 384h1v1h-1zM350 384h1v1h-1zM348 385h1v1h-1zM356 385h2v1h-2zM386 386h1v1h-1zM354 386h2v1h-2zM346 387h1v1h-1zM382 387h1v1h-1zM352 387h2v1h-2zM350 388h2v1h-2zM344 388h1v1h-1zM386 388h1v1h-1zM342 389h1v1h-1zM348 389h2v1h-2zM340 390h1v1h-1zM346 390h2v1h-2zM386 390h1v1h-1zM382 390h1v1h-1zM338 391h1v1h-1zM344 391h2v1h-2zM342 392h2v1h-2zM385 392h1v1h-1zM336 392h1v1h-1zM334 393h1v1h-1zM381 393h1v1h-1zM340 393h2v1h-2zM332 394h1v1h-1zM385 394h1v1h-1zM338 394h2v1h-2zM330 395h1v1h-1zM336 395h2v1h-2zM385 396h1v1h-1zM334 396h2v1h-2zM381 396h1v1h-1zM328 396h1v1h-1zM332 397h2v1h-2zM326 398h1v1h-1zM385 398h1v1h-1zM330 398h2v1h-2zM380 399h1v1h-1zM324 399h1v1h-1zM328 399h2v1h-2zM326 400h2v1h-2zM384 400h1v1h-1zM322 400h1v1h-1zM324 401h2v1h-2zM320 401h1v1h-1zM380 402h1v1h-1zM318 402h1v1h-1zM384 402h1v1h-1zM322 402h2v1h-2zM320 403h2v1h-2zM316 403h1v1h-1zM384 404h1v1h-1zM318 404h2v1h-2zM314 404h1v1h-1zM316 405h2v1h-2zM379 405h1v1h-1zM312 405h1v1h-1zM310 406h1v1h-1zM383 406h1v1h-1zM315 406h1v1h-1zM308 407h1v1h-1zM313 407h2v1h-2zM383 408h1v1h-1zM311 408h2v1h-2zM379 408h1v1h-1zM309 409h2v1h-2zM306 409h1v1h-1zM383 410h1v1h-1zM307 410h2v1h-2zM304 410h1v1h-1zM302 411h1v1h-1zM378 411h1v1h-1zM305 411h2v1h-2zM383 412h1v1h-1zM300 412h1v1h-1zM303 412h2v1h-2zM301 413h2v1h-2zM298 413h1v1h-1zM296 414h1v1h-1zM299 414h2v1h-2zM378 414h1v1h-1zM382 414h1v1h-1zM294 415h1v1h-1zM297 415h2v1h-2zM292 416h1v1h-1zM382 416h1v1h-1zM295 416h2v1h-2zM293 417h2v1h-2zM290 417h1v1h-1zM377 417h1v1h-1zM288 418h1v1h-1zM291 418h2v1h-2zM289 419h2v1h-2zM286 420h3v1h-3zM377 420h1v1h-1zM284 421h3v1h-3zM282 422h3v1h-3zM280 423h3v1h-3zM278 424h3v1h-3zM276 425h3v1h-3zM380 425h1v1h-1zM274 426h3v1h-3zM272 427h3v1h-3zM270 428h3v1h-3zM268 429h3v1h-3zM267 430h2v1h-2zM457 431h5v1h-5zM265 431h2v1h-2zM263 432h2v1h-2zM261 433h2v1h-2zM457 432h1v3h-1zM259 434h2v1h-2zM457 435h4v1h-4zM257 435h2v1h-2zM256 436h1v1h-1zM461 436h1v3h-1zM457 438h1v1h-1zM458 439h3v1h-3zM396 446h1v1h-1zM395 447h1v1h-1zM385 448h2v1h-2zM387 449h1v1h-1zM388 450h1v3h-1zM387 453h1v2h-1zM386 455h1v2h-1zM385 457h1v2h-1zM394 448h1v12h-1zM384 459h1v1h-1zM384 460h15v1h-15zM394 461h1v2h-1zM149 503h5v1h-5zM152 504h2v1h-2zM151 505h1v1h-1zM150 506h1v1h-1zM153 505h1v3h-1zM149 507h1v1h-1zM148 508h1v1h-1zM147 509h1v1h-1zM139 509h1v1h-1zM140 510h1v1h-1zM146 510h1v1h-1zM145 511h1v1h-1zM141 511h1v1h-1zM144 512h1v1h-1zM142 512h1v1h-1zM143 513h1v1h-1zM144 514h1v1h-1zM142 514h1v1h-1zM145 515h1v1h-1zM141 515h1v1h-1zM140 516h1v1h-1zM146 516h1v1h-1zM147 517h1v1h-1zM139 517h1v1h-1zM138 518h1v1h-1zM137 519h1v1h-1z"/>
<path fill="rgb(0,255,255)" d="M310 156h2v1h-2zM308 157h2v1h-2zM312 157h1v1h-1zM306 158h2v1h-2zM304 159h2v1h-2zM315 159h1v1h-1zM302 160h2v1h-2zM318 161h1v1h-1zM300 161h2v1h-2zM297 162h3v1h-3zM295 163h2v1h-2zM293 164h2v1h-2zM321 164h1v1h-1zM291 165h2v1h-2zM324 166h1v1h-1zM289 166h2v1h-2zM287 167h2v1h-2zM284 168h3v1h-3zM282 169h2v1h-2zM327 169h1v1h-1zM280 170h2v1h-2zM278 171h2v1h-2zM330 171h1v1h-1zM276 172h2v1h-2zM274 173h2v1h-2zM333 173h1v1h-1zM271 174h3v1h-3zM269 175h2v1h-2zM267 176h2v1h-2zM336 176h1v1h-1zM265 177h2v1h-2zM263 178h2v1h-2zM339 178h1v1h-1zM261 179h2v1h-2zM342 180h1v1h-1zM258 180h3v1h-3zM256 181h2v1h-2zM254 182h2v1h-2zM345 183h1v1h-1zM252 183h2v1h-2zM250 184h2v1h-2zM348 185h1v1h-1zM247 185h3v1h-3zM245 186h2v1h-2zM351 187h1v1h-1zM243 187h2v1h-2zM241 188h2v1h-2zM239 189h2v1h-2zM354 190h1v1h-1zM237 190h2v1h-2zM234 191h3v1h-3zM357 192h1v1h-1zM232 192h2v1h-2zM230 193h2v1h-2zM228 194h2v1h-2zM360 194h1v1h-1zM226 195h2v1h-2zM224 196h2v1h-2zM363 197h1v1h-1zM221 197h3v1h-3zM219 198h2v1h-2zM217 199h2v1h-2zM366 199h1v1h-1zM215 200h2v1h-2zM213 201h2v1h-2zM369 201h1v1h-1zM211 202h2v1h-2zM208 203h3v1h-3zM206 204h2v1h-2zM372 204h1v1h-1zM204 205h2v1h-2zM375 206h1v1h-1zM202 206h2v1h-2zM200 207h2v1h-2zM198 208h2v1h-2zM378 208h1v1h-1zM195 209h3v1h-3zM193 210h2v1h-2zM411 210h1v1h-1zM381 211h1v1h-1zM191 211h2v1h-2zM411 212h1v1h-1zM189 212h2v1h-2zM187 213h2v1h-2zM384 213h1v1h-1zM185 214h2v1h-2zM412 214h1v1h-1zM387 215h1v1h-1zM184 215h1v1h-1zM412 216h1v1h-1zM390 218h1v1h-1zM412 218h1v2h-1zM413 220h1v1h-1zM393 220h1v1h-1zM412 222h2v1h-2zM396 222h1v1h-1zM413 224h1v2h-1zM399 225h1v1h-1zM414 226h1v1h-1zM402 227h1v1h-1zM413 228h2v1h-2zM405 230h1v1h-1zM415 230h1v1h-1zM413 231h1v1h-1zM408 232h1v1h-1zM415 232h1v1h-1zM411 234h1v1h-1zM414 234h2v1h-2zM416 236h1v1h-1zM414 237h1v1h-1zM416 238h1v1h-1zM417 239h1v1h-1zM416 240h1v1h-1zM414 240h1v1h-1zM420 241h1v1h-1zM417 242h1v1h-1zM415 243h1v1h-1zM417 244h1v1h-1zM423 244h1v1h-1zM426 246h1v1h-1zM417 246h1v1h-1zM415 246h1v1h-1zM418 248h1v1h-1zM429 248h1v1h-1zM415 249h1v1h-1zM418 250h1v1h-1zM432 251h1v1h-1zM418 252h1v1h-1zM416 252h1v1h-1zM435 253h1v1h-1zM419 254h1v1h-1zM416 255h1v1h-1zM419 256h1v1h-1zM416 258h1v1h-1zM420 258h1v1h-1zM420 260h1v1h-1zM417 261h1v1h-1zM420 262h1v1h-1zM421 264h1v1h-1zM417 264h1v1h-1zM421 266h1v1h-1zM417 267h1v1h-1zM421 268h1v1h-1zM418 270h1v1h-1zM422 270h1v1h-1zM422 272h1v1h-1zM418 273h1v1h-1zM422 274h1v1h-1zM418 276h1v1h-1zM423 276h1v1h-1zM423 278h1v1h-1zM419 279h1v1h-1zM423 280h1v1h-1zM424 282h1v1h-1zM419 282h1v1h-1zM424 284h1v1h-1zM419 285h1v1h-1zM425 286h1v1h-1zM425 288h1v1h-1zM420 288h1v1h-1zM425 290h1v1h-1zM420 291h1v1h-1zM426 292h1v1h-1zM426 294h1v1h-1zM420 294h1v1h-1zM426 296h1v1h-1zM421 297h1v1h-1zM427 298h1v1h-1zM421 300h1v1h-1zM427 300h1v1h-1zM427 302h1v1h-1zM421 303h1v1h-1zM428 304h1v1h-1zM422 306h1v1h-1zM428 306h1v1h-1zM428 308h1v1h-1zM422 309h1v1h-1zM429 310h1v1h-1zM429 312h1v1h-1zM422 312h1v1h-1zM429 314h1v1h-1zM423 315h1v1h-1zM430 316h1v1h-1zM430 318h1v1h-1zM423 318h1v1h-1zM431 320h1v1h-1zM423 321h1v1h-1zM431 322h1v1h-1zM424 324h1v1h-1zM431 324h1v1h-1zM432 326h1v1h-1zM424 327h1v1h-1zM432 328h1v1h-1zM432 330h1v1h-1zM425 330h1v1h-1zM433 332h1v1h-1zM425 333h1v1h-1zM433 334h1v1h-1zM425 336h1v1h-1zM433 336h1v1h-1zM434 338h1v1h-1zM426 339h1v1h-1zM434 340h1v1h-1zM426 342h1v1h-1zM434 342h1v1h-1zM435 344h1v1h-1zM426 345h1v1h-1zM427 348h1v1h-1zM427 351h1v1h-1zM427 354h1v1h-1zM428 357h1v1h-1zM428 360h1v1h-1z"/>
<path fill="rgb(255,255,0)" d="M236 96h3v1h-3zM229 96h1v1h-1zM228 97h2v1h-2zM227 98h1v1h-1zM235 97h1v7h-1zM239 97h1v7h-1zM229 98h1v6h-1zM227 104h5v1h-5zM236 104h3v1h-3zM297 111h4v1h-4zM293 111h1v1h-1zM285 111h1v1h-1zM285 112h2v1h-2zM292 112h2v1h-2zM301 112h1v2h-1zM291 113h1v1h-1zM287 113h1v1h-1zM290 114h1v1h-1zM288 114h1v1h-1zM744 116h1v1h-1zM748 116h1v1h-1zM746 116h1v1h-1zM747 117h1v7h-1zM749 117h1v7h-1zM745 117h1v7h-1zM752 122h1v2h-1zM750 124h2v1h-2zM296 112h1v15h-1zM301 125h1v2h-1zM293 113h1v15h-1zM285 113h1v15h-1zM289 115h1v13h-1zM297 127h4v1h-4zM79 137h1v1h-1zM87 137h1v1h-1zM83 137h1v1h-1zM84 138h1v1h-1zM80 138h1v1h-1zM86 138h1v1h-1zM82 138h1v1h-1zM88 138h1v1h-1zM93 139h1v1h-1zM92 140h2v1h-2zM89 139h1v3h-1zM91 141h1v1h-1zM89 142h2v1h-2zM93 141h1v9h-1zM89 143h1v7h-1zM294 149h1v1h-1zM92 150h1v1h-1zM90 150h1v1h-1zM85 139h1v13h-1zM81 139h1v13h-1zM91 151h1v1h-1zM92 152h1v1h-1zM90 152h1v1h-1zM93 153h1v1h-1zM89 153h1v1h-1zM299 155h1v1h-1zM295 155h1v1h-1zM307 156h1v1h-1zM752 156h1v1h-1zM303 156h1v1h-1zM744 156h1v1h-1zM745 157h1v1h-1zM751 157h1v1h-1zM750 158h1v2h-1zM746 158h1v2h-1zM744 160h9v1h-9zM750 161h1v2h-1zM746 161h1v2h-1zM745 163h1v1h-1zM751 163h1v1h-1zM752 164h1v1h-1zM744 164h1v1h-1zM544 184h1v1h-1zM532 184h1v1h-1zM543 185h1v2h-1zM533 185h1v2h-1zM151 186h1v2h-1zM541 187h2v1h-2zM534 187h2v1h-2zM536 188h5v1h-5zM147 188h9v1h-9zM541 189h2v1h-2zM534 189h2v1h-2zM543 190h1v2h-1zM533 190h1v2h-1zM155 192h3v1h-3zM151 189h1v5h-1zM158 193h1v1h-1zM154 193h1v1h-1zM151 194h3v1h-3zM544 192h1v5h-1zM532 192h1v5h-1zM159 194h1v3h-1zM747 197h3v1h-3zM158 197h1v1h-1zM543 197h1v2h-1zM533 197h1v2h-1zM750 198h2v1h-2zM745 198h2v1h-2zM744 199h1v1h-1zM534 199h2v1h-2zM541 199h2v1h-2zM151 195h1v6h-1zM157 198h1v3h-1zM752 199h1v2h-1zM749 199h1v2h-1zM536 200h5v1h-5zM745 200h2v1h-2zM158 201h1v1h-1zM750 201h2v1h-2zM747 201h1v2h-1zM744 201h1v2h-1zM752 202h1v1h-1zM159 202h1v1h-1zM750 203h2v1h-2zM745 203h2v1h-2zM747 204h3v1h-3zM178 212h1v1h-1zM747 296h1v1h-1zM745 297h5v1h-5zM747 298h1v2h-1zM749 299h2v1h-2zM747 300h2v1h-2zM751 300h1v2h-1zM747 301h1v3h-1zM750 302h1v2h-1zM751 304h1v1h-1zM438 337h1v1h-1zM437 339h1v1h-1zM503 341h3v1h-3zM436 341h1v1h-1zM506 342h1v1h-1zM436 343h1v1h-1zM502 342h1v3h-1zM435 345h1v1h-1zM502 345h4v1h-4zM506 346h1v3h-1zM502 346h1v3h-1zM503 349h3v1h-3zM433 349h1v1h-1zM431 353h1v1h-1zM430 357h1v1h-1zM428 361h1v1h-1zM381 417h1v1h-1zM379 418h1v1h-1zM147 440h3v1h-3zM146 441h1v1h-1zM150 441h1v3h-1zM149 444h1v1h-1zM148 445h1v1h-1zM147 446h1v1h-1zM146 447h1v1h-1zM146 448h5v1h-5zM273 552h1v1h-1zM277 552h3v1h-3zM267 552h1v1h-1zM266 553h2v1h-2zM273 553h2v1h-2zM276 553h1v1h-1zM280 553h1v1h-1zM275 554h1v1h-1zM265 554h1v1h-1zM273 554h1v1h-1zM272 555h1v1h-1zM274 555h1v1h-1zM281 554h1v3h-1zM275 556h1v1h-1zM280 557h1v1h-1zM276 557h1v1h-1zM277 558h3v1h-3zM278 559h1v1h-1zM267 554h1v7h-1zM271 556h1v5h-1zM279 560h1v1h-1zM280 561h1v1h-1zM270 561h1v1h-1zM268 561h1v1h-1zM269 562h1v5h-1zM281 562h1v5h-1zM280 567h1v1h-1zM279 568h1v1h-1z"/>
<path fill="rgb(0,0,255)" d="M323 31h5v1h-5zM320 32h3v1h-3zM328 32h1v1h-1zM319 33h1v1h-1zM329 33h3v1h-3zM318 34h1v1h-1zM332 34h1v1h-1zM328 34h1v1h-1zM317 35h1v1h-1zM327 35h1v3h-1zM333 35h1v3h-1zM319 37h3v1h-3zM318 38h1v1h-1zM332 38h1v1h-1zM322 38h1v1h-1zM328 38h1v1h-1zM329 39h3v1h-3zM317 39h1v3h-1zM323 39h1v3h-1zM333 41h1v1h-1zM318 42h1v1h-1zM332 42h1v1h-1zM322 42h1v1h-1zM319 43h3v1h-3zM331 43h1v1h-1zM328 44h3v1h-3zM322 44h1v1h-1zM323 45h5v1h-5zM310 112h5v1h-5zM315 113h2v1h-2zM309 113h1v1h-1zM308 114h1v1h-1zM317 114h1v1h-1zM318 115h1v1h-1zM309 115h1v1h-1zM310 116h1v1h-1zM319 116h1v2h-1zM311 117h1v2h-1zM312 119h1v3h-1zM320 118h1v5h-1zM311 122h1v2h-1zM319 123h1v2h-1zM310 124h1v1h-1zM318 125h1v1h-1zM309 125h1v1h-1zM308 126h1v1h-1zM317 126h1v1h-1zM315 127h2v1h-2zM309 127h1v1h-1zM310 128h5v1h-5zM745 136h1v1h-1zM750 136h2v1h-2zM748 136h1v1h-1zM744 137h2v1h-2zM752 137h1v2h-1zM749 137h1v2h-1zM750 139h1v1h-1zM747 138h1v3h-1zM745 138h1v3h-1zM751 140h1v1h-1zM752 141h1v3h-1zM746 141h1v3h-1zM751 144h1v1h-1zM449 150h3v1h-3zM312 150h1v1h-1zM452 151h1v3h-1zM448 151h1v3h-1zM449 154h3v1h-3zM452 155h1v3h-1zM448 155h1v3h-1zM449 158h3v1h-3zM745 176h1v1h-1zM751 176h1v1h-1zM750 177h1v1h-1zM746 177h1v1h-1zM747 178h3v1h-3zM750 179h1v1h-1zM746 179h1v1h-1zM745 180h1v3h-1zM751 180h1v3h-1zM750 183h1v1h-1zM746 183h1v1h-1zM747 184h3v1h-3zM748 216h1v1h-1zM746 216h1v1h-1zM744 216h1v1h-1zM749 217h3v1h-3zM751 218h1v5h-1zM749 218h1v5h-1zM747 217h1v7h-1zM745 217h1v7h-1zM750 223h1v1h-1zM751 224h1v1h-1zM749 224h1v1h-1zM746 246h3v1h-3zM745 247h1v1h-1zM749 247h2v1h-2zM750 248h1v1h-1zM746 248h1v1h-1zM97 249h3v1h-3zM90 249h1v1h-1zM96 250h1v1h-1zM89 250h2v1h-2zM751 249h1v3h-1zM747 249h1v3h-1zM88 251h1v1h-1zM100 250h1v3h-1zM750 252h1v1h-1zM746 252h1v1h-1zM745 253h1v1h-1zM99 253h1v1h-1zM749 253h2v1h-2zM98 254h1v1h-1zM746 254h3v1h-3zM97 255h1v1h-1zM90 251h1v6h-1zM96 256h1v1h-1zM96 257h5v1h-5zM88 257h5v1h-5zM745 316h1v1h-1zM748 316h1v1h-1zM751 316h1v1h-1zM744 317h9v1h-9zM745 318h1v1h-1zM751 318h1v1h-1zM748 318h1v2h-1zM750 319h1v1h-1zM746 319h1v1h-1zM747 320h3v1h-3zM748 321h1v1h-1zM746 322h5v1h-5zM748 323h1v2h-1zM748 326h1v1h-1zM747 327h1v1h-1zM749 327h1v1h-1zM745 326h1v3h-1zM751 326h1v3h-1zM748 328h1v1h-1zM750 329h1v1h-1zM746 329h1v1h-1zM747 330h3v1h-3zM748 331h1v1h-1zM746 332h5v1h-5zM748 333h1v2h-1zM60 398h1v1h-1zM52 398h1v1h-1zM56 398h1v1h-1zM57 399h1v1h-1zM61 399h1v1h-1zM53 399h1v1h-1zM55 399h1v1h-1zM59 399h1v1h-1zM67 409h1v1h-1zM66 410h3v1h-3zM62 400h1v13h-1zM58 400h1v13h-1zM54 400h1v13h-1zM67 411h1v2h-1zM66 413h1v1h-1zM63 413h1v1h-1zM64 414h2v1h-2zM385 421h1v1h-1zM400 435h1v2h-1zM412 435h1v2h-1zM406 435h1v2h-1zM399 437h3v1h-3zM404 437h5v1h-5zM411 437h3v1h-3zM400 438h1v2h-1zM412 438h1v2h-1zM411 440h1v2h-1zM401 440h1v2h-1zM406 438h1v5h-1zM402 442h2v1h-2zM254 442h1v1h-1zM409 442h2v1h-2zM404 443h5v1h-5zM519 445h1v1h-1zM503 445h1v1h-1zM406 444h1v3h-1zM504 446h1v1h-1zM518 446h1v1h-1zM505 447h1v1h-1zM402 447h9v1h-9zM517 447h1v1h-1zM516 448h1v2h-1zM506 448h1v2h-1zM406 448h1v4h-1zM515 450h1v3h-1zM507 450h1v3h-1zM503 453h17v1h-17zM515 454h1v3h-1zM507 454h1v3h-1zM516 457h1v2h-1zM506 457h1v2h-1zM505 459h1v1h-1zM517 459h1v1h-1zM504 460h1v1h-1zM518 460h1v1h-1zM519 461h1v1h-1zM503 461h1v1h-1zM244 462h3v1h-3zM247 463h1v3h-1zM243 463h1v3h-1zM251 462h1v5h-1zM239 462h1v5h-1zM244 466h3v1h-3zM250 467h1v2h-1zM240 467h1v2h-1zM241 469h2v1h-2zM248 469h2v1h-2zM243 470h5v1h-5zM245 471h1v3h-1zM241 474h9v1h-9zM245 475h1v4h-1zM366 494h1v4h-1zM363 494h1v4h-1zM363 498h5v1h-5zM366 499h1v4h-1z"/>
<path fill="rgb(0,128,128)" d="M747 336h3v1h-3zM750 337h1v1h-1zM746 337h1v1h-1zM745 338h1v3h-1zM751 338h1v3h-1zM750 341h1v1h-1zM746 341h1v1h-1zM750 342h2v1h-2zM745 342h2v1h-2zM752 343h1v1h-1zM750 343h1v1h-1zM746 343h1v1h-1zM744 343h1v1h-1zM745 344h1v1h-1zM751 344h1v1h-1zM334 444h1v1h-1zM339 466h5v1h-5zM338 467h1v1h-1zM344 467h1v1h-1zM345 468h1v1h-1zM337 468h1v1h-1zM346 469h1v1h-1zM336 469h1v1h-1zM335 470h1v5h-1zM347 470h1v5h-1zM346 475h1v1h-1zM336 475h1v1h-1zM345 476h1v2h-1zM337 476h1v2h-1zM345 478h3v1h-3zM335 478h3v1h-3zM334 479h1v1h-1zM348 479h1v1h-1zM337 479h1v2h-1zM345 479h1v2h-1zM349 480h1v1h-1zM333 480h1v1h-1zM334 481h1v1h-1zM348 481h1v1h-1zM346 481h1v1h-1zM336 481h1v1h-1zM335 482h1v1h-1zM347 482h1v1h-1z"/>
<path fill="rgb(212,212,212)" d="M0 0h760v1h-760zM0 1h1v598h-1zM759 1h1v598h-1zM0 599h760v1h-760z"/>
</svg>
<svg width="0" height="0" style="position:absolute"><filter id="tf" x="0" y="0" width="1" height="1" color-interpolation-filters="sRGB"><feComponentTransfer><feFuncR type="table" tableValues="0 0.25 0.5 0.75 1"/><feFuncG type="table" tableValues="0 0.25 0.5 0.75 1"/><feFuncB type="table" tableValues="0 0.25 0.5 0.75 1"/></feComponentTransfer></filter></svg>
<div id="tw"><div id="panel">
<div class="ln" style="top:0px"><span style="color:#c0c0c0">Astrolog 5.40</span></div><div class="ln" style="top:30px"><span style="color:#c0c0c0">"      "</span></div><div class="ln" style="top:60px"><span style="color:#c0c0c0">Wed April 29, 2009</span></div><div class="ln" style="top:90px"><span style="color:#c0c0c0"> 5:00pm (ST −8:00 GMT)</span></div><div class="ln" style="top:120px"><span style="color:#c0c0c0">"LA"</span></div><div class="ln" style="top:150px"><span style="color:#c0c0c0">118<span class="sh">°</span>15W 34<span class="sh">°</span>04N</span></div><div class="ln" style="top:180px"><span style="color:#c0c0c0">Placidus houses.</span></div><div class="ln" style="top:210px"><span style="color:#c0c0c0">Tropical, Geocentric.</span></div><div class="ln" style="top:240px"><span style="color:#c0c0c0">Julian Day = 2454951.5417</span></div><div class="ln" style="top:300px"><span style="color:#f00"> 1st house:</span><span style="color:#c0c0c0"> </span><span style="color:#0f0">20Lib53</span></div><div class="ln" style="top:330px"><span style="color:#ff0"> 2nd house:</span><span style="color:#c0c0c0"> </span><span style="color:#00f">19Sco06</span></div><div class="ln" style="top:360px"><span style="color:#0f0"> 3rd house:</span><span style="color:#c0c0c0"> </span><span style="color:#f00">20Sag09</span></div><div class="ln" style="top:390px"><span style="color:#00f"> 4th house:</span><span style="color:#c0c0c0"> </span><span style="color:#ff0">23Cap02</span></div><div class="ln" style="top:420px"><span style="color:#f00"> 5th house:</span><span style="color:#c0c0c0"> </span><span style="color:#0f0">25Aqu35</span></div><div class="ln" style="top:450px"><span style="color:#ff0"> 6th house:</span><span style="color:#c0c0c0"> </span><span style="color:#00f">25Pis19</span></div><div class="ln" style="top:480px"><span style="color:#0f0"> 7th house:</span><span style="color:#c0c0c0"> </span><span style="color:#f00">20Ari53</span></div><div class="ln" style="top:510px"><span style="color:#00f"> 8th house:</span><span style="color:#c0c0c0"> </span><span style="color:#ff0">19Tau06</span></div><div class="ln" style="top:540px"><span style="color:#f00"> 9th house:</span><span style="color:#c0c0c0"> </span><span style="color:#0f0">20Gem09</span></div><div class="ln" style="top:570px"><span style="color:#ff0">10th house:</span><span style="color:#c0c0c0"> </span><span style="color:#00f">23Can02</span></div><div class="ln" style="top:600px"><span style="color:#0f0">11th house:</span><span style="color:#c0c0c0"> </span><span style="color:#f00">25Leo35</span></div><div class="ln" style="top:630px"><span style="color:#00f">12th house:</span><span style="color:#c0c0c0"> </span><span style="color:#ff0">25Vir19</span></div><div class="ln" style="top:690px"><span style="color:#f00"> Sun:</span><span style="color:#c0c0c0"> </span><span style="color:#ff0"> 9Tau50</span><span style="color:#fff"> </span><span style="color:#c0c0c0"> − 0<span class="sh">°</span>00'</span></div><div class="ln" style="top:720px"><span style="color:#00f">Moon:</span><span style="color:#c0c0c0"> </span><span style="color:#00f">15Can49</span><span style="color:#fff"> </span><span style="color:#c0c0c0"> <span class="sh">+</span> 1<span class="sh">°</span>35'</span></div><div class="ln" style="top:750px"><span style="color:#0f0">Merc:</span><span style="color:#c0c0c0"> </span><span style="color:#ff0">29Tau27</span><span style="color:#fff"> </span><span style="color:#c0c0c0"> <span class="sh">+</span> 2<span class="sh">°</span>43'</span></div><div class="ln" style="top:780px"><span style="color:#0f0">Venu:</span><span style="color:#c0c0c0"> </span><span style="color:#f00"> 1Ari54</span><span style="color:#fff"> </span><span style="color:#c0c0c0"> <span class="sh">+</span> 1<span class="sh">°</span>38'</span></div><div class="ln" style="top:810px"><span style="color:#f00">Mars:</span><span style="color:#c0c0c0"> </span><span style="color:#f00"> 5Ari46</span><span style="color:#fff"> </span><span style="color:#c0c0c0"> − 1<span class="sh">°</span>08'</span></div><div class="ln" style="top:840px"><span style="color:#f00">Jupi:</span><span style="color:#c0c0c0"> </span><span style="color:#0f0">23Aqu49</span><span style="color:#fff"> </span><span style="color:#c0c0c0"> − 0<span class="sh">°</span>40'</span></div><div class="ln" style="top:870px"><span style="color:#ff0">Satu:</span><span style="color:#c0c0c0"> </span><span style="color:#ff0">15Vir05</span><span style="color:#fff">R</span><span style="color:#c0c0c0"> <span class="sh">+</span> 2<span class="sh">°</span>13'</span></div><div class="ln" style="top:900px"><span style="color:#0f0">Uran:</span><span style="color:#c0c0c0"> </span><span style="color:#00f">25Pis09</span><span style="color:#fff"> </span><span style="color:#c0c0c0"> − 0<span class="sh">°</span>44'</span></div><div class="ln" style="top:930px"><span style="color:#00f">Nept:</span><span style="color:#c0c0c0"> </span><span style="color:#0f0">26Aqu15</span><span style="color:#fff"> </span><span style="color:#c0c0c0"> − 0<span class="sh">°</span>23'</span></div><div class="ln" style="top:960px"><span style="color:#00f">Plut:</span><span style="color:#c0c0c0"> </span><span style="color:#ff0"> 3Cap08</span><span style="color:#fff">R</span><span style="color:#c0c0c0"> <span class="sh">+</span> 5<span class="sh">°</span>47'</span></div><div class="ln" style="top:990px"><span style="color:#008080">Node:</span><span style="color:#c0c0c0"> </span><span style="color:#0f0"> 4Aqu39</span><span style="color:#fff">R</span><span style="color:#c0c0c0"> <span class="sh">+</span> 0<span class="sh">°</span>00'</span></div><div class="ln" style="top:1050px"><span style="color:#c0c0c0">Fire: 2, Earth: 4,</span></div><div class="ln" style="top:1080px"><span style="color:#c0c0c0">Air : 4, Water: 3</span></div><div class="ln" style="top:1110px"><span style="color:#c0c0c0">Car: 6, Fix: 5, Mut: 2</span></div><div class="ln" style="top:1140px"><span style="color:#c0c0c0">Yang: 6, Yin: 7</span></div><div class="ln" style="top:1170px"><span style="color:#c0c0c0">M: 4, N: 7, A: 2, D: 9</span></div><div class="ln" style="top:1200px"><span style="color:#c0c0c0">Ang: 3, Suc: 4, Cad: 4</span></div><div class="ln" style="top:1230px"><span style="color:#c0c0c0">Learn: 7, Share: 6</span></div>
</div></div>
</div></body></html>
